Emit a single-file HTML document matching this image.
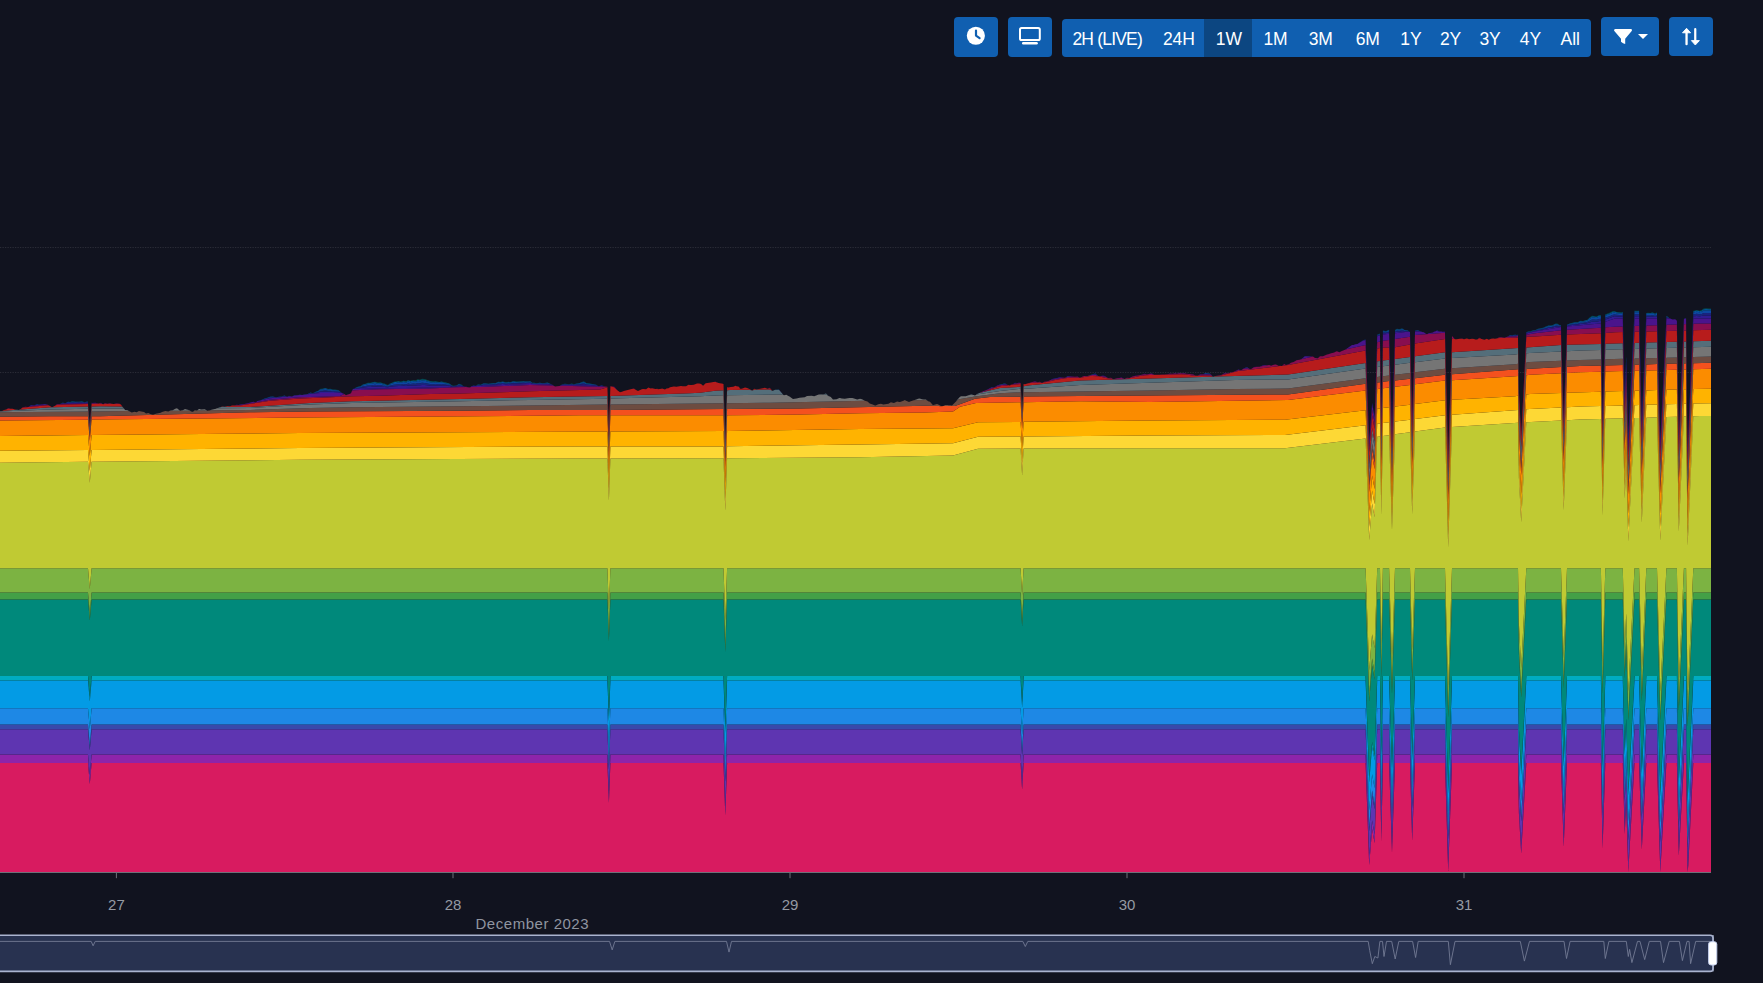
<!DOCTYPE html>
<html><head><meta charset="utf-8">
<style>
html,body{margin:0;padding:0;background:#11131f;width:1763px;height:983px;overflow:hidden;}
body{position:relative;font-family:"Liberation Sans",sans-serif;}
svg{position:absolute;left:0;top:0;}
.btn{position:absolute;background:#105fb0;border-radius:4px;}
.grp{position:absolute;left:1062px;top:19px;width:529px;height:38px;background:#105fb0;border-radius:4px;overflow:hidden;}
.grp span{position:absolute;top:10px;line-height:normal;color:#fff;font-size:17.5px;white-space:nowrap;}
.grp .act{position:absolute;top:0;left:142px;width:48px;height:38px;background:#0c4681;}
</style></head>
<body>
<svg width="1763" height="983" viewBox="0 0 1763 983">
<g stroke="rgba(255,255,255,0.11)" stroke-width="1" stroke-dasharray="1.25 1.25">
<line x1="0" y1="247.5" x2="1711" y2="247.5"/>
<line x1="0" y1="372.5" x2="1711" y2="372.5"/>
</g>
<g>
<path fill="#D81B60" d="M0,762.9 88,762.9 89.8,783.9 91.6,762.9 607.4,762.9 608.9,802.8 610.4,762.9 723.5,762.9 725.3,815.4 727.1,762.9 1020.6,762.9 1022.1,789.4 1023.6,762.9 1365.6,762.9 1369.2,864.9 1372.1,828.9 1374.6,842.9 1377.2,762.9 1380,762.9 1381.3,841.4 1382.9,762.9 1389.1,762.9 1392,852.2 1395,762.9 1410,762.9 1412.2,840.8 1415,762.9 1445,762.9 1448.2,870.9 1452,762.9 1518,762.9 1518.9,812.95 1521.2,853.54 1526.3,762.9 1561,762.9 1563.7,846.68 1567,762.9 1600.9,762.9 1602.6,848.34 1605.3,762.9 1622.8,762.9 1624.7,833.7 1626.2,802.73 1628.3,871.75 1634.5,762.9 1639.1,762.9 1641.8,849.3 1646.3,762.9 1657,762.9 1660.3,872.1 1666.4,762.9 1676.9,762.9 1678.8,855.7 1683.9,762.9 1686.1,762.9 1687.6,872.1 1688.3,864.98 1693.3,762.9 1711,762.9 1711,872.4 0,872.4Z"/>
<path fill="#8E24AA" d="M0,754.5 88,754.5 89.8,775.5 91.6,754.5 607.4,754.5 608.9,794.49 610.4,754.5 723.5,754.5 725.3,807 727.1,754.5 1020.6,754.5 1022.1,781 1023.6,754.5 1365.6,754.5 1369.2,856.5 1372.1,820.5 1374.6,834.5 1377.2,754.5 1380,754.5 1381.3,833 1382.9,754.5 1389.1,754.5 1392,844.05 1395,754.5 1410,754.5 1412.2,832.58 1415,754.5 1445,754.5 1448.2,863.02 1452,754.5 1518,754.5 1518.9,804.76 1521.2,845.52 1526.3,754.5 1561,754.5 1563.7,838.53 1567,754.5 1600.9,754.5 1602.6,840.4 1605.3,754.5 1622.8,754.5 1624.7,825.7 1626.2,794.55 1628.3,863.97 1634.5,754.5 1639.1,754.5 1641.8,841.69 1646.3,754.5 1657,754.5 1660.3,865.5 1666.4,754.5 1676.9,754.5 1678.8,848.26 1683.9,754.5 1686.1,754.5 1687.6,871.52 1693.3,754.5 1711,754.5 1711,762.9 1693.3,762.9 1688.3,864.98 1687.6,872.1 1686.1,762.9 1683.9,762.9 1678.8,855.7 1676.9,762.9 1666.4,762.9 1660.3,872.1 1657,762.9 1646.3,762.9 1641.8,849.3 1639.1,762.9 1634.5,762.9 1628.3,871.75 1626.2,802.73 1624.7,833.7 1622.8,762.9 1605.3,762.9 1602.6,848.34 1600.9,762.9 1567,762.9 1563.7,846.68 1561,762.9 1526.3,762.9 1521.2,853.54 1518.9,812.95 1518,762.9 1452,762.9 1448.2,870.9 1445,762.9 1415,762.9 1412.2,840.8 1410,762.9 1395,762.9 1392,852.2 1389.1,762.9 1382.9,762.9 1381.3,841.4 1380,762.9 1377.2,762.9 1374.6,842.9 1372.1,828.9 1369.2,864.9 1365.6,762.9 1023.6,762.9 1022.1,789.4 1020.6,762.9 727.1,762.9 725.3,815.4 723.5,762.9 610.4,762.9 608.9,802.8 607.4,762.9 91.6,762.9 89.8,783.9 88,762.9 0,762.9Z"/>
<path fill="#5E35B1" d="M0,729.3 88,729.3 89.8,750.3 91.6,729.3 607.4,729.3 608.9,769.56 610.4,729.3 723.5,729.3 725.3,781.8 727.1,729.3 1020.6,729.3 1022.1,755.8 1023.6,729.3 1365.6,729.3 1369.2,831.3 1372.1,795.3 1374.6,809.3 1377.2,729.3 1380,729.3 1381.3,807.8 1382.9,729.3 1389.1,729.3 1392,819.58 1395,729.3 1410,729.3 1412.2,807.91 1415,729.3 1445,729.3 1448.2,839.37 1452,729.3 1518,729.3 1518.9,780.2 1521.2,821.48 1526.3,729.3 1561,729.3 1563.7,814.08 1567,729.3 1600.9,729.3 1602.6,816.56 1605.3,729.3 1622.8,729.3 1624.7,801.69 1626.2,770.02 1628.3,840.6 1634.5,729.3 1639.1,729.3 1641.8,818.84 1646.3,729.3 1657,729.3 1660.3,841.98 1666.4,729.3 1676.9,729.3 1678.8,825.94 1683.9,729.3 1686.1,729.3 1687.6,847.99 1693.3,729.3 1711,729.3 1711,754.5 1693.3,754.5 1687.6,871.52 1686.1,754.5 1683.9,754.5 1678.8,848.26 1676.9,754.5 1666.4,754.5 1660.3,865.5 1657,754.5 1646.3,754.5 1641.8,841.69 1639.1,754.5 1634.5,754.5 1628.3,863.97 1626.2,794.55 1624.7,825.7 1622.8,754.5 1605.3,754.5 1602.6,840.4 1600.9,754.5 1567,754.5 1563.7,838.53 1561,754.5 1526.3,754.5 1521.2,845.52 1518.9,804.76 1518,754.5 1452,754.5 1448.2,863.02 1445,754.5 1415,754.5 1412.2,832.58 1410,754.5 1395,754.5 1392,844.05 1389.1,754.5 1382.9,754.5 1381.3,833 1380,754.5 1377.2,754.5 1374.6,834.5 1372.1,820.5 1369.2,856.5 1365.6,754.5 1023.6,754.5 1022.1,781 1020.6,754.5 727.1,754.5 725.3,807 723.5,754.5 610.4,754.5 608.9,794.49 607.4,754.5 91.6,754.5 89.8,775.5 88,754.5 0,754.5Z"/>
<path fill="#3949AB" d="M0,724.5 88,724.5 89.8,745.5 91.6,724.5 607.4,724.5 608.9,764.81 610.4,724.5 723.5,724.5 725.3,777 727.1,724.5 1020.6,724.5 1022.1,751 1023.6,724.5 1365.6,724.5 1369.2,826.5 1372.1,790.5 1374.6,804.5 1377.2,724.5 1380,724.5 1381.3,803 1382.9,724.5 1389.1,724.5 1392,814.92 1395,724.5 1410,724.5 1412.2,803.21 1415,724.5 1445,724.5 1448.2,834.87 1452,724.5 1518,724.5 1518.9,775.53 1521.2,816.9 1526.3,724.5 1561,724.5 1563.7,809.43 1567,724.5 1600.9,724.5 1602.6,812.02 1605.3,724.5 1622.8,724.5 1624.7,797.12 1626.2,765.35 1628.3,836.15 1634.5,724.5 1639.1,724.5 1641.8,814.49 1646.3,724.5 1657,724.5 1660.3,837.5 1666.4,724.5 1676.9,724.5 1678.8,821.68 1683.9,724.5 1686.1,724.5 1687.6,843.51 1693.3,724.5 1711,724.5 1711,729.3 1693.3,729.3 1687.6,847.99 1686.1,729.3 1683.9,729.3 1678.8,825.94 1676.9,729.3 1666.4,729.3 1660.3,841.98 1657,729.3 1646.3,729.3 1641.8,818.84 1639.1,729.3 1634.5,729.3 1628.3,840.6 1626.2,770.02 1624.7,801.69 1622.8,729.3 1605.3,729.3 1602.6,816.56 1600.9,729.3 1567,729.3 1563.7,814.08 1561,729.3 1526.3,729.3 1521.2,821.48 1518.9,780.2 1518,729.3 1452,729.3 1448.2,839.37 1445,729.3 1415,729.3 1412.2,807.91 1410,729.3 1395,729.3 1392,819.58 1389.1,729.3 1382.9,729.3 1381.3,807.8 1380,729.3 1377.2,729.3 1374.6,809.3 1372.1,795.3 1369.2,831.3 1365.6,729.3 1023.6,729.3 1022.1,755.8 1020.6,729.3 727.1,729.3 725.3,781.8 723.5,729.3 610.4,729.3 608.9,769.56 607.4,729.3 91.6,729.3 89.8,750.3 88,729.3 0,729.3Z"/>
<path fill="#1E88E5" d="M0,708.3 88,708.3 89.8,729.3 91.6,708.3 607.4,708.3 608.9,748.79 610.4,708.3 723.5,708.3 725.3,760.8 727.1,708.3 1020.6,708.3 1022.1,734.8 1023.6,708.3 1365.6,708.3 1369.2,810.3 1372.1,774.3 1374.6,788.3 1377.2,708.3 1380,708.3 1381.3,786.8 1382.9,708.3 1389.1,708.3 1392,799.2 1395,708.3 1410,708.3 1412.2,787.35 1415,708.3 1445,708.3 1448.2,819.67 1452,708.3 1518,708.3 1518.9,759.74 1521.2,801.45 1526.3,708.3 1561,708.3 1563.7,793.71 1567,708.3 1600.9,708.3 1602.6,796.7 1605.3,708.3 1622.8,708.3 1624.7,781.68 1626.2,749.58 1628.3,821.12 1634.5,708.3 1639.1,708.3 1641.8,799.81 1646.3,708.3 1657,708.3 1660.3,822.38 1666.4,708.3 1676.9,708.3 1678.8,807.33 1683.9,708.3 1686.1,708.3 1687.6,828.39 1693.3,708.3 1711,708.3 1711,724.5 1693.3,724.5 1687.6,843.51 1686.1,724.5 1683.9,724.5 1678.8,821.68 1676.9,724.5 1666.4,724.5 1660.3,837.5 1657,724.5 1646.3,724.5 1641.8,814.49 1639.1,724.5 1634.5,724.5 1628.3,836.15 1626.2,765.35 1624.7,797.12 1622.8,724.5 1605.3,724.5 1602.6,812.02 1600.9,724.5 1567,724.5 1563.7,809.43 1561,724.5 1526.3,724.5 1521.2,816.9 1518.9,775.53 1518,724.5 1452,724.5 1448.2,834.87 1445,724.5 1415,724.5 1412.2,803.21 1410,724.5 1395,724.5 1392,814.92 1389.1,724.5 1382.9,724.5 1381.3,803 1380,724.5 1377.2,724.5 1374.6,804.5 1372.1,790.5 1369.2,826.5 1365.6,724.5 1023.6,724.5 1022.1,751 1020.6,724.5 727.1,724.5 725.3,777 723.5,724.5 610.4,724.5 608.9,764.81 607.4,724.5 91.6,724.5 89.8,745.5 88,724.5 0,724.5Z"/>
<path fill="#039BE5" d="M0,680.4 88,680.4 89.8,701.4 91.6,680.4 607.4,680.4 608.9,721.19 610.4,680.4 723.5,680.4 725.3,732.9 727.1,680.4 1020.6,680.4 1022.1,706.9 1023.6,680.4 1365.6,680.4 1369.2,782.4 1372.1,746.4 1374.6,760.4 1377.2,680.4 1380,680.4 1381.3,758.9 1382.9,680.4 1389.1,680.4 1392,772.12 1395,680.4 1410,680.4 1412.2,760.04 1415,680.4 1445,680.4 1448.2,793.49 1452,680.4 1518,680.4 1518.9,732.55 1521.2,774.84 1526.3,680.4 1561,680.4 1563.7,766.65 1567,680.4 1600.9,680.4 1602.6,770.32 1605.3,680.4 1622.8,680.4 1624.7,755.1 1626.2,722.42 1628.3,795.25 1634.5,680.4 1639.1,680.4 1641.8,774.52 1646.3,680.4 1657,680.4 1660.3,796.34 1666.4,680.4 1676.9,680.4 1678.8,782.61 1683.9,680.4 1686.1,680.4 1687.6,802.35 1693.3,680.4 1711,680.4 1711,708.3 1693.3,708.3 1687.6,828.39 1686.1,708.3 1683.9,708.3 1678.8,807.33 1676.9,708.3 1666.4,708.3 1660.3,822.38 1657,708.3 1646.3,708.3 1641.8,799.81 1639.1,708.3 1634.5,708.3 1628.3,821.12 1626.2,749.58 1624.7,781.68 1622.8,708.3 1605.3,708.3 1602.6,796.7 1600.9,708.3 1567,708.3 1563.7,793.71 1561,708.3 1526.3,708.3 1521.2,801.45 1518.9,759.74 1518,708.3 1452,708.3 1448.2,819.67 1445,708.3 1415,708.3 1412.2,787.35 1410,708.3 1395,708.3 1392,799.2 1389.1,708.3 1382.9,708.3 1381.3,786.8 1380,708.3 1377.2,708.3 1374.6,788.3 1372.1,774.3 1369.2,810.3 1365.6,708.3 1023.6,708.3 1022.1,734.8 1020.6,708.3 727.1,708.3 725.3,760.8 723.5,708.3 610.4,708.3 608.9,748.79 607.4,708.3 91.6,708.3 89.8,729.3 88,708.3 0,708.3Z"/>
<path fill="#00ACC1" d="M0,676 88,676 89.8,697 91.6,676 607.4,676 608.9,716.84 610.4,676 723.5,676 725.3,728.5 727.1,676 1020.6,676 1022.1,702.5 1023.6,676 1365.6,676 1369.2,778 1372.1,742 1374.6,756 1377.2,676 1380,676 1381.3,754.5 1382.9,676 1389.1,676 1392,767.85 1395,676 1410,676 1412.2,755.73 1415,676 1445,676 1448.2,789.36 1452,676 1518,676 1518.9,728.26 1521.2,770.64 1526.3,676 1561,676 1563.7,762.38 1567,676 1600.9,676 1602.6,766.16 1605.3,676 1622.8,676 1624.7,750.91 1626.2,718.14 1628.3,791.17 1634.5,676 1639.1,676 1641.8,770.53 1646.3,676 1657,676 1660.3,792.23 1666.4,676 1676.9,676 1678.8,778.72 1683.9,676 1686.1,676 1687.6,798.24 1693.3,676 1711,676 1711,680.4 1693.3,680.4 1687.6,802.35 1686.1,680.4 1683.9,680.4 1678.8,782.61 1676.9,680.4 1666.4,680.4 1660.3,796.34 1657,680.4 1646.3,680.4 1641.8,774.52 1639.1,680.4 1634.5,680.4 1628.3,795.25 1626.2,722.42 1624.7,755.1 1622.8,680.4 1605.3,680.4 1602.6,770.32 1600.9,680.4 1567,680.4 1563.7,766.65 1561,680.4 1526.3,680.4 1521.2,774.84 1518.9,732.55 1518,680.4 1452,680.4 1448.2,793.49 1445,680.4 1415,680.4 1412.2,760.04 1410,680.4 1395,680.4 1392,772.12 1389.1,680.4 1382.9,680.4 1381.3,758.9 1380,680.4 1377.2,680.4 1374.6,760.4 1372.1,746.4 1369.2,782.4 1365.6,680.4 1023.6,680.4 1022.1,706.9 1020.6,680.4 727.1,680.4 725.3,732.9 723.5,680.4 610.4,680.4 608.9,721.19 607.4,680.4 91.6,680.4 89.8,701.4 88,680.4 0,680.4Z"/>
<path fill="#00897B" d="M0,599.4 88,599.4 89.8,620.4 91.6,599.4 607.4,599.4 608.9,641.06 610.4,599.4 723.5,599.4 725.3,651.9 727.1,599.4 1020.6,599.4 1022.1,625.9 1023.6,599.4 1365.6,599.4 1369.2,701.4 1372.1,665.4 1374.6,679.4 1377.2,599.4 1380,599.4 1381.3,677.9 1382.9,599.4 1389.1,599.4 1392,693.49 1395,599.4 1410,599.4 1412.2,680.74 1415,599.4 1445,599.4 1448.2,717.48 1452,599.4 1518,599.4 1518.9,653.61 1521.2,697.57 1526.3,599.4 1561,599.4 1563.7,688.07 1567,599.4 1600.9,599.4 1602.6,693.71 1605.3,599.4 1622.8,599.4 1624.7,677.93 1626.2,643.57 1628.3,720.14 1634.5,599.4 1639.1,599.4 1641.8,701.09 1646.3,599.4 1657,599.4 1660.3,720.73 1666.4,599.4 1676.9,599.4 1678.8,710.85 1683.9,599.4 1686.1,599.4 1687.6,726.73 1693.3,599.4 1711,599.4 1711,676 1693.3,676 1687.6,798.24 1686.1,676 1683.9,676 1678.8,778.72 1676.9,676 1666.4,676 1660.3,792.23 1657,676 1646.3,676 1641.8,770.53 1639.1,676 1634.5,676 1628.3,791.17 1626.2,718.14 1624.7,750.91 1622.8,676 1605.3,676 1602.6,766.16 1600.9,676 1567,676 1563.7,762.38 1561,676 1526.3,676 1521.2,770.64 1518.9,728.26 1518,676 1452,676 1448.2,789.36 1445,676 1415,676 1412.2,755.73 1410,676 1395,676 1392,767.85 1389.1,676 1382.9,676 1381.3,754.5 1380,676 1377.2,676 1374.6,756 1372.1,742 1369.2,778 1365.6,676 1023.6,676 1022.1,702.5 1020.6,676 727.1,676 725.3,728.5 723.5,676 610.4,676 608.9,716.84 607.4,676 91.6,676 89.8,697 88,676 0,676Z"/>
<path fill="#43A047" d="M0,592.5 88,592.5 89.8,613.5 91.6,592.5 607.4,592.5 608.9,634.24 610.4,592.5 723.5,592.5 725.3,645 727.1,592.5 1020.6,592.5 1022.1,619 1023.6,592.5 1365.6,592.5 1369.2,694.5 1372.1,658.5 1374.6,672.5 1377.2,592.5 1380,592.5 1381.3,671 1382.9,592.5 1389.1,592.5 1392,686.79 1395,592.5 1410,592.5 1412.2,673.99 1415,592.5 1445,592.5 1448.2,711.01 1452,592.5 1518,592.5 1518.9,646.88 1521.2,690.99 1526.3,592.5 1561,592.5 1563.7,681.38 1567,592.5 1600.9,592.5 1602.6,687.19 1605.3,592.5 1622.8,592.5 1624.7,671.36 1626.2,636.86 1628.3,713.74 1634.5,592.5 1639.1,592.5 1641.8,694.84 1646.3,592.5 1657,592.5 1660.3,714.29 1666.4,592.5 1676.9,592.5 1678.8,704.74 1683.9,592.5 1686.1,592.5 1687.6,720.29 1693.3,592.5 1711,592.5 1711,599.4 1693.3,599.4 1687.6,726.73 1686.1,599.4 1683.9,599.4 1678.8,710.85 1676.9,599.4 1666.4,599.4 1660.3,720.73 1657,599.4 1646.3,599.4 1641.8,701.09 1639.1,599.4 1634.5,599.4 1628.3,720.14 1626.2,643.57 1624.7,677.93 1622.8,599.4 1605.3,599.4 1602.6,693.71 1600.9,599.4 1567,599.4 1563.7,688.07 1561,599.4 1526.3,599.4 1521.2,697.57 1518.9,653.61 1518,599.4 1452,599.4 1448.2,717.48 1445,599.4 1415,599.4 1412.2,680.74 1410,599.4 1395,599.4 1392,693.49 1389.1,599.4 1382.9,599.4 1381.3,677.9 1380,599.4 1377.2,599.4 1374.6,679.4 1372.1,665.4 1369.2,701.4 1365.6,599.4 1023.6,599.4 1022.1,625.9 1020.6,599.4 727.1,599.4 725.3,651.9 723.5,599.4 610.4,599.4 608.9,641.06 607.4,599.4 91.6,599.4 89.8,620.4 88,599.4 0,599.4Z"/>
<path fill="#7CB342" d="M0,568.3 88,568.3 89.8,589.3 91.6,568.3 607.4,568.3 608.9,610.3 610.4,568.3 723.5,568.3 725.3,620.8 727.1,568.3 1020.6,568.3 1022.1,594.8 1023.6,568.3 1365.6,568.3 1369.2,670.3 1372.1,634.3 1374.6,648.3 1377.2,568.3 1380,568.3 1381.3,646.8 1382.9,568.3 1389.1,568.3 1392,663.3 1395,568.3 1410,568.3 1412.2,650.3 1415,568.3 1445,568.3 1448.2,688.3 1452,568.3 1518,568.3 1518.9,623.3 1521.2,667.9 1526.3,568.3 1561,568.3 1563.7,657.9 1567,568.3 1600.9,568.3 1602.6,664.3 1605.3,568.3 1622.8,568.3 1624.7,648.3 1626.2,613.3 1628.3,691.3 1634.5,568.3 1639.1,568.3 1641.8,672.9 1646.3,568.3 1657,568.3 1660.3,691.7 1666.4,568.3 1676.9,568.3 1678.8,683.3 1683.9,568.3 1686.1,568.3 1687.6,697.7 1693.3,568.3 1711,568.3 1711,592.5 1693.3,592.5 1687.6,720.29 1686.1,592.5 1683.9,592.5 1678.8,704.74 1676.9,592.5 1666.4,592.5 1660.3,714.29 1657,592.5 1646.3,592.5 1641.8,694.84 1639.1,592.5 1634.5,592.5 1628.3,713.74 1626.2,636.86 1624.7,671.36 1622.8,592.5 1605.3,592.5 1602.6,687.19 1600.9,592.5 1567,592.5 1563.7,681.38 1561,592.5 1526.3,592.5 1521.2,690.99 1518.9,646.88 1518,592.5 1452,592.5 1448.2,711.01 1445,592.5 1415,592.5 1412.2,673.99 1410,592.5 1395,592.5 1392,686.79 1389.1,592.5 1382.9,592.5 1381.3,671 1380,592.5 1377.2,592.5 1374.6,672.5 1372.1,658.5 1369.2,694.5 1365.6,592.5 1023.6,592.5 1022.1,619 1020.6,592.5 727.1,592.5 725.3,645 723.5,592.5 610.4,592.5 608.9,634.24 607.4,592.5 91.6,592.5 89.8,613.5 88,592.5 0,592.5Z"/>
<path fill="#C0CA33" d="M0,462.7 88,461.85 89.8,482.83 91.6,461.81 300,459.8 580,458.4 607.4,458.38 608.9,500.38 610.4,458.38 723.5,458.3 725.3,510.8 727.1,458.28 860,457.2 953,455.5 978,448.7 1020.6,448.58 1022.1,475.07 1023.6,448.57 1150,448.2 1285,448.2 1365.6,438.42 1369.2,539.92 1372.1,503.51 1374.6,517.17 1377.2,436.81 1380,436.42 1381.3,514.74 1382.9,436.02 1389.1,435.16 1392,529.75 1395,434.34 1410,432.26 1412.2,513.95 1415,431.56 1445,427.4 1448.2,547.2 1452,426.96 1518,422.8 1518.9,477.74 1521.2,522.19 1526.3,422.25 1561,420.51 1563.7,509.98 1567,420.22 1580,419.6 1600.9,418.99 1602.6,514.94 1605.3,418.86 1622.8,418.35 1624.7,498.3 1626.2,463.25 1628.3,541.19 1634.5,418.01 1639.1,417.88 1641.8,522.4 1646.3,417.67 1657,417.35 1660.3,540.66 1666.4,417.08 1676.9,416.77 1678.8,531.72 1683.9,416.57 1686.1,416.51 1687.6,545.86 1693.3,416.3 1700,416.1 1711,416 1711,568.3 1693.3,568.3 1687.6,697.7 1686.1,568.3 1683.9,568.3 1678.8,683.3 1676.9,568.3 1666.4,568.3 1660.3,691.7 1657,568.3 1646.3,568.3 1641.8,672.9 1639.1,568.3 1634.5,568.3 1628.3,691.3 1626.2,613.3 1624.7,648.3 1622.8,568.3 1605.3,568.3 1602.6,664.3 1600.9,568.3 1567,568.3 1563.7,657.9 1561,568.3 1526.3,568.3 1521.2,667.9 1518.9,623.3 1518,568.3 1452,568.3 1448.2,688.3 1445,568.3 1415,568.3 1412.2,650.3 1410,568.3 1395,568.3 1392,663.3 1389.1,568.3 1382.9,568.3 1381.3,646.8 1380,568.3 1377.2,568.3 1374.6,648.3 1372.1,634.3 1369.2,670.3 1365.6,568.3 1023.6,568.3 1022.1,594.8 1020.6,568.3 727.1,568.3 725.3,620.8 723.5,568.3 610.4,568.3 608.9,610.3 607.4,568.3 91.6,568.3 89.8,589.3 88,568.3 0,568.3Z"/>
<path fill="#FDD835" d="M0,450.8 88,449.98 89.8,470.96 91.6,449.95 300,448 580,446.4 607.4,446.4 608.9,488.4 610.4,446.4 723.5,446.4 725.3,498.9 727.1,446.37 860,444.4 953,443.2 978,436.8 1020.6,436.5 1022.1,462.99 1023.6,436.48 1150,435.6 1285,435 1365.6,425.32 1369.2,526.86 1372.1,490.49 1374.6,504.18 1377.2,423.84 1380,423.49 1381.3,501.82 1382.9,423.12 1389.1,422.33 1392,516.96 1395,421.57 1410,419.66 1412.2,501.38 1415,419.02 1445,415.2 1448.2,534.97 1452,414.7 1518,409.96 1518.9,464.89 1521.2,509.3 1526.3,409.3 1530,409 1561,407.51 1563.7,496.98 1567,407.22 1580,406.6 1600.9,406.04 1602.6,502 1605.3,405.93 1622.8,405.46 1624.7,485.41 1626.2,450.37 1628.3,528.31 1634.5,405.15 1639.1,405.02 1641.8,509.55 1646.3,404.83 1657,404.55 1660.3,527.86 1666.4,404.3 1676.9,404.02 1678.8,518.97 1683.9,403.83 1686.1,403.77 1687.6,533.13 1693.3,403.58 1711,403.2 1711,416 1700,416.1 1693.3,416.3 1687.6,545.86 1686.1,416.51 1683.9,416.57 1678.8,531.72 1676.9,416.77 1666.4,417.08 1660.3,540.66 1657,417.35 1646.3,417.67 1641.8,522.4 1639.1,417.88 1634.5,418.01 1628.3,541.19 1626.2,463.25 1624.7,498.3 1622.8,418.35 1605.3,418.86 1602.6,514.94 1600.9,418.99 1580,419.6 1567,420.22 1563.7,509.98 1561,420.51 1526.3,422.25 1521.2,522.19 1518.9,477.74 1518,422.8 1452,426.96 1448.2,547.2 1445,427.4 1415,431.56 1412.2,513.95 1410,432.26 1395,434.34 1392,529.75 1389.1,435.16 1382.9,436.02 1381.3,514.74 1380,436.42 1377.2,436.81 1374.6,517.17 1372.1,503.51 1369.2,539.92 1365.6,438.42 1285,448.2 1150,448.2 1023.6,448.57 1022.1,475.07 1020.6,448.58 978,448.7 953,455.5 860,457.2 727.1,458.28 725.3,510.8 723.5,458.3 610.4,458.38 608.9,500.38 607.4,458.38 580,458.4 300,459.8 91.6,461.81 89.8,482.83 88,461.85 0,462.7Z"/>
<path fill="#FFB300" d="M0,436 88,435.12 89.8,456.1 91.6,435.08 300,433 607.4,431.42 608.9,473.42 610.4,431.42 723.5,431.1 725.3,483.6 727.1,431.07 860,429 953,428.3 978,422.3 1020.6,421.88 1022.1,448.36 1023.6,421.85 1150,420.6 1285,419.7 1365.6,410.32 1369.2,511.86 1372.1,475.49 1374.6,489.18 1377.2,408.84 1380,408.49 1381.3,486.82 1382.9,408.12 1389.1,407.33 1392,501.96 1395,406.57 1410,404.66 1412.2,486.38 1415,404.02 1445,400.2 1448.2,520.02 1452,399.8 1515,396.2 1518,395.76 1518.9,450.63 1521.2,494.89 1526.3,394.54 1530,394 1561,392.88 1563.7,482.39 1567,392.67 1600.9,391.63 1602.6,487.58 1605.3,391.5 1622.8,391.02 1624.7,470.97 1626.2,435.93 1628.3,513.87 1634.5,390.7 1639.1,390.57 1641.8,495.1 1646.3,390.38 1657,390.08 1660.3,513.39 1666.4,389.82 1676.9,389.54 1678.8,504.48 1683.9,389.34 1686.1,389.28 1687.6,518.64 1693.3,389.08 1711,388.8 1711,403.2 1693.3,403.58 1687.6,533.13 1686.1,403.77 1683.9,403.83 1678.8,518.97 1676.9,404.02 1666.4,404.3 1660.3,527.86 1657,404.55 1646.3,404.83 1641.8,509.55 1639.1,405.02 1634.5,405.15 1628.3,528.31 1626.2,450.37 1624.7,485.41 1622.8,405.46 1605.3,405.93 1602.6,502 1600.9,406.04 1580,406.6 1567,407.22 1563.7,496.98 1561,407.51 1530,409 1526.3,409.3 1521.2,509.3 1518.9,464.89 1518,409.96 1452,414.7 1448.2,534.97 1445,415.2 1415,419.02 1412.2,501.38 1410,419.66 1395,421.57 1392,516.96 1389.1,422.33 1382.9,423.12 1381.3,501.82 1380,423.49 1377.2,423.84 1374.6,504.18 1372.1,490.49 1369.2,526.86 1365.6,425.32 1285,435 1150,435.6 1023.6,436.48 1022.1,462.99 1020.6,436.5 978,436.8 953,443.2 860,444.4 727.1,446.37 725.3,498.9 723.5,446.4 610.4,446.4 608.9,488.4 607.4,446.4 580,446.4 300,448 91.6,449.95 89.8,470.96 88,449.98 0,450.8Z"/>
<path fill="#FB8C00" d="M0,420.6 88,419.66 89.8,440.64 91.6,419.62 300,417.6 580,415.3 607.4,415.3 608.9,457.3 610.4,415.3 723.5,415.3 725.3,467.8 727.1,415.28 800,414.5 860,413.3 925,412.4 953,411.5 960,406.7 976,402.9 1020.6,402.21 1022.1,428.69 1023.6,402.17 1080,401.3 1150,401.9 1288,400 1365.6,390.43 1369.2,491.98 1372.1,455.62 1374.6,469.31 1377.2,388.99 1380,388.64 1381.3,466.98 1382.9,388.28 1389.1,387.52 1392,482.16 1395,386.79 1410,384.93 1412.2,466.66 1415,384.31 1445,380.6 1448.2,500.4 1452,380.17 1515,376.3 1518,376 1518.9,430.91 1521.2,475.28 1526.3,375.17 1530,374.8 1561,373.25 1563.7,462.72 1567,372.95 1580,372.3 1600.9,371.73 1602.6,467.68 1605.3,371.6 1622.8,371.12 1624.7,451.07 1626.2,416.03 1628.3,493.97 1634.5,370.8 1639.1,370.67 1641.8,475.2 1646.3,370.48 1657,370.18 1660.3,493.49 1666.4,369.92 1676.9,369.64 1678.8,484.58 1683.9,369.44 1686.1,369.38 1687.6,498.74 1693.3,369.18 1711,368.8 1711,388.8 1693.3,389.08 1687.6,518.64 1686.1,389.28 1683.9,389.34 1678.8,504.48 1676.9,389.54 1666.4,389.82 1660.3,513.39 1657,390.08 1646.3,390.38 1641.8,495.1 1639.1,390.57 1634.5,390.7 1628.3,513.87 1626.2,435.93 1624.7,470.97 1622.8,391.02 1605.3,391.5 1602.6,487.58 1600.9,391.63 1567,392.67 1563.7,482.39 1561,392.88 1530,394 1526.3,394.54 1521.2,494.89 1518.9,450.63 1518,395.76 1515,396.2 1452,399.8 1448.2,520.02 1445,400.2 1415,404.02 1412.2,486.38 1410,404.66 1395,406.57 1392,501.96 1389.1,407.33 1382.9,408.12 1381.3,486.82 1380,408.49 1377.2,408.84 1374.6,489.18 1372.1,475.49 1369.2,511.86 1365.6,410.32 1285,419.7 1150,420.6 1023.6,421.85 1022.1,448.36 1020.6,421.88 978,422.3 953,428.3 860,429 727.1,431.07 725.3,483.6 723.5,431.1 610.4,431.42 608.9,473.42 607.4,431.42 300,433 91.6,435.08 89.8,456.1 88,435.12 0,436Z"/>
<path fill="#F4511E" d="M0,416.8 50,416.3 88,416.3 89.8,437.3 91.6,416.3 100,416.3 250,412.2 310,411.5 460,410.8 530,409.9 607.4,409.9 608.9,451.9 610.4,409.9 723.5,409.01 725.3,461.5 727.1,408.99 800,408.6 925,405.8 938.26,405.89 942,406.32 943.28,405.96 955,406 975,398.8 990,397 1020.6,396.63 1022.1,423.11 1023.6,396.59 1080,395.9 1150,395.6 1288,394.4 1365.6,383.82 1369.2,485.4 1372.1,449.07 1374.6,462.78 1377.2,382.48 1380,382.16 1381.3,460.51 1382.9,381.83 1389.1,381.12 1392,475.79 1395,380.44 1410,378.72 1412.2,460.47 1415,378.14 1445,374.7 1448.2,494.46 1452,374.18 1518,369.34 1518.9,424.29 1521.2,468.77 1526.3,368.9 1561,367.09 1563.7,456.55 1567,366.78 1580,366.1 1600.9,365.56 1602.6,461.52 1605.3,365.45 1622.8,364.99 1624.7,444.95 1626.2,409.91 1628.3,487.85 1634.5,364.69 1639.1,364.57 1641.8,469.1 1646.3,364.39 1657,364.11 1660.3,487.43 1666.4,363.87 1676.9,363.6 1678.8,478.55 1683.9,363.42 1686.1,363.36 1687.6,492.72 1693.3,363.17 1711,362.8 1711,368.8 1693.3,369.18 1687.6,498.74 1686.1,369.38 1683.9,369.44 1678.8,484.58 1676.9,369.64 1666.4,369.92 1660.3,493.49 1657,370.18 1646.3,370.48 1641.8,475.2 1639.1,370.67 1634.5,370.8 1628.3,493.97 1626.2,416.03 1624.7,451.07 1622.8,371.12 1605.3,371.6 1602.6,467.68 1600.9,371.73 1580,372.3 1567,372.95 1563.7,462.72 1561,373.25 1530,374.8 1526.3,375.17 1521.2,475.28 1518.9,430.91 1518,376 1515,376.3 1452,380.17 1448.2,500.4 1445,380.6 1415,384.31 1412.2,466.66 1410,384.93 1395,386.79 1392,482.16 1389.1,387.52 1382.9,388.28 1381.3,466.98 1380,388.64 1377.2,388.99 1374.6,469.31 1372.1,455.62 1369.2,491.98 1365.6,390.43 1288,400 1150,401.9 1080,401.3 1023.6,402.17 1022.1,428.69 1020.6,402.21 976,402.9 960,406.7 953,411.5 925,412.4 860,413.3 800,414.5 727.1,415.28 725.3,467.8 723.5,415.3 610.4,415.3 608.9,457.3 607.4,415.3 580,415.3 300,417.6 91.6,419.62 89.8,440.64 88,419.66 0,420.6Z"/>
<path fill="#6D4C41" d="M0,412.2 88,411.42 89.8,432.4 91.6,411.38 127.47,411.06 129.73,411.46 131.78,412.41 132,412.41 134.31,411.68 136.69,412.19 138.94,411.12 140,411.13 144.06,412.02 146.05,413.44 148.31,412.97 150.86,414.15 153,414.91 153.6,414.79 155.76,413.68 160.68,412.73 162,412.12 165.36,410.91 168.21,411.39 170.57,410.69 188.78,410.53 191.84,411.65 193,411.66 194.83,410.48 197.05,410.56 198.91,410.44 204.77,410.39 207.28,410.75 211.42,410.33 250,410 310,407.9 352,407.2 460,406.3 607.4,404.53 608.9,446.51 610.4,404.5 723.5,403.3 725.3,455.77 727.1,403.25 770,402.7 864.91,400.83 867.49,401.49 869.74,403.43 872,404.33 872.67,404.44 875,405.45 875.63,405.42 878.21,404.37 880.98,403.78 883.37,404.49 888.46,403.64 890.91,402.16 893.97,402.88 897.13,401.52 899.25,402.05 900,401.94 904.86,400.28 909,402.03 910.78,401.14 913.87,400.16 925.96,400 928.12,401.31 930,401.63 933,405.2 933.41,404.93 937,404.05 938.26,404.54 941.35,406.2 942,406.32 943.28,405.96 945.2,404.9 948,404.97 948.4,405.16 950.35,405.13 952,405.61 955.74,401.65 958.84,399.31 975,396.4 1000,393.3 1020.6,392.19 1022.1,418.68 1023.6,392.16 1150,390.4 1235,389 1288,388.5 1365.6,378.31 1369.2,479.87 1372.1,443.52 1374.6,457.22 1377.2,376.9 1380,376.56 1381.3,454.91 1382.9,376.21 1389.1,375.46 1392,470.11 1395,374.75 1410,372.93 1412.2,454.67 1415,372.33 1445,368.7 1448.2,488.49 1452,368.25 1515,364.2 1518,363.76 1518.9,418.63 1521.2,462.89 1526.3,362.54 1530,362 1561,360.76 1563.7,450.25 1567,360.52 1580,360 1600.9,359.44 1602.6,455.4 1605.3,359.33 1622.8,358.86 1624.7,438.81 1626.2,403.77 1628.3,481.71 1634.5,358.55 1639.1,358.42 1641.8,462.95 1646.3,358.23 1657,357.95 1660.3,481.26 1666.4,357.7 1676.9,357.42 1678.8,472.37 1683.9,357.23 1686.1,357.17 1687.6,486.53 1693.3,356.98 1711,356.6 1711,362.8 1693.3,363.17 1687.6,492.72 1686.1,363.36 1683.9,363.42 1678.8,478.55 1676.9,363.6 1666.4,363.87 1660.3,487.43 1657,364.11 1646.3,364.39 1641.8,469.1 1639.1,364.57 1634.5,364.69 1628.3,487.85 1626.2,409.91 1624.7,444.95 1622.8,364.99 1605.3,365.45 1602.6,461.52 1600.9,365.56 1580,366.1 1567,366.78 1563.7,456.55 1561,367.09 1526.3,368.9 1521.2,468.77 1518.9,424.29 1518,369.34 1452,374.18 1448.2,494.46 1445,374.7 1415,378.14 1412.2,460.47 1410,378.72 1395,380.44 1392,475.79 1389.1,381.12 1382.9,381.83 1381.3,460.51 1380,382.16 1377.2,382.48 1374.6,462.78 1372.1,449.07 1369.2,485.4 1365.6,383.82 1288,394.4 1150,395.6 1080,395.9 1023.6,396.59 1022.1,423.11 1020.6,396.63 990,397 975,398.8 955,406 943.28,405.96 942,406.32 938.26,405.89 925,405.8 800,408.6 727.1,408.99 725.3,461.5 723.5,409.01 610.4,409.9 608.9,451.9 607.4,409.9 530,409.9 460,410.8 310,411.5 250,412.2 100,416.3 91.6,416.3 89.8,437.3 88,416.3 50,416.3 0,416.8Z"/>
<path fill="#757575" d="M0,411.5 50,409.5 88,408.82 89.8,429.78 91.6,408.75 100,408.6 122.06,408.53 124.44,409.12 125,409.96 127.47,410.33 131.78,412.41 134.31,411.68 136.69,412.19 138.94,411.12 140,411.13 144.06,412.02 146.05,413.44 148.31,412.97 150.86,414.15 153,414.91 153.6,414.79 155.76,413.68 160.68,412.73 162,412.12 165.36,410.91 168.21,411.39 170.57,410.54 172.74,410.29 175.21,408.81 177,408.36 180,410.64 182.82,410.26 185,409.1 186.73,409.43 188.78,410.05 191.84,411.65 193,411.66 194.83,410.36 197.05,410.56 198.91,408.96 200,409.07 200.82,409.62 204.77,409.28 207.28,410.75 210,410.45 211.42,409.75 216.03,408.69 217,408.35 219.19,408.2 250,408.1 310,404.5 352,403.1 460,401.3 530,399.9 607.4,398.64 608.9,440.62 610.4,398.59 700,396.3 715,395.5 723.5,395.37 725.3,447.84 727.1,395.31 780.32,394.39 783.24,394.81 784,395.3 786.28,394.75 788.4,396.08 790,396.73 790.52,397.23 793,399 796.47,398.47 799.62,397.7 804.74,397.21 806.99,396.12 811.77,395.72 814.18,396.26 818.74,394.56 820,394.4 826,394.52 828.84,396.36 830,396.52 831.02,397.15 833,399.43 836.51,399.19 839.36,397.88 840,397.96 841.84,398.57 844.88,398.65 847.8,398.34 849.64,398 852.43,397.99 857.19,399.42 860.01,398.79 862,399.26 864.91,400.7 867.49,401.49 869.74,403.43 872,404.33 872.67,404.44 875,405.45 875.63,405.42 878.21,404.37 880.98,403.78 883.37,404.49 888.46,403.64 890.91,402.16 893.97,402.88 897.13,401.52 899.25,402.05 900,401.94 905,400.22 907.69,401.52 909,402.03 910.78,401.14 913.87,400.16 917.01,399.37 918,398.77 919.71,398.48 921.98,399.17 923.8,399.47 925,399.45 925.96,399.58 928.12,401.31 930,401.63 933,405.2 933.41,404.93 937,404.05 938.26,404.54 941.35,406.2 942,406.32 943.28,405.96 945.2,404.9 948,404.97 948.4,405.16 950.35,405.13 952,405.61 956,401.43 959,397.7 960.87,396.13 962.95,396.36 965.72,396.23 968.55,395.14 970,394.88 971.19,394.86 973.55,395.1 975,395.39 976.52,394.56 1000,390.9 1020.6,388.78 1022.1,415.24 1023.6,388.69 1030,388.5 1080,385 1235,380 1288,379.4 1365.6,368.4 1369.2,469.95 1372.1,433.59 1374.6,447.28 1377.2,366.95 1380,366.6 1381.3,444.94 1382.9,366.24 1389.1,365.47 1392,460.11 1395,364.73 1410,362.86 1412.2,444.59 1415,362.24 1445,358.5 1448.2,478.31 1452,358.09 1515,354.4 1518,354.12 1518.9,409.04 1521.2,453.42 1526.3,353.35 1530,353 1561,351.45 1563.7,440.91 1567,351.15 1580,350.5 1600.9,349.89 1602.6,445.84 1605.3,349.76 1622.8,349.25 1624.7,429.2 1626.2,394.15 1628.3,472.09 1634.5,348.91 1639.1,348.78 1641.8,453.3 1646.3,348.57 1657,348.25 1660.3,471.56 1666.4,347.98 1676.9,347.67 1678.8,462.62 1683.9,347.47 1686.1,347.41 1687.6,476.76 1693.3,347.2 1711,346.8 1711,356.6 1693.3,356.98 1687.6,486.53 1686.1,357.17 1683.9,357.23 1678.8,472.37 1676.9,357.42 1666.4,357.7 1660.3,481.26 1657,357.95 1646.3,358.23 1641.8,462.95 1639.1,358.42 1634.5,358.55 1628.3,481.71 1626.2,403.77 1624.7,438.81 1622.8,358.86 1605.3,359.33 1602.6,455.4 1600.9,359.44 1580,360 1567,360.52 1563.7,450.25 1561,360.76 1530,362 1526.3,362.54 1521.2,462.89 1518.9,418.63 1518,363.76 1515,364.2 1452,368.25 1448.2,488.49 1445,368.7 1415,372.33 1412.2,454.67 1410,372.93 1395,374.75 1392,470.11 1389.1,375.46 1382.9,376.21 1381.3,454.91 1380,376.56 1377.2,376.9 1374.6,457.22 1372.1,443.52 1369.2,479.87 1365.6,378.31 1288,388.5 1235,389 1150,390.4 1023.6,392.16 1022.1,418.68 1020.6,392.19 1000,393.3 975,396.4 958.84,399.31 955.74,401.65 952,405.61 950.35,405.13 948.4,405.16 948,404.97 945.2,404.9 943.28,405.96 942,406.32 941.35,406.2 938.26,404.54 937,404.05 933.41,404.93 933,405.2 930,401.63 928.12,401.31 925.96,400 913.87,400.16 910.78,401.14 909,402.03 904.86,400.28 900,401.94 899.25,402.05 897.13,401.52 893.97,402.88 890.91,402.16 888.46,403.64 883.37,404.49 880.98,403.78 878.21,404.37 875.63,405.42 875,405.45 872.67,404.44 872,404.33 869.74,403.43 867.49,401.49 864.91,400.83 770,402.7 727.1,403.25 725.3,455.77 723.5,403.3 610.4,404.5 608.9,446.51 607.4,404.53 460,406.3 352,407.2 310,407.9 250,410 211.42,410.33 207.28,410.75 204.77,410.39 198.91,410.44 197.05,410.56 194.83,410.48 193,411.66 191.84,411.65 188.78,410.53 170.57,410.69 168.21,411.39 165.36,410.91 162,412.12 160.68,412.73 155.76,413.68 153.6,414.79 153,414.91 150.86,414.15 148.31,412.97 146.05,413.44 144.06,412.02 140,411.13 138.94,411.12 136.69,412.19 134.31,411.68 132,412.41 131.78,412.41 129.73,411.46 127.47,411.06 91.6,411.38 89.8,432.4 88,411.42 0,412.2Z"/>
<path fill="#546E7A" d="M0,411.17 1.81,411.24 4.03,410.69 17,409.71 19,410.06 19.18,409.87 21.19,409.39 50,407.2 52,407.34 52.5,407.15 88,406.52 89.8,427.48 91.6,406.45 100,406.3 122.06,406.4 124.44,409.12 125,409.96 127.47,410.33 131.78,412.41 134.31,411.68 136.69,412.19 138.94,411.12 140,411.13 144.06,412.02 146.05,413.44 148.31,412.97 150.86,414.15 153,414.91 153.6,414.79 155.76,413.68 160.68,412.73 162,412.12 165.36,410.91 168.21,411.39 170.57,410.54 172.74,410.29 175.21,408.81 177,408.36 180,410.64 182.82,410.26 185,409.1 186.73,409.43 188.78,410.05 191.84,411.65 193,411.66 194.83,410.36 197.05,410.56 198.91,408.96 200,409.07 200.82,409.62 204.77,409.28 207.28,410.75 210,410.45 211.42,409.75 216.03,408.69 219.19,407.62 222.19,406.87 250,407 310,403.1 352,401.3 460,399 530,397.2 607.4,395.94 608.9,437.92 610.4,395.89 690,393.2 700,392.7 715,390.7 723.5,390.3 725.3,442.72 727.1,390.14 730,390 749.4,389.76 752.35,390.61 754.29,389.7 770,389.5 772.32,390.73 773,390.84 775.03,389.65 779,389.75 783.24,394.81 784,395.3 786.28,394.75 788.4,396.08 790,396.73 790.52,397.23 793,399 796.47,398.47 799.62,397.7 804.74,397.21 806.99,396.12 811.77,395.72 814.18,396.26 818.74,394.56 821.13,394.32 823.1,394.45 825.67,393.44 826,393.55 828.84,396.36 830,396.52 831.02,397.15 833,399.43 836.51,399.19 839.36,397.88 840,397.96 841.84,398.57 844.88,398.65 847.8,398.34 849.64,398 852.43,397.99 857.19,399.42 860.01,398.79 862,399.26 864.91,400.7 867.49,401.49 869.74,403.43 872,404.33 872.67,404.44 875,405.45 875.63,405.42 878.21,404.37 880.98,403.78 883.37,404.49 888.46,403.64 890.91,402.16 893.97,402.88 897.13,401.52 899.25,402.05 900,401.94 905,400.22 907.69,401.52 909,402.03 910.78,401.14 913.87,400.16 917.01,399.37 918,398.77 919.71,398.48 921.98,399.17 923.8,399.47 925,399.45 925.96,399.58 928.12,401.31 930,401.63 933,405.2 933.41,404.93 937,404.05 938.26,404.54 941.35,406.2 942,406.32 943.28,405.96 945.2,404.9 948,404.97 948.4,405.16 950.35,405.13 952,405.61 956,401.43 959,397.7 960.87,396.13 962.95,396.36 965.72,396.23 968.55,395.14 970,394.73 973.55,395.1 975,395.39 977,394.09 979.33,393.08 981.23,392.53 1000,388.1 1020.6,386.71 1022.1,412.99 1023.6,386.26 1030,385.3 1080,380.4 1150,378.6 1210.79,376.67 1213.18,376.77 1215.27,376.53 1235,375.9 1288,374.5 1365.6,362.88 1369.2,464.4 1372.1,428.01 1374.6,441.67 1377.2,361.32 1380,360.95 1381.3,439.27 1382.9,360.56 1389.1,359.72 1392,454.33 1395,358.93 1410,356.91 1412.2,438.61 1415,356.24 1445,352.2 1448.2,472.2 1452,352.2 1518,347.92 1518.9,402.87 1521.2,447.33 1526.3,347.42 1561,344.98 1563.7,434.51 1567,344.82 1600.9,343.97 1602.6,439.92 1605.3,343.84 1622.8,343.32 1624.7,423.26 1626.2,388.21 1628.3,466.15 1634.5,342.96 1639.1,342.83 1641.8,447.35 1646.3,342.61 1657,342.29 1660.3,465.59 1666.4,342.01 1676.9,341.69 1678.8,456.64 1683.9,341.48 1686.1,341.42 1687.6,470.77 1693.3,341.2 1711,340.8 1711,346.8 1693.3,347.2 1687.6,476.76 1686.1,347.41 1683.9,347.47 1678.8,462.62 1676.9,347.67 1666.4,347.98 1660.3,471.56 1657,348.25 1646.3,348.57 1641.8,453.3 1639.1,348.78 1634.5,348.91 1628.3,472.09 1626.2,394.15 1624.7,429.2 1622.8,349.25 1605.3,349.76 1602.6,445.84 1600.9,349.89 1580,350.5 1567,351.15 1563.7,440.91 1561,351.45 1530,353 1526.3,353.35 1521.2,453.42 1518.9,409.04 1518,354.12 1515,354.4 1452,358.09 1448.2,478.31 1445,358.5 1415,362.24 1412.2,444.59 1410,362.86 1395,364.73 1392,460.11 1389.1,365.47 1382.9,366.24 1381.3,444.94 1380,366.6 1377.2,366.95 1374.6,447.28 1372.1,433.59 1369.2,469.95 1365.6,368.4 1288,379.4 1235,380 1080,385 1030,388.5 1023.6,388.69 1022.1,415.24 1020.6,388.78 1000,390.9 976.52,394.56 975,395.39 973.55,395.1 971.19,394.86 970,394.88 968.55,395.14 965.72,396.23 962.95,396.36 960.87,396.13 959,397.7 956,401.43 952,405.61 950.35,405.13 948.4,405.16 948,404.97 945.2,404.9 943.28,405.96 942,406.32 941.35,406.2 938.26,404.54 937,404.05 933.41,404.93 933,405.2 930,401.63 928.12,401.31 925.96,399.58 925,399.45 923.8,399.47 921.98,399.17 919.71,398.48 918,398.77 917.01,399.37 913.87,400.16 910.78,401.14 909,402.03 907.69,401.52 905,400.22 900,401.94 899.25,402.05 897.13,401.52 893.97,402.88 890.91,402.16 888.46,403.64 883.37,404.49 880.98,403.78 878.21,404.37 875.63,405.42 875,405.45 872.67,404.44 872,404.33 869.74,403.43 867.49,401.49 864.91,400.7 862,399.26 860.01,398.79 857.19,399.42 852.43,397.99 849.64,398 847.8,398.34 844.88,398.65 841.84,398.57 840,397.96 839.36,397.88 836.51,399.19 833,399.43 831.02,397.15 830,396.52 828.84,396.36 826,394.52 820,394.4 818.74,394.56 814.18,396.26 811.77,395.72 806.99,396.12 804.74,397.21 799.62,397.7 796.47,398.47 793,399 790.52,397.23 790,396.73 788.4,396.08 786.28,394.75 784,395.3 783.24,394.81 780.32,394.39 727.1,395.31 725.3,447.84 723.5,395.37 715,395.5 700,396.3 610.4,398.59 608.9,440.62 607.4,398.64 530,399.9 460,401.3 352,403.1 310,404.5 250,408.1 219.19,408.2 217,408.35 216.03,408.69 211.42,409.75 210,410.45 207.28,410.75 204.77,409.28 200.82,409.62 200,409.07 198.91,408.96 197.05,410.56 194.83,410.36 193,411.66 191.84,411.65 188.78,410.05 186.73,409.43 185,409.1 182.82,410.26 180,410.64 177,408.36 175.21,408.81 172.74,410.29 170.57,410.54 168.21,411.39 165.36,410.91 162,412.12 160.68,412.73 155.76,413.68 153.6,414.79 153,414.91 150.86,414.15 148.31,412.97 146.05,413.44 144.06,412.02 140,411.13 138.94,411.12 136.69,412.19 134.31,411.68 131.78,412.41 127.47,410.33 125,409.96 124.44,409.12 122.06,408.53 100,408.6 91.6,408.75 89.8,429.78 88,408.82 50,409.5 0,411.5Z"/>
<path fill="#b71c1c" d="M0,411.17 1.81,411.24 4.03,409.89 6.1,409.57 8.13,408.77 9,408.69 12.58,408.86 14.88,409.58 17,409.66 19,410.06 21.19,408.65 22,407.81 23.26,407.41 48,405.18 50,406.09 52,407.34 57,404.8 88,403.94 89.8,424.89 91.6,403.84 100.98,403.61 103.01,404.22 105,403.67 111.67,403.76 113.73,403.96 116.64,403.83 119.15,403.86 121,404.38 122.06,406.37 124.44,409.12 125,409.96 127.47,410.33 131.78,412.41 134.31,411.68 136.69,412.19 138.94,411.12 140,411.13 144.06,412.02 146.05,413.44 148.31,412.97 150.86,414.15 153,414.91 153.6,414.79 155.76,413.68 160.68,412.73 162,412.12 165.36,410.91 168.21,411.39 170.57,410.54 172.74,410.29 175.21,408.81 177,408.36 180,410.64 182.82,410.26 185,409.1 186.73,409.43 188.78,410.05 191.84,411.65 193,411.66 194.83,410.36 197.05,410.56 198.91,408.96 200,409.07 200.82,409.62 204.77,409.28 207.28,410.75 210,410.45 211.42,409.75 216.03,408.69 219.19,407.62 222.19,406.43 223,406.41 224.73,406.63 227.45,406.03 229.99,406.22 232,405.59 234.62,405.62 236.65,405.45 240,405.5 270,400.8 300,398.6 320,397.8 352,396.3 380,395.8 430,394.1 460,393.6 530,391.3 600,389.5 607.4,387.13 608.9,428.65 610.4,386.29 613,386.86 614.48,387.38 617.61,390.54 620,392.3 621.99,391.8 623.81,390.98 627.76,390.07 629.7,389.38 631.6,388.91 634,388.76 636.07,390.03 638,390.99 641.76,389.34 643,389.12 646.06,389.21 648.4,387.58 650.68,388.58 652,388.28 655.47,388.9 657.38,388.87 658,389.15 661.57,388.78 662,388.61 665,389.5 666.46,388.62 668.43,388.25 670,387.37 673.86,386.43 676.48,386.67 680.93,386.08 682.99,386.35 686.09,386.36 688.41,384.81 690,385.04 691.28,385.01 693.85,384.64 697,383.57 699.19,383.56 701.05,384.04 703.07,385.64 705.66,383.28 710.87,382.6 713.44,382.05 715,381.91 715.69,381.96 718.59,382.9 721.41,383.59 722,383.57 723.34,383.97 723.5,384.11 725.3,438.19 727.1,386.93 728,387.48 730.78,386.89 733.33,386.71 735,386.04 735.6,386.09 739,386.79 740,388.72 741.75,388.63 745,387.53 747.11,388.01 749.4,388.88 752,390.56 752.35,390.61 754.29,388.85 756.58,389.4 758.99,389.06 764.88,387.74 767.5,388.64 769.57,388.15 770,388.2 772.32,390.73 773,390.84 775.03,389.65 779,389.75 783.24,394.81 784,395.3 786.28,394.75 788.4,396.08 790,396.73 790.52,397.23 793,399 796.47,398.47 799.62,397.7 804.74,397.21 806.99,396.12 811.77,395.72 814.18,396.26 818.74,394.56 821.13,394.32 823.1,394.45 825.67,393.44 826,393.55 828.84,396.36 830,396.52 831.02,397.15 833,399.43 836.51,399.19 839.36,397.88 840,397.96 841.84,398.57 844.88,398.65 847.8,398.34 849.64,398 852.43,397.99 857.19,399.42 860.01,398.79 862,399.26 864.91,400.7 867.49,401.49 869.74,403.43 872,404.33 872.67,404.44 875,405.45 875.63,405.42 878.21,404.37 880.98,403.78 883.37,404.49 888.46,403.64 890.91,402.16 893.97,402.88 897.13,401.52 899.25,402.05 900,401.94 905,400.22 907.69,401.52 909,402.03 910.78,401.14 913.87,400.16 917.01,399.37 918,398.77 919.71,398.48 921.98,399.17 923.8,399.47 925,399.45 925.96,399.58 928.12,401.31 930,401.63 933,405.2 933.41,404.93 937,404.05 938.26,404.54 941.35,406.2 942,406.32 943.28,405.96 945.2,404.9 948,404.97 948.4,405.16 950.35,405.13 952,405.61 956,401.43 959,397.7 960.87,396.13 962.95,396.36 965.72,396.23 968.55,395.14 970,394.73 973.55,395.1 975,395.39 977,394.09 979.33,393.08 985,391.58 994.21,388.12 999.03,386.53 1001.62,386.1 1005,385.8 1008.33,385.28 1010,385.46 1010.61,384.97 1015,384.61 1020.6,383.93 1022.1,410.34 1023.6,383.97 1025,384.2 1028.13,383.37 1033.2,382.86 1039.69,382.61 1042,382.96 1044.22,382.32 1046.72,381.95 1053.83,380.28 1064.99,378.2 1070,377.71 1072.61,377.63 1079.7,377.72 1084.33,377.1 1090,376.11 1092.58,375.99 1098.72,376.26 1100.87,376.65 1105.99,377.93 1111.06,378.76 1113.22,379.26 1114,379.27 1115.05,379.16 1120,379.22 1124.59,378.91 1129.52,378.16 1139.74,375.95 1145,375.25 1150,374.94 1164.14,374.78 1181.38,374.29 1186.35,374.53 1192.15,375.39 1195,375.66 1200.39,375.7 1205,375.41 1210.79,375.79 1213.18,376.77 1215.27,376.01 1217.44,376 1220,375.71 1240,370.43 1241.13,370.8 1279.53,365.97 1282.03,365.89 1284,365.4 1288,364.9 1365.6,350.62 1369.2,452 1372.1,415.49 1374.6,429.06 1377.2,348.61 1380,348.12 1381.3,426.4 1382.9,347.62 1389.1,347.4 1392,442.3 1395,347.2 1410,344.5 1412.2,426.1 1415,343.6 1445,339 1448.2,458.94 1452,338.87 1454.69,339.08 1455,339.28 1456.58,339.21 1459.75,338.73 1462.05,338.68 1464.15,339.2 1466.57,338.6 1468,338.87 1468.88,339.32 1472.08,338.85 1474.25,339.06 1475,339.4 1477.15,339.51 1479.22,338.36 1480,338.35 1481.49,338.89 1484.47,339.67 1486.86,338.79 1488.72,339.85 1491.05,338.75 1493.24,338.51 1495,338.68 1496.33,338.55 1498.83,338 1515,337.7 1518,337.45 1518.9,392.38 1521.2,436.79 1526.3,336.79 1535,336.4 1561,334.76 1563.7,424.26 1567,334.54 1600.9,333.24 1602.6,429.13 1605.3,332.95 1615,332.3 1622.8,332.09 1624.7,412.04 1626.2,377 1628.3,454.94 1634.5,331.77 1639.1,331.65 1641.8,436.17 1646.3,331.45 1657,331.16 1660.3,454.47 1666.4,330.91 1676.9,330.63 1678.8,445.57 1683.9,330.44 1686.1,330.38 1687.6,459.74 1693.3,330.18 1711,329.7 1711,340.8 1693.3,341.2 1687.6,470.77 1686.1,341.42 1683.9,341.48 1678.8,456.64 1676.9,341.69 1666.4,342.01 1660.3,465.59 1657,342.29 1646.3,342.61 1641.8,447.35 1639.1,342.83 1634.5,342.96 1628.3,466.15 1626.2,388.21 1624.7,423.26 1622.8,343.32 1605.3,343.84 1602.6,439.92 1600.9,343.97 1567,344.82 1563.7,434.51 1561,344.98 1526.3,347.42 1521.2,447.33 1518.9,402.87 1518,347.92 1452,352.2 1448.2,472.2 1445,352.2 1415,356.24 1412.2,438.61 1410,356.91 1395,358.93 1392,454.33 1389.1,359.72 1382.9,360.56 1381.3,439.27 1380,360.95 1377.2,361.32 1374.6,441.67 1372.1,428.01 1369.2,464.4 1365.6,362.88 1288,374.5 1235,375.9 1215.27,376.53 1213.18,376.77 1210.79,376.67 1150,378.6 1080,380.4 1030,385.3 1023.6,386.26 1022.1,412.99 1020.6,386.71 1000,388.1 981.23,392.53 979.33,393.08 977,394.09 975,395.39 973.55,395.1 970,394.73 968.55,395.14 965.72,396.23 962.95,396.36 960.87,396.13 959,397.7 956,401.43 952,405.61 950.35,405.13 948.4,405.16 948,404.97 945.2,404.9 943.28,405.96 942,406.32 941.35,406.2 938.26,404.54 937,404.05 933.41,404.93 933,405.2 930,401.63 928.12,401.31 925.96,399.58 925,399.45 923.8,399.47 921.98,399.17 919.71,398.48 918,398.77 917.01,399.37 913.87,400.16 910.78,401.14 909,402.03 907.69,401.52 905,400.22 900,401.94 899.25,402.05 897.13,401.52 893.97,402.88 890.91,402.16 888.46,403.64 883.37,404.49 880.98,403.78 878.21,404.37 875.63,405.42 875,405.45 872.67,404.44 872,404.33 869.74,403.43 867.49,401.49 864.91,400.7 862,399.26 860.01,398.79 857.19,399.42 852.43,397.99 849.64,398 847.8,398.34 844.88,398.65 841.84,398.57 840,397.96 839.36,397.88 836.51,399.19 833,399.43 831.02,397.15 830,396.52 828.84,396.36 826,393.55 825.67,393.44 823.1,394.45 821.13,394.32 818.74,394.56 814.18,396.26 811.77,395.72 806.99,396.12 804.74,397.21 799.62,397.7 796.47,398.47 793,399 790.52,397.23 790,396.73 788.4,396.08 786.28,394.75 784,395.3 783.24,394.81 779,389.75 775.03,389.65 773,390.84 772.32,390.73 770,389.5 754.29,389.7 752.35,390.61 749.4,389.76 730,390 727.1,390.14 725.3,442.72 723.5,390.3 715,390.7 700,392.7 690,393.2 610.4,395.89 608.9,437.92 607.4,395.94 530,397.2 460,399 352,401.3 310,403.1 250,407 222.19,406.87 219.19,407.62 216.03,408.69 211.42,409.75 210,410.45 207.28,410.75 204.77,409.28 200.82,409.62 200,409.07 198.91,408.96 197.05,410.56 194.83,410.36 193,411.66 191.84,411.65 188.78,410.05 186.73,409.43 185,409.1 182.82,410.26 180,410.64 177,408.36 175.21,408.81 172.74,410.29 170.57,410.54 168.21,411.39 165.36,410.91 162,412.12 160.68,412.73 155.76,413.68 153.6,414.79 153,414.91 150.86,414.15 148.31,412.97 146.05,413.44 144.06,412.02 140,411.13 138.94,411.12 136.69,412.19 134.31,411.68 131.78,412.41 127.47,410.33 125,409.96 124.44,409.12 122.06,406.4 100,406.3 91.6,406.45 89.8,427.48 88,406.52 52.5,407.15 52,407.34 50,407.2 21.19,409.39 19.18,409.87 19,410.06 17,409.71 4.03,410.69 1.81,411.24 0,411.17Z"/>
<path fill="#880E4F" d="M0,411.17 1.81,411.24 4.03,409.89 6.1,409.57 8.13,408.3 9,408.27 10.54,408.77 12.58,408.86 14.88,409.58 17,409.66 19,410.06 21.19,408.65 22,407.81 23.26,407.18 25.09,406.75 28.24,406.99 31.08,406.2 44.89,404.96 48,404.84 52,407.34 54.61,406.05 57,404.32 88,403.51 89.8,424.47 91.6,403.42 95.52,403.32 98.4,403.64 100,403.2 100.98,403.21 103.01,404.22 105,403.26 107.33,403.71 109.86,403.33 111.67,403.75 113.73,403.96 116.64,403.41 118,403.55 121,404.38 122.06,406.37 124.44,409.12 125,409.96 127.47,410.33 131.78,412.41 134.31,411.68 136.69,412.19 138.94,411.12 140,411.13 144.06,412.02 146.05,413.44 148.31,412.97 150.86,414.15 153,414.91 153.6,414.79 155.76,413.68 160.68,412.73 162,412.12 165.36,410.91 168.21,411.39 170.57,410.54 172.74,410.29 175.21,408.81 177,408.36 180,410.64 182.82,410.26 185,409.1 186.73,409.43 188.78,410.05 191.84,411.65 193,411.66 194.83,410.36 197.05,410.56 198.91,408.96 200,409.07 200.82,409.62 204.77,409.28 207.28,410.75 210,410.45 211.42,409.75 216.03,408.69 219.19,407.62 222.19,406.43 223,406.41 224.73,406.63 227.45,406.03 229.99,406.22 232,405.59 234.62,405.62 236.65,404.96 240,405 253.64,402.64 255.6,402.55 257.53,401.96 270,399.8 300,397.2 320,396.7 340,396 344.32,394.08 346,395.29 347,394.73 349.36,393.93 351,393.21 352,390.75 353,390.36 380,389.3 430,388.4 455,387.2 466.24,387.11 469.37,387.49 470,387.23 471.61,387.07 480,387 530,385 552.2,385.57 554.26,385.97 555,386.6 559.25,386 562.06,385.82 600,386.8 604.81,386.56 607.4,386.76 608.9,428.36 610.4,386.29 612.54,386.79 613,386.61 614.48,387.13 617.61,390.54 620,392.3 621.99,391.8 623.81,390.98 627.76,390.07 629.7,389.38 633.62,388.53 634,388.51 636.07,390.03 638,390.99 641.76,389.34 643,389.12 646.06,389.21 648.4,387.49 650.68,388.58 652,388.28 655.47,388.9 657.38,388.87 658,389.15 661.57,388.78 662,388.61 665,389.5 666.46,388.62 668.43,388.25 670,387.37 673.86,386.43 676.48,386.67 680.93,386.08 682.99,386.35 686.09,386.36 688.41,384.81 690,385.04 691.28,385.01 693.85,384.64 697,383.57 699.19,383.56 701.05,384.04 703.07,385.64 705.66,383.28 710.87,382.6 715,381.66 715.69,381.71 718.59,382.9 721.41,383.59 722,383.57 723.34,383.97 723.5,384.11 725.3,438.19 727.1,386.93 728,387.48 730.78,386.89 733.33,386.71 735,385.94 735.6,385.84 739,386.79 740,388.72 741.75,388.63 745,387.53 747.11,388.01 749.4,388.88 752,390.56 752.35,390.61 754.29,388.85 756.58,389.4 758.99,389.06 764.88,387.74 767.5,388.64 769.57,387.9 770,388.11 772.32,390.73 773,390.84 775.03,389.65 779,389.75 783.24,394.81 784,395.3 786.28,394.75 788.4,396.08 790,396.73 790.52,397.23 793,399 796.47,398.47 799.62,397.7 804.74,397.21 806.99,396.12 811.77,395.72 814.18,396.26 818.74,394.56 821.13,394.32 823.1,394.45 825.67,393.44 826,393.55 828.84,396.36 830,396.52 831.02,397.15 833,399.43 836.51,399.19 839.36,397.88 840,397.96 841.84,398.57 844.88,398.65 847.8,398.34 849.64,398 852.43,397.99 857.19,399.42 860.01,398.79 862,399.26 864.91,400.7 867.49,401.49 869.74,403.43 872,404.33 872.67,404.44 875,405.45 875.63,405.42 878.21,404.37 880.98,403.78 883.37,404.49 888.46,403.64 890.91,402.16 893.97,402.88 897.13,401.52 899.25,402.05 900,401.94 905,400.22 907.69,401.52 909,402.03 910.78,401.14 913.87,400.16 917.01,399.37 918,398.77 919.71,398.48 921.98,399.17 923.8,399.47 925,399.45 925.96,399.58 928.12,401.31 930,401.63 933,405.2 933.41,404.93 937,404.05 938.26,404.54 941.35,406.2 942,406.32 943.28,405.96 945.2,404.9 948,404.97 948.4,405.16 950.35,405.13 952,405.61 956,401.43 959,397.7 960.87,396.13 962.95,396.36 965.72,396.23 968.55,395.14 970,394.73 973.55,395.1 975,395.39 977,394.09 979.33,393.08 981.23,391.92 985,390.68 992,387.92 994.21,387.4 997.07,386.13 999.03,385.53 1001.62,385.1 1005.92,384.67 1008.33,385.25 1010,385.46 1010.61,384.86 1012.87,384.35 1014.68,383.64 1020.6,382.93 1022.1,409.95 1023.6,383.97 1025,384.2 1028.13,383.21 1030,382.81 1033.2,381.86 1035.85,381.76 1037.77,382.16 1039.69,381.71 1042,382.96 1044.22,381.78 1046.72,381.49 1049.7,380.62 1050,380.35 1051.89,379.72 1062.29,377.66 1064.99,377.64 1067.71,376.88 1069.54,376.74 1077.72,376.64 1079.7,377.72 1081,377.44 1082.09,376.85 1084.33,376.1 1087.33,376.11 1090,375.26 1092.58,374.99 1095.75,375.06 1098.72,376.24 1100,376.32 1100.87,375.9 1103.06,376.22 1105.99,376.93 1108,377.94 1108.89,378.11 1111.06,377.76 1113.22,379.26 1114,379.27 1115.05,378.82 1117.3,378.23 1121.6,378.1 1124.59,378.91 1125,378.85 1126.9,377.71 1129.52,378.03 1132.42,376.56 1137.9,375.38 1139.74,375.26 1142.76,374.5 1145,374.25 1146.85,374.51 1150,373.94 1151.91,373.9 1154.32,374.71 1159.09,374.64 1162.16,374.41 1164.14,374.44 1167.31,374.17 1169.83,373.63 1172.86,373.8 1175.12,373.45 1176.94,373.81 1179.15,373.3 1184.37,373.39 1185,373.42 1186.35,373.83 1189.09,373.95 1193,374.49 1194.49,374.88 1195,375.39 1197.27,375.65 1200.39,374.7 1202.77,374.5 1205,374.41 1210.79,374.79 1213,376.75 1213.18,376.77 1215.27,375.9 1220.01,375.25 1221.94,374.64 1224.67,373.54 1227.82,373.28 1230.73,372.39 1233.23,371.9 1238.42,369.9 1241.13,370.18 1243.13,368.96 1248.28,368.16 1250,369.13 1251.19,368.98 1253.9,367.29 1258,366.67 1259.44,366.66 1262.61,365.94 1269.26,364.98 1271.13,365.63 1272.96,364.96 1275,364.56 1276,364.55 1279,365.99 1279.53,365.82 1282.03,365.89 1284.12,363.99 1285.98,364.88 1288,364.53 1288.88,364.17 1290.89,362.83 1293.63,361.94 1296.45,360.37 1299.52,359.82 1302.17,358.9 1313,356.54 1315,358.09 1315.14,357.99 1317.87,358.15 1319.96,356.27 1322,356.33 1322.98,356.23 1327,354.55 1328.24,354.34 1331.17,353.24 1334.28,352.61 1335,352.06 1336.88,351.32 1339.5,352.15 1340,352.12 1341.33,351.21 1345,349.73 1347.38,349.03 1365.6,345.01 1369.2,446.14 1372.1,409.44 1374.6,422.83 1377.2,342.2 1380,341.53 1381.3,419.71 1382.9,340.82 1389.1,339.88 1392,434.45 1395,339 1410,336.8 1412.2,418.01 1415,335 1445,332.7 1448.2,454.28 1452,336.03 1454.69,339.08 1455,339.28 1456.58,339.21 1459.75,338.67 1462.05,338.44 1464.15,339.2 1466.57,338.39 1468,338.87 1468.88,339.32 1472.08,338.85 1474.25,339.06 1475,339.4 1477.15,339.51 1479.22,337.73 1480,337.88 1481.49,338.89 1484.47,339.67 1486.86,338.79 1488.72,339.85 1491.05,338.75 1493.24,338.51 1495,338.68 1496.33,338.55 1498.83,337.55 1500,337.29 1501.36,337.16 1504.48,337.67 1507.29,336.79 1510.11,336.46 1515,336.5 1518,336.02 1518.9,390.88 1521.2,435.11 1526.3,334.69 1535,333.3 1561,330.14 1563.7,419.57 1567,329.76 1600.9,327.64 1602.6,423.53 1605.3,327.35 1615,326.7 1622.8,326.42 1624.7,406.35 1626.2,371.29 1628.3,449.21 1634.5,325.99 1639.1,325.82 1641.8,430.32 1646.3,325.56 1657,325.17 1660.3,448.45 1666.4,324.83 1676.9,324.44 1678.8,439.37 1683.9,324.19 1686.1,324.11 1687.6,453.45 1693.3,323.84 1700,323.6 1711,323.6 1711,329.7 1693.3,330.18 1687.6,459.74 1686.1,330.38 1683.9,330.44 1678.8,445.57 1676.9,330.63 1666.4,330.91 1660.3,454.47 1657,331.16 1646.3,331.45 1641.8,436.17 1639.1,331.65 1634.5,331.77 1628.3,454.94 1626.2,377 1624.7,412.04 1622.8,332.09 1615,332.3 1605.3,332.95 1602.6,429.13 1600.9,333.24 1567,334.54 1563.7,424.26 1561,334.76 1535,336.4 1526.3,336.79 1521.2,436.79 1518.9,392.38 1518,337.45 1515,337.7 1498.83,338 1496.33,338.55 1495,338.68 1493.24,338.51 1491.05,338.75 1488.72,339.85 1486.86,338.79 1484.47,339.67 1481.49,338.89 1480,338.35 1479.22,338.36 1477.15,339.51 1475,339.4 1474.25,339.06 1472.08,338.85 1468.88,339.32 1468,338.87 1466.57,338.6 1464.15,339.2 1462.05,338.68 1459.75,338.73 1456.58,339.21 1455,339.28 1454.69,339.08 1452,338.87 1448.2,458.94 1445,339 1415,343.6 1412.2,426.1 1410,344.5 1395,347.2 1392,442.3 1389.1,347.4 1382.9,347.62 1381.3,426.4 1380,348.12 1377.2,348.61 1374.6,429.06 1372.1,415.49 1369.2,452 1365.6,350.62 1288,364.9 1284,365.4 1282.03,365.89 1279.53,365.97 1241.13,370.8 1240,370.43 1220,375.71 1217.44,376 1215.27,376.01 1213.18,376.77 1210.79,375.79 1205,375.41 1200.39,375.7 1195,375.66 1192.15,375.39 1186.35,374.53 1181.38,374.29 1164.14,374.78 1150,374.94 1145,375.25 1139.74,375.95 1129.52,378.16 1124.59,378.91 1120,379.22 1115.05,379.16 1114,379.27 1113.22,379.26 1111.06,378.76 1105.99,377.93 1100.87,376.65 1098.72,376.26 1092.58,375.99 1090,376.11 1084.33,377.1 1079.7,377.72 1072.61,377.63 1070,377.71 1064.99,378.2 1053.83,380.28 1046.72,381.95 1044.22,382.32 1042,382.96 1039.69,382.61 1033.2,382.86 1028.13,383.37 1025,384.2 1023.6,383.97 1022.1,410.34 1020.6,383.93 1015,384.61 1010.61,384.97 1010,385.46 1008.33,385.28 1005,385.8 1001.62,386.1 999.03,386.53 994.21,388.12 985,391.58 979.33,393.08 977,394.09 975,395.39 973.55,395.1 970,394.73 968.55,395.14 965.72,396.23 962.95,396.36 960.87,396.13 959,397.7 956,401.43 952,405.61 950.35,405.13 948.4,405.16 948,404.97 945.2,404.9 943.28,405.96 942,406.32 941.35,406.2 938.26,404.54 937,404.05 933.41,404.93 933,405.2 930,401.63 928.12,401.31 925.96,399.58 925,399.45 923.8,399.47 921.98,399.17 919.71,398.48 918,398.77 917.01,399.37 913.87,400.16 910.78,401.14 909,402.03 907.69,401.52 905,400.22 900,401.94 899.25,402.05 897.13,401.52 893.97,402.88 890.91,402.16 888.46,403.64 883.37,404.49 880.98,403.78 878.21,404.37 875.63,405.42 875,405.45 872.67,404.44 872,404.33 869.74,403.43 867.49,401.49 864.91,400.7 862,399.26 860.01,398.79 857.19,399.42 852.43,397.99 849.64,398 847.8,398.34 844.88,398.65 841.84,398.57 840,397.96 839.36,397.88 836.51,399.19 833,399.43 831.02,397.15 830,396.52 828.84,396.36 826,393.55 825.67,393.44 823.1,394.45 821.13,394.32 818.74,394.56 814.18,396.26 811.77,395.72 806.99,396.12 804.74,397.21 799.62,397.7 796.47,398.47 793,399 790.52,397.23 790,396.73 788.4,396.08 786.28,394.75 784,395.3 783.24,394.81 779,389.75 775.03,389.65 773,390.84 772.32,390.73 770,388.2 769.57,388.15 767.5,388.64 764.88,387.74 758.99,389.06 756.58,389.4 754.29,388.85 752.35,390.61 752,390.56 749.4,388.88 747.11,388.01 745,387.53 741.75,388.63 740,388.72 739,386.79 735.6,386.09 735,386.04 733.33,386.71 730.78,386.89 728,387.48 727.1,386.93 725.3,438.19 723.5,384.11 723.34,383.97 722,383.57 721.41,383.59 718.59,382.9 715.69,381.96 715,381.91 713.44,382.05 710.87,382.6 705.66,383.28 703.07,385.64 701.05,384.04 699.19,383.56 697,383.57 693.85,384.64 691.28,385.01 690,385.04 688.41,384.81 686.09,386.36 682.99,386.35 680.93,386.08 676.48,386.67 673.86,386.43 670,387.37 668.43,388.25 666.46,388.62 665,389.5 662,388.61 661.57,388.78 658,389.15 657.38,388.87 655.47,388.9 652,388.28 650.68,388.58 648.4,387.58 646.06,389.21 643,389.12 641.76,389.34 638,390.99 636.07,390.03 634,388.76 631.6,388.91 629.7,389.38 627.76,390.07 623.81,390.98 621.99,391.8 620,392.3 617.61,390.54 614.48,387.38 613,386.86 610.4,386.29 608.9,428.65 607.4,387.13 600,389.5 530,391.3 460,393.6 430,394.1 380,395.8 352,396.3 320,397.8 300,398.6 270,400.8 240,405.5 236.65,405.45 234.62,405.62 232,405.59 229.99,406.22 227.45,406.03 224.73,406.63 223,406.41 222.19,406.43 219.19,407.62 216.03,408.69 211.42,409.75 210,410.45 207.28,410.75 204.77,409.28 200.82,409.62 200,409.07 198.91,408.96 197.05,410.56 194.83,410.36 193,411.66 191.84,411.65 188.78,410.05 186.73,409.43 185,409.1 182.82,410.26 180,410.64 177,408.36 175.21,408.81 172.74,410.29 170.57,410.54 168.21,411.39 165.36,410.91 162,412.12 160.68,412.73 155.76,413.68 153.6,414.79 153,414.91 150.86,414.15 148.31,412.97 146.05,413.44 144.06,412.02 140,411.13 138.94,411.12 136.69,412.19 134.31,411.68 131.78,412.41 127.47,410.33 125,409.96 124.44,409.12 122.06,406.37 121,404.38 119.15,403.86 116.64,403.83 113.73,403.96 111.67,403.76 105,403.67 103.01,404.22 100.98,403.61 91.6,403.84 89.8,424.89 88,403.94 57,404.8 52,407.34 50,406.09 48,405.18 23.26,407.41 22,407.81 21.19,408.65 19,410.06 17,409.66 14.88,409.58 12.58,408.86 9,408.69 8.13,408.77 6.1,409.57 4.03,409.89 1.81,411.24 0,411.17Z"/>
<path fill="#4A148C" d="M0,411.17 1.81,411.24 4.03,409.89 6.1,409.57 8.13,408.3 9,408.27 10.54,408.77 12.58,408.86 14.88,409.58 17,409.66 19,410.06 21.19,408.65 22,407.81 23.26,407.18 25.09,406.75 28.24,406.99 31.08,405.58 34.2,405.47 36,405.12 44.89,404.28 48,404.84 52,407.34 54.61,406.05 57.18,403.99 59.81,403.94 62.95,403.54 88,403.04 89.8,424 91.6,402.97 95.52,402.89 98.4,403.64 100.98,402.82 103.01,404.22 105.13,403.1 107.33,403.71 109.86,402.97 111.67,403.75 113.73,403.96 116.64,403.26 119.15,403.8 121,404.38 122.06,406.37 124.44,409.12 125,409.96 127.47,410.33 131.78,412.41 134.31,411.68 136.69,412.19 138.94,411.12 140,411.13 144.06,412.02 146.05,413.44 148.31,412.97 150.86,414.15 153,414.91 153.6,414.79 155.76,413.68 160.68,412.73 162,412.12 165.36,410.91 168.21,411.39 170.57,410.54 172.74,410.29 175.21,408.81 177,408.36 180,410.64 182.82,410.26 185,409.1 186.73,409.43 188.78,410.05 191.84,411.65 193,411.66 194.83,410.36 197.05,410.56 198.91,408.96 200,409.07 200.82,409.62 204.77,409.28 207.28,410.75 210,410.45 211.42,409.75 216.03,408.69 219.19,407.62 222.19,406.43 223,406.41 224.73,406.63 227.45,406.03 229.99,406.22 232,405.59 234.62,405.62 236.65,404.81 238.48,404.94 241.5,404.19 244.44,404.12 253.64,401.68 255.6,402.55 257.53,400.95 260,400.57 262.75,399.8 270,398.3 284.38,396.72 287.21,396.68 289.03,396.21 290,396.13 291.92,396.49 294.51,395.6 300,395 302.17,394.96 304.9,394.51 320,393 340,393 341,392.67 344.32,394.08 346,395.29 347,394.73 349.36,393.93 351,393.21 351.94,390.87 353,388.98 430,387.5 463.53,386.49 465,386.75 466.24,386.82 469.37,387.49 470,387.23 471.61,386.25 530,384 552.2,384.63 554.26,385.97 555,386.6 559.25,386 562.06,384.92 598,385.94 598.61,386.21 600,386 601.69,386 604.81,386.52 607.4,386.76 608.9,428.2 610.4,385.99 612.54,386.79 613,386.5 614.48,386.88 617.61,390.54 620,392.3 621.99,391.8 623.81,390.98 627.76,390.07 629.7,389.38 633.62,388.42 634,388.42 636.07,390.03 638,390.99 641.76,389.34 643,389.12 646.06,389.21 648.4,387.49 650.68,388.58 652,388.28 655.47,388.9 657.38,388.87 658,389.15 661.57,388.78 662,388.61 665,389.5 666.46,388.62 668.43,388.25 670,387.37 673.86,386.43 676.48,386.67 680.93,386.08 682.99,386.35 686.09,386.36 688.41,384.81 690,385.04 691.28,385.01 693.85,384.64 697,383.57 699.19,383.56 701.05,384.04 703.07,385.64 705.66,383.28 710.87,382.6 715,381.65 715.69,381.71 718.59,382.9 721.41,383.59 722,383.57 723.34,383.97 723.5,384.11 725.3,438.19 727.1,386.93 728,387.48 730.78,386.89 733.33,386.71 735,385.94 735.6,385.78 739,386.79 740,388.72 741.75,388.63 745,387.53 747.11,388.01 749.4,388.88 752,390.56 752.35,390.61 754.29,388.85 756.58,389.4 758.99,389.06 764.88,387.74 767.5,388.64 769.57,387.86 770,388.11 772.32,390.73 773,390.84 775.03,389.65 779,389.75 783.24,394.81 784,395.3 786.28,394.75 788.4,396.08 790,396.73 790.52,397.23 793,399 796.47,398.47 799.62,397.7 804.74,397.21 806.99,396.12 811.77,395.72 814.18,396.26 818.74,394.56 821.13,394.32 823.1,394.45 825.67,393.44 826,393.55 828.84,396.36 830,396.52 831.02,397.15 833,399.43 836.51,399.19 839.36,397.88 840,397.96 841.84,398.57 844.88,398.65 847.8,398.34 849.64,398 852.43,397.99 857.19,399.42 860.01,398.79 862,399.26 864.91,400.7 867.49,401.49 869.74,403.43 872,404.33 872.67,404.44 875,405.45 875.63,405.42 878.21,404.37 880.98,403.78 883.37,404.49 888.46,403.64 890.91,402.16 893.97,402.88 897.13,401.52 899.25,402.05 900,401.94 905,400.22 907.69,401.52 909,402.03 910.78,401.14 913.87,400.16 917.01,399.37 918,398.77 919.71,398.48 921.98,399.17 923.8,399.47 925,399.45 925.96,399.58 928.12,401.31 930,401.63 933,405.2 933.41,404.93 937,404.05 938.26,404.54 941.35,406.2 942,406.32 943.28,405.96 945.2,404.9 948,404.97 948.4,405.16 950.35,405.13 952,405.61 956,401.43 959,397.7 960.87,396.13 962.95,396.36 965.72,396.23 968.55,395.14 970,394.73 973.55,395.1 975,395.39 977,394.09 979.33,393.08 981.23,391.92 985.74,390.37 990,388.16 992,387.42 994.21,387.4 997.07,385.63 999.03,385.04 1001.62,384.6 1005.92,384.17 1008.33,385.25 1010,385.46 1010.61,384.86 1012.87,384.35 1014.68,383.14 1016.5,383.25 1018.58,382.75 1020,382.77 1020.6,382.9 1022.1,409.95 1023.6,383.97 1025,384.2 1028.13,383.21 1030,382.81 1033.2,381.71 1035,381.28 1037.77,382.16 1039.69,381.71 1042,382.96 1044.22,381.78 1046.72,381.49 1049.7,380.62 1051.89,379.22 1060,377.58 1062.29,377.39 1064.99,377.64 1067.71,376.38 1070,376.21 1074.78,376.65 1077.72,376.49 1079.7,377.72 1081,377.44 1082.09,376.85 1084.33,376 1087.33,376.11 1092.58,374.49 1095.75,374.56 1098.72,376.24 1100,376.32 1100.87,375.9 1103.06,375.72 1105,376.21 1108,377.94 1108.89,378.11 1111.06,377.74 1113.22,379.26 1114,379.27 1117.3,377.97 1119.57,377.93 1120,377.72 1121.6,377.6 1124.59,378.91 1125,378.85 1126.9,377.71 1129.52,378.03 1132.42,376.51 1135.11,375.67 1139.74,375.26 1144.78,373.78 1146.85,374.51 1149.68,373.7 1151.91,373.44 1154.32,374.71 1159.09,374.64 1162.16,374.41 1164.14,374.44 1167.31,374.17 1169.83,373.5 1172.86,373.8 1175.12,372.97 1176.94,373.81 1179.15,372.84 1181.38,373.22 1184.37,373.09 1185,373.23 1186.35,373.83 1189.09,373.89 1192.15,374.21 1193,374.17 1194.49,374.88 1195,375.39 1197.27,375.65 1200.39,374.2 1202.77,374.33 1205,373.91 1210.79,374.32 1213,376.75 1213.18,376.77 1215.27,375.9 1220,375.25 1221.94,374.64 1224.67,373.04 1227.82,373.28 1230.73,372.39 1233.23,371.9 1235.25,371.12 1238.42,369.53 1240,370.04 1241.13,370.18 1243.13,368.78 1246.18,367.71 1247,367.57 1248.28,368.12 1250,369.13 1251.19,368.98 1253.9,367 1256.85,366.65 1259.44,366.66 1262.61,365.59 1265,364.97 1267.19,365.28 1269.26,364.98 1271.13,365.63 1272.96,364.96 1275,364.56 1276,364.55 1279,365.99 1279.53,365.82 1282.03,365.89 1284.12,363.99 1285.98,364.88 1288,364.53 1288.88,364.17 1290.89,362.83 1293.63,361.94 1296.45,360.37 1299.52,359.82 1300,359.64 1302.17,358.47 1304.59,356.52 1306,356.14 1310.6,356.58 1313,356.53 1315,358.09 1315.14,357.99 1317.87,358.15 1319.96,356.27 1322,356.33 1322.98,356.23 1327,354.55 1328.24,354.34 1331.17,353.24 1334.28,352.61 1335,352.06 1336.88,351.28 1339.5,352.15 1340,352.12 1341.33,351.21 1345,349.73 1347.38,348.19 1349.44,346.65 1352,345.1 1353.51,344.93 1355.38,344.26 1357.32,344 1360.27,342.13 1362.86,340.81 1365.6,339.99 1369.2,440.86 1372.1,403.94 1374.6,417.15 1377.2,336.33 1380,335.45 1381.3,413.54 1382.9,334.53 1389.1,333.82 1392,428.5 1395,333.17 1407.36,331.79 1410,331.91 1412.2,413.7 1415,331.43 1418.58,331.38 1421.71,331.71 1422,331.88 1423.81,332.25 1426.56,334.17 1427,334.14 1428.7,333.27 1433,332.53 1433.83,331.84 1436.45,331.12 1437,331.11 1439.32,331.45 1441.71,331.52 1442,331.69 1445,331.79 1448.2,454.28 1452,336.03 1454.69,339.08 1455,339.28 1456.58,339.21 1459.75,338.67 1462.05,338.44 1464.15,339.2 1466.57,338.39 1468,338.87 1468.88,339.32 1472.08,338.85 1474.25,339.06 1475,339.4 1477.15,339.51 1479.22,337.73 1480,337.88 1481.49,338.89 1484.47,339.67 1486.86,338.79 1488.72,339.85 1491.05,338.75 1493.24,338.51 1495,338.68 1496.33,338.55 1498.83,337.55 1500,337.29 1501.36,337.16 1504.48,337.67 1510.11,336 1515,336 1518,335.32 1518.9,390.13 1521.2,434.23 1526.3,333.46 1535,331.5 1561,327.11 1563.7,416.46 1567,326.55 1600,323.5 1600.9,323.2 1602.6,418.63 1605.3,321.73 1615,318.5 1622.8,318.5 1624.7,398.5 1626.2,363.5 1628.3,441.5 1634.5,318.5 1639.1,318.5 1641.8,423.1 1646.3,318.5 1657,318.5 1660.3,441.9 1666.4,318.5 1669.95,318.62 1672.79,319.4 1675.19,319.17 1676.9,320.77 1678.8,435.43 1683.9,318.69 1686.1,318.5 1687.6,447.9 1693.3,318.5 1711,318.5 1711,323.6 1700,323.6 1693.3,323.84 1687.6,453.45 1686.1,324.11 1683.9,324.19 1678.8,439.37 1676.9,324.44 1666.4,324.83 1660.3,448.45 1657,325.17 1646.3,325.56 1641.8,430.32 1639.1,325.82 1634.5,325.99 1628.3,449.21 1626.2,371.29 1624.7,406.35 1622.8,326.42 1615,326.7 1605.3,327.35 1602.6,423.53 1600.9,327.64 1567,329.76 1563.7,419.57 1561,330.14 1535,333.3 1526.3,334.69 1521.2,435.11 1518.9,390.88 1518,336.02 1515,336.5 1510.11,336.46 1507.29,336.79 1504.48,337.67 1501.36,337.16 1500,337.29 1498.83,337.55 1496.33,338.55 1495,338.68 1493.24,338.51 1491.05,338.75 1488.72,339.85 1486.86,338.79 1484.47,339.67 1481.49,338.89 1480,337.88 1479.22,337.73 1477.15,339.51 1475,339.4 1474.25,339.06 1472.08,338.85 1468.88,339.32 1468,338.87 1466.57,338.39 1464.15,339.2 1462.05,338.44 1459.75,338.67 1456.58,339.21 1455,339.28 1454.69,339.08 1452,336.03 1448.2,454.28 1445,332.7 1415,335 1412.2,418.01 1410,336.8 1395,339 1392,434.45 1389.1,339.88 1382.9,340.82 1381.3,419.71 1380,341.53 1377.2,342.2 1374.6,422.83 1372.1,409.44 1369.2,446.14 1365.6,345.01 1347.38,349.03 1345,349.73 1341.33,351.21 1340,352.12 1339.5,352.15 1336.88,351.32 1335,352.06 1334.28,352.61 1331.17,353.24 1328.24,354.34 1327,354.55 1322.98,356.23 1322,356.33 1319.96,356.27 1317.87,358.15 1315.14,357.99 1315,358.09 1313,356.54 1302.17,358.9 1299.52,359.82 1296.45,360.37 1293.63,361.94 1290.89,362.83 1288.88,364.17 1288,364.53 1285.98,364.88 1284.12,363.99 1282.03,365.89 1279.53,365.82 1279,365.99 1276,364.55 1275,364.56 1272.96,364.96 1271.13,365.63 1269.26,364.98 1262.61,365.94 1259.44,366.66 1258,366.67 1253.9,367.29 1251.19,368.98 1250,369.13 1248.28,368.16 1243.13,368.96 1241.13,370.18 1238.42,369.9 1233.23,371.9 1230.73,372.39 1227.82,373.28 1224.67,373.54 1221.94,374.64 1220.01,375.25 1215.27,375.9 1213.18,376.77 1213,376.75 1210.79,374.79 1205,374.41 1202.77,374.5 1200.39,374.7 1197.27,375.65 1195,375.39 1194.49,374.88 1193,374.49 1189.09,373.95 1186.35,373.83 1185,373.42 1184.37,373.39 1179.15,373.3 1176.94,373.81 1175.12,373.45 1172.86,373.8 1169.83,373.63 1167.31,374.17 1164.14,374.44 1162.16,374.41 1159.09,374.64 1154.32,374.71 1151.91,373.9 1150,373.94 1146.85,374.51 1145,374.25 1142.76,374.5 1139.74,375.26 1137.9,375.38 1132.42,376.56 1129.52,378.03 1126.9,377.71 1125,378.85 1124.59,378.91 1121.6,378.1 1117.3,378.23 1115.05,378.82 1114,379.27 1113.22,379.26 1111.06,377.76 1108.89,378.11 1108,377.94 1105.99,376.93 1103.06,376.22 1100.87,375.9 1100,376.32 1098.72,376.24 1095.75,375.06 1092.58,374.99 1090,375.26 1087.33,376.11 1084.33,376.1 1082.09,376.85 1081,377.44 1079.7,377.72 1077.72,376.64 1069.54,376.74 1067.71,376.88 1064.99,377.64 1062.29,377.66 1051.89,379.72 1050,380.35 1049.7,380.62 1046.72,381.49 1044.22,381.78 1042,382.96 1039.69,381.71 1037.77,382.16 1035.85,381.76 1033.2,381.86 1030,382.81 1028.13,383.21 1025,384.2 1023.6,383.97 1022.1,409.95 1020.6,382.93 1014.68,383.64 1012.87,384.35 1010.61,384.86 1010,385.46 1008.33,385.25 1005.92,384.67 1001.62,385.1 999.03,385.53 997.07,386.13 994.21,387.4 992,387.92 985,390.68 981.23,391.92 979.33,393.08 977,394.09 975,395.39 973.55,395.1 970,394.73 968.55,395.14 965.72,396.23 962.95,396.36 960.87,396.13 959,397.7 956,401.43 952,405.61 950.35,405.13 948.4,405.16 948,404.97 945.2,404.9 943.28,405.96 942,406.32 941.35,406.2 938.26,404.54 937,404.05 933.41,404.93 933,405.2 930,401.63 928.12,401.31 925.96,399.58 925,399.45 923.8,399.47 921.98,399.17 919.71,398.48 918,398.77 917.01,399.37 913.87,400.16 910.78,401.14 909,402.03 907.69,401.52 905,400.22 900,401.94 899.25,402.05 897.13,401.52 893.97,402.88 890.91,402.16 888.46,403.64 883.37,404.49 880.98,403.78 878.21,404.37 875.63,405.42 875,405.45 872.67,404.44 872,404.33 869.74,403.43 867.49,401.49 864.91,400.7 862,399.26 860.01,398.79 857.19,399.42 852.43,397.99 849.64,398 847.8,398.34 844.88,398.65 841.84,398.57 840,397.96 839.36,397.88 836.51,399.19 833,399.43 831.02,397.15 830,396.52 828.84,396.36 826,393.55 825.67,393.44 823.1,394.45 821.13,394.32 818.74,394.56 814.18,396.26 811.77,395.72 806.99,396.12 804.74,397.21 799.62,397.7 796.47,398.47 793,399 790.52,397.23 790,396.73 788.4,396.08 786.28,394.75 784,395.3 783.24,394.81 779,389.75 775.03,389.65 773,390.84 772.32,390.73 770,388.11 769.57,387.9 767.5,388.64 764.88,387.74 758.99,389.06 756.58,389.4 754.29,388.85 752.35,390.61 752,390.56 749.4,388.88 747.11,388.01 745,387.53 741.75,388.63 740,388.72 739,386.79 735.6,385.84 735,385.94 733.33,386.71 730.78,386.89 728,387.48 727.1,386.93 725.3,438.19 723.5,384.11 723.34,383.97 722,383.57 721.41,383.59 718.59,382.9 715.69,381.71 715,381.66 710.87,382.6 705.66,383.28 703.07,385.64 701.05,384.04 699.19,383.56 697,383.57 693.85,384.64 691.28,385.01 690,385.04 688.41,384.81 686.09,386.36 682.99,386.35 680.93,386.08 676.48,386.67 673.86,386.43 670,387.37 668.43,388.25 666.46,388.62 665,389.5 662,388.61 661.57,388.78 658,389.15 657.38,388.87 655.47,388.9 652,388.28 650.68,388.58 648.4,387.49 646.06,389.21 643,389.12 641.76,389.34 638,390.99 636.07,390.03 634,388.51 633.62,388.53 629.7,389.38 627.76,390.07 623.81,390.98 621.99,391.8 620,392.3 617.61,390.54 614.48,387.13 613,386.61 612.54,386.79 610.4,386.29 608.9,428.36 607.4,386.76 604.81,386.56 600,386.8 562.06,385.82 559.25,386 555,386.6 554.26,385.97 552.2,385.57 530,385 480,387 471.61,387.07 470,387.23 469.37,387.49 466.24,387.11 455,387.2 430,388.4 380,389.3 353,390.36 352,390.75 351,393.21 349.36,393.93 347,394.73 346,395.29 344.32,394.08 340,396 320,396.7 300,397.2 270,399.8 257.53,401.96 255.6,402.55 253.64,402.64 240,405 236.65,404.96 234.62,405.62 232,405.59 229.99,406.22 227.45,406.03 224.73,406.63 223,406.41 222.19,406.43 219.19,407.62 216.03,408.69 211.42,409.75 210,410.45 207.28,410.75 204.77,409.28 200.82,409.62 200,409.07 198.91,408.96 197.05,410.56 194.83,410.36 193,411.66 191.84,411.65 188.78,410.05 186.73,409.43 185,409.1 182.82,410.26 180,410.64 177,408.36 175.21,408.81 172.74,410.29 170.57,410.54 168.21,411.39 165.36,410.91 162,412.12 160.68,412.73 155.76,413.68 153.6,414.79 153,414.91 150.86,414.15 148.31,412.97 146.05,413.44 144.06,412.02 140,411.13 138.94,411.12 136.69,412.19 134.31,411.68 131.78,412.41 127.47,410.33 125,409.96 124.44,409.12 122.06,406.37 121,404.38 118,403.55 116.64,403.41 113.73,403.96 111.67,403.75 109.86,403.33 107.33,403.71 105,403.26 103.01,404.22 100.98,403.21 100,403.2 98.4,403.64 95.52,403.32 91.6,403.42 89.8,424.47 88,403.51 57,404.32 54.61,406.05 52,407.34 48,404.84 44.89,404.96 31.08,406.2 28.24,406.99 25.09,406.75 23.26,407.18 22,407.81 21.19,408.65 19,410.06 17,409.66 14.88,409.58 12.58,408.86 10.54,408.77 9,408.27 8.13,408.3 6.1,409.57 4.03,409.89 1.81,411.24 0,411.17Z"/>
<path fill="#311B92" d="M0,411.17 1.81,411.24 4.03,409.89 6.1,409.57 8.13,408.3 9,408.27 10.54,408.77 12.58,408.86 14.88,409.58 17,409.66 19,410.06 21.19,408.65 22,407.81 23.26,407.18 25.09,406.75 28.24,406.99 31.08,405.37 34.2,405.47 36,404.9 37.08,404.72 42.06,404.62 44.89,404.23 47.42,404.81 48,404.84 52,407.34 54.61,406.05 57.18,403.99 59.81,403.94 62.95,403.25 64.98,403.56 67.94,402.91 70.07,402.96 72.09,402.73 75.86,402.8 81.83,402.61 84.58,402.84 87.06,402.57 88,402.63 89.8,423.81 91.6,402.93 95.52,402.86 98.4,403.64 100.98,402.82 103.01,404.22 105.13,403.1 107.33,403.71 109.86,402.97 111.67,403.75 113.73,403.96 116.64,403.26 119.15,403.8 121,404.38 122.06,406.37 124.44,409.12 125,409.96 127.47,410.33 131.78,412.41 134.31,411.68 136.69,412.19 138.94,411.12 140,411.13 144.06,412.02 146.05,413.44 148.31,412.97 150.86,414.15 153,414.91 153.6,414.79 155.76,413.68 160.68,412.73 162,412.12 165.36,410.91 168.21,411.39 170.57,410.54 172.74,410.29 175.21,408.81 177,408.36 180,410.64 182.82,410.26 185,409.1 186.73,409.43 188.78,410.05 191.84,411.65 193,411.66 194.83,410.36 197.05,410.56 198.91,408.96 200,409.07 200.82,409.62 204.77,409.28 207.28,410.75 210,410.45 211.42,409.75 216.03,408.69 219.19,407.62 222.19,406.43 223,406.41 224.73,406.63 227.45,406.03 229.99,406.22 232,405.59 234.62,405.62 236.65,404.81 238.48,404.94 241.5,404.15 244.44,404.12 253.64,401.67 255.6,402.55 257.53,400.95 260,400.57 262.75,399.64 270,397.82 272.82,397.54 276.02,397.53 281.68,396.88 284.38,396.36 287.21,396.68 289.03,396.08 290,396.13 291.92,396.49 294.51,395.49 299.85,394.95 302.17,394.96 304.9,394.39 307.61,394.19 310.69,393.47 312.53,393.6 317.97,392.51 320.36,391.75 325.1,391.5 327.92,391.79 330.26,391.73 332.95,391.98 338.44,392.13 340,392.51 341,392.52 344.32,394.08 346,395.29 347,394.73 349.36,393.93 351,393.21 351.94,390.87 353,388.89 353.87,388.89 356.02,388.51 360.75,388.01 363.01,387.45 367.86,386.92 370.21,386.91 375,386.53 377.99,386.75 380.5,386.65 388,387.31 390,386.8 393.77,386.29 398.36,385.96 400.71,386.11 403.54,385.81 406.21,385.94 408.23,385.54 410.25,385.77 413.33,385.53 415.57,385.56 417.81,385.22 419.95,385.29 422,385.01 424.74,385.06 430,385.54 433.44,385.62 435.43,385.45 439.37,385.65 441.48,385.44 446,385.62 448.85,385.8 452,386.47 453.7,386.5 456.56,386.32 459,385.79 461.26,385.96 465,386.75 466.24,386.82 469.37,387.49 470,387.23 471.61,386.22 473.44,385.97 475.85,385.99 477.98,385.55 480.74,385.57 483.24,385.12 485.32,385.01 488.31,385.06 493.25,384.72 495.38,384.71 498.31,384.21 500.16,384.24 502.77,383.98 505.91,384.14 508.43,383.96 510.38,384 513.22,383.59 516.15,383.66 523.62,383.26 525.64,383.34 530.2,383.11 532.21,383.67 536.77,383.9 539.89,383.82 542.67,383.99 547.07,383.89 548,383.98 552.2,384.63 554.26,385.97 555,386.6 559.25,386 562.06,384.82 564.03,384.64 568.94,384.84 571.64,384.72 575,384.89 579.15,384.74 581.77,384.4 584,384.33 586.3,384.84 596.1,385.54 598,385.93 598.61,386.21 601.69,385.74 604.81,386.52 607.4,386.76 608.9,428.2 610.4,385.98 612.54,386.79 613,386.5 614.48,386.83 617.61,390.54 620,392.3 621.99,391.8 623.81,390.98 627.76,390.07 629.7,389.38 633.62,388.42 634,388.42 636.07,390.03 638,390.99 641.76,389.34 643,389.12 646.06,389.21 648.4,387.49 650.68,388.58 652,388.28 655.47,388.9 657.38,388.87 658,389.15 661.57,388.78 662,388.61 665,389.5 666.46,388.62 668.43,388.25 670,387.37 673.86,386.43 676.48,386.67 680.93,386.08 682.99,386.35 686.09,386.36 688.41,384.81 690,385.04 691.28,385.01 693.85,384.64 697,383.57 699.19,383.56 701.05,384.04 703.07,385.64 705.66,383.28 710.87,382.6 715,381.65 715.69,381.71 718.59,382.9 721.41,383.59 722,383.57 723.34,383.97 723.5,384.11 725.3,438.19 727.1,386.93 728,387.48 730.78,386.89 733.33,386.71 735,385.94 735.6,385.78 739,386.79 740,388.72 741.75,388.63 745,387.53 747.11,388.01 749.4,388.88 752,390.56 752.35,390.61 754.29,388.85 756.58,389.4 758.99,389.06 764.88,387.74 767.5,388.64 769.57,387.86 770,388.11 772.32,390.73 773,390.84 775.03,389.65 779,389.69 780.32,391.43 783.24,394.81 784,395.3 786.28,394.75 788.4,396.08 790,396.73 790.52,397.23 793,399 796.47,398.47 799.62,397.7 804.74,397.21 806.99,396.12 811.77,395.72 814.18,396.26 818.74,394.56 821.13,394.32 823.1,394.45 825.67,393.44 826,393.55 828.84,396.36 830,396.52 831.02,397.15 833,399.43 836.51,399.19 839.36,397.88 840,397.96 841.84,398.57 844.88,398.65 847.8,398.34 849.64,398 852.43,397.99 857.19,399.42 860.01,398.79 862,399.26 864.91,400.7 867.49,401.49 869.74,403.43 872,404.33 872.67,404.44 875,405.45 875.63,405.42 878.21,404.37 880.98,403.78 883.37,404.49 888.46,403.64 890.91,402.16 893.97,402.88 897.13,401.52 899.25,402.05 900,401.94 905,400.22 907.69,401.52 909,402.03 910.78,401.14 913.87,400.16 917.01,399.37 918,398.77 919.71,398.48 921.98,399.17 923.8,399.47 925,399.45 925.96,399.58 928.12,401.31 930,401.63 933,405.2 933.41,404.93 937,404.05 938.26,404.54 941.35,406.2 942,406.32 943.28,405.96 945.2,404.9 948,404.97 948.4,405.16 950.35,405.13 952,405.61 956,401.43 959,397.7 960.87,396.13 962.95,396.36 965.72,396.23 968.55,395.14 970,394.73 973.55,395.1 975,395.39 977,394.09 979.33,393.08 981.23,391.92 985.74,390.37 990,388.14 991.82,387.35 994.21,387.4 997.07,385.59 1000,384.81 1005,384.01 1005.92,384.07 1008.33,385.25 1010,385.46 1010.61,384.86 1012.87,384.35 1014.68,383.08 1015,383.02 1016.5,383.25 1018.58,382.75 1020,382.77 1020.6,382.9 1022.1,409.95 1023.6,383.97 1025,384.2 1028.13,383.21 1030,382.81 1033.2,381.71 1035,381.27 1037.77,382.16 1039.69,381.71 1042,382.96 1044.22,381.78 1046.72,381.49 1049.7,380.62 1051.89,379.15 1059.53,377.63 1062.29,377.39 1064.99,377.64 1067.71,376.3 1070,376.19 1074.78,376.65 1077.72,376.49 1079.7,377.72 1081,377.44 1082.09,376.85 1084.33,376 1087.33,376.11 1092.58,374.45 1095,374.22 1095.75,374.31 1098.72,376.24 1100,376.32 1100.87,375.9 1103.06,375.66 1105,376.12 1108,377.94 1108.89,378.11 1111.06,377.74 1113.22,379.26 1114,379.27 1117.3,377.97 1119.57,377.93 1120,377.72 1121.6,377.56 1124.59,378.91 1125,378.85 1126.9,377.71 1129.52,378.03 1132.42,376.51 1135.11,375.67 1139.74,375.26 1144.78,373.77 1146.85,374.51 1149.68,373.7 1151.91,373.44 1154.32,374.71 1159.09,374.64 1162.16,374.41 1164.14,374.44 1167.31,374.17 1169.83,373.5 1172.86,373.8 1175.12,372.97 1176.94,373.81 1179.15,372.84 1181.38,373.22 1184.37,373.09 1185,373.23 1186.35,373.83 1189.09,373.89 1192.15,374.21 1193,374.17 1194.49,374.88 1195,375.39 1197.27,375.65 1200.39,374.18 1202.77,374.33 1205,373.74 1208.09,373.87 1210,374.04 1210.79,374.32 1213,376.75 1213.18,376.77 1215.27,375.9 1220,375.25 1221.94,374.64 1224.67,373.03 1227.82,373.28 1230.73,372.39 1233.23,371.9 1235.25,371.12 1238.42,369.53 1240,370.04 1241.13,370.18 1243.13,368.78 1246.18,367.54 1247,367.44 1250,369.13 1251.19,368.98 1253.9,367 1256.85,366.65 1259.44,366.66 1262.61,365.59 1265,364.97 1267.19,365.28 1269.26,364.98 1271.13,365.63 1272.96,364.96 1275,364.56 1276,364.55 1279,365.99 1279.53,365.82 1282.03,365.89 1284.12,363.99 1285.98,364.88 1288,364.53 1288.88,364.17 1290.89,362.83 1293.63,361.94 1296.45,360.37 1299.52,359.82 1300,359.64 1302.17,358.47 1304.59,356.46 1306,356.12 1306.62,356.27 1310.6,356.58 1313,356.53 1315,358.09 1315.14,357.99 1317.87,358.15 1319.96,356.27 1322,356.33 1322.98,356.23 1327,354.55 1328.24,354.34 1331.17,353.24 1334.28,352.61 1335,352.06 1336.88,351.28 1339.5,352.15 1340,352.12 1341.33,351.21 1345,349.73 1347.38,348.19 1349.44,346.65 1352,345.1 1353.51,344.93 1355.38,344.26 1357.32,344 1360.27,342.13 1362.86,340.72 1365.6,339.86 1369.2,440.66 1372.1,403.59 1374.6,416.83 1377.2,335.84 1380,334.9 1381.3,412.69 1382.9,333.38 1383.72,333.26 1385.73,333.28 1389.1,332.57 1392,427.42 1395,332.23 1396.93,331.68 1399.33,331.65 1401.71,331.22 1403,331.19 1404.65,331.43 1407.36,331.27 1410,331.91 1412.2,413.7 1415,331.26 1418,330.96 1421.71,331.71 1422,331.88 1423.81,332.25 1426.56,334.17 1427,334.14 1428.7,333.27 1433,332.53 1433.83,331.84 1437,330.84 1439.32,331.45 1441.71,331.52 1442,331.69 1445,331.79 1448.2,454.28 1452,336.03 1454.69,339.08 1455,339.28 1456.58,339.21 1459.75,338.67 1462.05,338.44 1464.15,339.2 1466.57,338.39 1468,338.87 1468.88,339.32 1472.08,338.85 1474.25,339.06 1475,339.4 1477.15,339.51 1479.22,337.73 1480,337.88 1481.49,338.89 1484.47,339.67 1486.86,338.79 1488.72,339.85 1491.05,338.75 1493.24,338.51 1495,338.68 1496.33,338.55 1498.83,337.55 1500,337.29 1501.36,337.16 1504.48,337.67 1507,336.94 1510.11,335.7 1512.41,335.79 1513,335.67 1515,335.63 1518,335.16 1518.9,390.13 1521.2,434.23 1526.3,333.06 1538.03,330.33 1543.07,329.41 1548.31,328.1 1552.86,327.41 1555.14,326.76 1557,326.48 1559.51,326.6 1561,326.51 1563.7,415.94 1567,325.99 1570.23,325.34 1575,324.7 1577.87,324.51 1580.25,323.97 1583.13,323.83 1587,323.29 1589.55,322.38 1592,321.72 1596.17,321.65 1600.9,320.77 1602.6,416.32 1605.3,319.49 1608.99,318.29 1613,316.75 1614.44,316.37 1621.68,316.65 1622.8,316.5 1624.7,396.2 1626.2,361.14 1628.3,439.07 1634.5,316.15 1639,316.16 1639.1,316.17 1641.8,420.94 1646.3,316.83 1650.44,316.83 1652.29,316.66 1655.17,316.98 1657,316.69 1660.3,440.79 1666.4,317.74 1667.18,317.83 1672.79,319.4 1675.19,319.17 1676.9,320.77 1678.8,435.43 1683.9,318.69 1686.1,318.44 1687.6,447.34 1693.3,316.2 1696.68,315.92 1699.42,316.19 1701.64,315.99 1703.65,315.52 1711,315.54 1711,318.5 1693.3,318.5 1687.6,447.9 1686.1,318.5 1683.9,318.69 1678.8,435.43 1676.9,320.77 1675.19,319.17 1672.79,319.4 1669.95,318.62 1666.4,318.5 1660.3,441.9 1657,318.5 1646.3,318.5 1641.8,423.1 1639.1,318.5 1634.5,318.5 1628.3,441.5 1626.2,363.5 1624.7,398.5 1622.8,318.5 1615,318.5 1605.3,321.73 1602.6,418.63 1600.9,323.2 1600,323.5 1567,326.55 1563.7,416.46 1561,327.11 1535,331.5 1526.3,333.46 1521.2,434.23 1518.9,390.13 1518,335.32 1515,336 1510.11,336 1504.48,337.67 1501.36,337.16 1500,337.29 1498.83,337.55 1496.33,338.55 1495,338.68 1493.24,338.51 1491.05,338.75 1488.72,339.85 1486.86,338.79 1484.47,339.67 1481.49,338.89 1480,337.88 1479.22,337.73 1477.15,339.51 1475,339.4 1474.25,339.06 1472.08,338.85 1468.88,339.32 1468,338.87 1466.57,338.39 1464.15,339.2 1462.05,338.44 1459.75,338.67 1456.58,339.21 1455,339.28 1454.69,339.08 1452,336.03 1448.2,454.28 1445,331.79 1442,331.69 1441.71,331.52 1439.32,331.45 1437,331.11 1436.45,331.12 1433.83,331.84 1433,332.53 1428.7,333.27 1427,334.14 1426.56,334.17 1423.81,332.25 1422,331.88 1421.71,331.71 1418.58,331.38 1415,331.43 1412.2,413.7 1410,331.91 1407.36,331.79 1395,333.17 1392,428.5 1389.1,333.82 1382.9,334.53 1381.3,413.54 1380,335.45 1377.2,336.33 1374.6,417.15 1372.1,403.94 1369.2,440.86 1365.6,339.99 1362.86,340.81 1360.27,342.13 1357.32,344 1355.38,344.26 1353.51,344.93 1352,345.1 1349.44,346.65 1347.38,348.19 1345,349.73 1341.33,351.21 1340,352.12 1339.5,352.15 1336.88,351.28 1335,352.06 1334.28,352.61 1331.17,353.24 1328.24,354.34 1327,354.55 1322.98,356.23 1322,356.33 1319.96,356.27 1317.87,358.15 1315.14,357.99 1315,358.09 1313,356.53 1310.6,356.58 1306,356.14 1304.59,356.52 1302.17,358.47 1300,359.64 1299.52,359.82 1296.45,360.37 1293.63,361.94 1290.89,362.83 1288.88,364.17 1288,364.53 1285.98,364.88 1284.12,363.99 1282.03,365.89 1279.53,365.82 1279,365.99 1276,364.55 1275,364.56 1272.96,364.96 1271.13,365.63 1269.26,364.98 1267.19,365.28 1265,364.97 1262.61,365.59 1259.44,366.66 1256.85,366.65 1253.9,367 1251.19,368.98 1250,369.13 1248.28,368.12 1247,367.57 1246.18,367.71 1243.13,368.78 1241.13,370.18 1240,370.04 1238.42,369.53 1235.25,371.12 1233.23,371.9 1230.73,372.39 1227.82,373.28 1224.67,373.04 1221.94,374.64 1220,375.25 1215.27,375.9 1213.18,376.77 1213,376.75 1210.79,374.32 1205,373.91 1202.77,374.33 1200.39,374.2 1197.27,375.65 1195,375.39 1194.49,374.88 1193,374.17 1192.15,374.21 1189.09,373.89 1186.35,373.83 1185,373.23 1184.37,373.09 1181.38,373.22 1179.15,372.84 1176.94,373.81 1175.12,372.97 1172.86,373.8 1169.83,373.5 1167.31,374.17 1164.14,374.44 1162.16,374.41 1159.09,374.64 1154.32,374.71 1151.91,373.44 1149.68,373.7 1146.85,374.51 1144.78,373.78 1139.74,375.26 1135.11,375.67 1132.42,376.51 1129.52,378.03 1126.9,377.71 1125,378.85 1124.59,378.91 1121.6,377.6 1120,377.72 1119.57,377.93 1117.3,377.97 1114,379.27 1113.22,379.26 1111.06,377.74 1108.89,378.11 1108,377.94 1105,376.21 1103.06,375.72 1100.87,375.9 1100,376.32 1098.72,376.24 1095.75,374.56 1092.58,374.49 1087.33,376.11 1084.33,376 1082.09,376.85 1081,377.44 1079.7,377.72 1077.72,376.49 1074.78,376.65 1070,376.21 1067.71,376.38 1064.99,377.64 1062.29,377.39 1060,377.58 1051.89,379.22 1049.7,380.62 1046.72,381.49 1044.22,381.78 1042,382.96 1039.69,381.71 1037.77,382.16 1035,381.28 1033.2,381.71 1030,382.81 1028.13,383.21 1025,384.2 1023.6,383.97 1022.1,409.95 1020.6,382.9 1020,382.77 1018.58,382.75 1016.5,383.25 1014.68,383.14 1012.87,384.35 1010.61,384.86 1010,385.46 1008.33,385.25 1005.92,384.17 1001.62,384.6 999.03,385.04 997.07,385.63 994.21,387.4 992,387.42 990,388.16 985.74,390.37 981.23,391.92 979.33,393.08 977,394.09 975,395.39 973.55,395.1 970,394.73 968.55,395.14 965.72,396.23 962.95,396.36 960.87,396.13 959,397.7 956,401.43 952,405.61 950.35,405.13 948.4,405.16 948,404.97 945.2,404.9 943.28,405.96 942,406.32 941.35,406.2 938.26,404.54 937,404.05 933.41,404.93 933,405.2 930,401.63 928.12,401.31 925.96,399.58 925,399.45 923.8,399.47 921.98,399.17 919.71,398.48 918,398.77 917.01,399.37 913.87,400.16 910.78,401.14 909,402.03 907.69,401.52 905,400.22 900,401.94 899.25,402.05 897.13,401.52 893.97,402.88 890.91,402.16 888.46,403.64 883.37,404.49 880.98,403.78 878.21,404.37 875.63,405.42 875,405.45 872.67,404.44 872,404.33 869.74,403.43 867.49,401.49 864.91,400.7 862,399.26 860.01,398.79 857.19,399.42 852.43,397.99 849.64,398 847.8,398.34 844.88,398.65 841.84,398.57 840,397.96 839.36,397.88 836.51,399.19 833,399.43 831.02,397.15 830,396.52 828.84,396.36 826,393.55 825.67,393.44 823.1,394.45 821.13,394.32 818.74,394.56 814.18,396.26 811.77,395.72 806.99,396.12 804.74,397.21 799.62,397.7 796.47,398.47 793,399 790.52,397.23 790,396.73 788.4,396.08 786.28,394.75 784,395.3 783.24,394.81 779,389.75 775.03,389.65 773,390.84 772.32,390.73 770,388.11 769.57,387.86 767.5,388.64 764.88,387.74 758.99,389.06 756.58,389.4 754.29,388.85 752.35,390.61 752,390.56 749.4,388.88 747.11,388.01 745,387.53 741.75,388.63 740,388.72 739,386.79 735.6,385.78 735,385.94 733.33,386.71 730.78,386.89 728,387.48 727.1,386.93 725.3,438.19 723.5,384.11 723.34,383.97 722,383.57 721.41,383.59 718.59,382.9 715.69,381.71 715,381.65 710.87,382.6 705.66,383.28 703.07,385.64 701.05,384.04 699.19,383.56 697,383.57 693.85,384.64 691.28,385.01 690,385.04 688.41,384.81 686.09,386.36 682.99,386.35 680.93,386.08 676.48,386.67 673.86,386.43 670,387.37 668.43,388.25 666.46,388.62 665,389.5 662,388.61 661.57,388.78 658,389.15 657.38,388.87 655.47,388.9 652,388.28 650.68,388.58 648.4,387.49 646.06,389.21 643,389.12 641.76,389.34 638,390.99 636.07,390.03 634,388.42 633.62,388.42 629.7,389.38 627.76,390.07 623.81,390.98 621.99,391.8 620,392.3 617.61,390.54 614.48,386.88 613,386.5 612.54,386.79 610.4,385.99 608.9,428.2 607.4,386.76 604.81,386.52 601.69,386 600,386 598.61,386.21 598,385.94 562.06,384.92 559.25,386 555,386.6 554.26,385.97 552.2,384.63 530,384 471.61,386.25 470,387.23 469.37,387.49 466.24,386.82 465,386.75 463.53,386.49 430,387.5 353,388.98 351.94,390.87 351,393.21 349.36,393.93 347,394.73 346,395.29 344.32,394.08 341,392.67 340,393 320,393 304.9,394.51 302.17,394.96 300,395 294.51,395.6 291.92,396.49 290,396.13 289.03,396.21 287.21,396.68 284.38,396.72 270,398.3 262.75,399.8 260,400.57 257.53,400.95 255.6,402.55 253.64,401.68 244.44,404.12 241.5,404.19 238.48,404.94 236.65,404.81 234.62,405.62 232,405.59 229.99,406.22 227.45,406.03 224.73,406.63 223,406.41 222.19,406.43 219.19,407.62 216.03,408.69 211.42,409.75 210,410.45 207.28,410.75 204.77,409.28 200.82,409.62 200,409.07 198.91,408.96 197.05,410.56 194.83,410.36 193,411.66 191.84,411.65 188.78,410.05 186.73,409.43 185,409.1 182.82,410.26 180,410.64 177,408.36 175.21,408.81 172.74,410.29 170.57,410.54 168.21,411.39 165.36,410.91 162,412.12 160.68,412.73 155.76,413.68 153.6,414.79 153,414.91 150.86,414.15 148.31,412.97 146.05,413.44 144.06,412.02 140,411.13 138.94,411.12 136.69,412.19 134.31,411.68 131.78,412.41 127.47,410.33 125,409.96 124.44,409.12 122.06,406.37 121,404.38 119.15,403.8 116.64,403.26 113.73,403.96 111.67,403.75 109.86,402.97 107.33,403.71 105.13,403.1 103.01,404.22 100.98,402.82 98.4,403.64 95.52,402.89 91.6,402.97 89.8,424 88,403.04 62.95,403.54 59.81,403.94 57.18,403.99 54.61,406.05 52,407.34 48,404.84 44.89,404.28 36,405.12 34.2,405.47 31.08,405.58 28.24,406.99 25.09,406.75 23.26,407.18 22,407.81 21.19,408.65 19,410.06 17,409.66 14.88,409.58 12.58,408.86 10.54,408.77 9,408.27 8.13,408.3 6.1,409.57 4.03,409.89 1.81,411.24 0,411.17Z"/>
<path fill="#1A237E" d="M0,411.17 1.81,411.24 4.03,409.89 6.1,409.57 8.13,408.3 9,408.27 10.54,408.77 12.58,408.86 14.88,409.58 17,409.66 19,410.06 21.19,408.65 22,407.81 23.26,407.18 25.09,406.75 28.24,406.99 31.08,405.19 34.2,405.47 36,404.73 37.08,404.47 42.06,404.62 44.89,404.18 47.42,404.81 48,404.84 52,407.34 54.61,406.05 57.18,403.99 59.81,403.94 62.95,403.01 64.98,403.56 67.94,402.48 70.07,402.59 72.09,402.21 75.86,402.39 78.95,402.36 81.83,402.16 84.58,402.62 87.06,402.17 88,402.29 89.8,423.64 91.6,402.9 92.39,403 95.52,402.83 98.4,403.64 100.98,402.82 103.01,404.22 105.13,403.1 107.33,403.71 109.86,402.97 111.67,403.75 113.73,403.96 116.64,403.26 119.15,403.8 121,404.38 122.06,406.37 124.44,409.12 125,409.96 127.47,410.33 131.78,412.41 134.31,411.68 136.69,412.19 138.94,411.12 140,411.13 144.06,412.02 146.05,413.44 148.31,412.97 150.86,414.15 153,414.91 153.6,414.79 155.76,413.68 160.68,412.73 162,412.12 165.36,410.91 168.21,411.39 170.57,410.54 172.74,410.29 175.21,408.81 177,408.36 180,410.64 182.82,410.26 185,409.1 186.73,409.43 188.78,410.05 191.84,411.65 193,411.66 194.83,410.36 197.05,410.56 198.91,408.96 200,409.07 200.82,409.62 204.77,409.28 207.28,410.75 210,410.45 211.42,409.75 216.03,408.69 219.19,407.62 222.19,406.43 223,406.41 224.73,406.63 227.45,406.03 229.99,406.22 232,405.59 234.62,405.62 236.65,404.81 238.48,404.94 241.5,404.12 244.44,404.12 253.64,401.65 255.6,402.55 257.53,400.95 260,400.57 262.75,399.51 270,397.42 272.82,397.17 276.02,397.44 281.68,396.78 284.38,396.05 287.21,396.68 289.03,395.98 291.92,396.49 294.51,395.4 299.85,394.9 302.17,394.96 304.9,394.29 307.61,394.15 310.69,393.08 312.53,393.48 315,392.76 315.61,392.47 317.97,391.92 320.36,390.71 322.5,390.64 325.1,390.24 327,390.48 327.92,390.78 330.26,390.68 332.95,391.12 335,391.14 338.44,391.41 340,392.1 341,392.39 341.55,392.85 344.32,394.08 346,395.29 347,394.73 349.36,393.93 351,393.21 351.94,390.87 353,388.81 353.87,388.82 356.02,388.16 360.75,387.32 363.01,386.32 365.66,385.94 367.86,385.41 370.21,385.45 375,384.82 377.99,385.26 380.5,385.11 383.22,385.71 385,385.85 386,386.17 388,386.44 390,385.56 390.81,385.51 393.77,384.67 396.01,384.55 398.36,384.15 400.71,384.46 403.54,383.96 406.21,384.25 408.23,383.54 410.25,384 413.33,383.61 415.57,383.7 417.81,383.11 419.95,383.28 422,382.8 424.74,382.93 430,383.9 433.44,384.14 435.43,383.88 439.37,384.34 441.48,384.01 443.97,384.35 446,384.45 446.61,384.68 448.85,384.85 450.91,385.55 452,386.15 453.7,386.27 456.56,385.99 458.54,385.16 459,385.09 461.26,385.45 463.53,386.34 465,386.75 466.24,386.82 469.37,387.49 470,387.23 471.61,386.2 473.44,385.78 475.85,385.87 477.98,385.13 480.74,385.23 483.24,384.5 485.32,384.36 488.31,384.55 493.25,384.1 495.38,384.15 498.31,383.33 500.16,383.44 502.77,383.05 505.91,383.46 508.43,383.21 510.38,383.35 513.22,382.7 516.15,382.92 519.25,382.85 523.62,382.43 525.64,382.65 528.22,382.62 530.2,382.37 532.21,383.34 536.77,383.65 539.89,383.43 542.67,383.68 544.99,383.62 547.07,383.4 552,384.52 554.26,385.97 555,386.6 559.25,386 562.06,384.74 564.03,384.36 568.94,384.61 571.64,384.33 573.83,384.62 575,384.56 576.57,384.34 579.15,384.2 581.77,383.51 584,383.33 586.3,384.19 596.1,385.25 598.61,386.21 601.69,385.52 604.81,386.52 607.4,386.76 608.9,428.2 610.4,385.98 612.54,386.79 613,386.5 614.48,386.8 617.61,390.54 620,392.3 621.99,391.8 623.81,390.98 627.76,390.07 629.7,389.38 633.62,388.42 634,388.42 636.07,390.03 638,390.99 641.76,389.34 643,389.12 646.06,389.21 648.4,387.49 650.68,388.58 652,388.28 655.47,388.9 657.38,388.87 658,389.15 661.57,388.78 662,388.61 665,389.5 666.46,388.62 668.43,388.25 670,387.37 673.86,386.43 676.48,386.67 680.93,386.08 682.99,386.35 686.09,386.36 688.41,384.81 690,385.04 691.28,385.01 693.85,384.64 697,383.57 699.19,383.56 701.05,384.04 703.07,385.64 705.66,383.28 710.87,382.6 715,381.65 715.69,381.71 718.59,382.9 721.41,383.59 722,383.57 723.34,383.97 723.5,384.11 725.3,438.19 727.1,386.93 728,387.48 730.78,386.89 733.33,386.71 735,385.94 735.6,385.78 739,386.79 740,388.72 741.75,388.63 745,387.53 747.11,388.01 749.4,388.88 752,390.56 752.35,390.61 754.29,388.85 756.58,389.4 758.99,389.06 764.88,387.74 767.5,388.64 769.57,387.86 770,388.11 772.32,390.73 773,390.84 775.03,389.65 778.05,389.53 779,389.63 780.32,391.43 783.24,394.81 784,395.3 786.28,394.75 788.4,396.08 790,396.73 790.52,397.23 793,399 796.47,398.47 799.62,397.7 804.74,397.21 806.99,396.12 811.77,395.72 814.18,396.26 818.74,394.56 821.13,394.32 823.1,394.45 825.67,393.44 826,393.55 828.84,396.36 830,396.52 831.02,397.15 833,399.43 836.51,399.19 839.36,397.88 840,397.96 841.84,398.57 844.88,398.65 847.8,398.34 849.64,398 852.43,397.99 857.19,399.42 860.01,398.79 862,399.26 864.91,400.7 867.49,401.49 869.74,403.43 872,404.33 872.67,404.44 875,405.45 875.63,405.42 878.21,404.37 880.98,403.78 883.37,404.49 888.46,403.64 890.91,402.16 893.97,402.88 897.13,401.52 899.25,402.05 900,401.94 905,400.22 907.69,401.52 909,402.03 910.78,401.14 913.87,400.16 917.01,399.37 918,398.77 919.71,398.48 921.98,399.17 923.8,399.47 925,399.45 925.96,399.58 928.12,401.31 930,401.63 933,405.2 933.41,404.93 937,404.05 938.26,404.54 941.35,406.2 942,406.32 943.28,405.96 945.2,404.9 948,404.97 948.4,405.16 950.35,405.13 952,405.61 956,401.43 959,397.7 960.87,396.13 962.95,396.36 965.72,396.23 968.55,395.14 970,394.73 973.55,395.1 975,395.39 977,394.09 979.33,393.08 981.23,391.92 985.74,390.37 991.82,387.24 994.21,387.4 997.07,385.56 1001.62,384.38 1005,383.77 1005.92,383.99 1008.33,385.25 1010,385.46 1010.61,384.86 1012.87,384.35 1014.68,383.03 1015,382.95 1016.5,383.25 1018.58,382.75 1020,382.77 1020.6,382.9 1022.1,409.95 1023.6,383.97 1025,384.2 1035,381.26 1037.77,382.16 1039.69,381.71 1042,382.96 1044.22,381.78 1046.72,381.49 1049.7,380.62 1051.89,379.09 1059.53,377.6 1062.29,377.39 1064.99,377.64 1067.71,376.22 1070,376.17 1074.78,376.65 1077.72,376.49 1079.7,377.72 1081,377.44 1082.09,376.85 1084.33,376 1087.33,376.11 1092.58,374.42 1095,373.97 1095.75,374.1 1098.72,376.24 1100,376.32 1100.87,375.9 1103.06,375.6 1105,376.04 1105.99,376.79 1108,377.94 1108.89,378.11 1111.06,377.74 1113.22,379.26 1114,379.27 1117.3,377.97 1119.57,377.93 1120,377.71 1121.6,377.53 1124.59,378.91 1125,378.85 1126.9,377.71 1129.52,378.03 1132.42,376.51 1135.11,375.67 1139.74,375.26 1144.78,373.76 1146.85,374.51 1149.68,373.7 1151.91,373.44 1154.32,374.71 1159.09,374.64 1162.16,374.41 1164.14,374.44 1167.31,374.17 1169.83,373.5 1172.86,373.8 1175.12,372.97 1176.94,373.81 1179.15,372.84 1181.38,373.22 1184.37,373.09 1185,373.23 1186.35,373.83 1189.09,373.89 1192.15,374.21 1193,374.17 1194.49,374.88 1195,375.39 1197.27,375.65 1200.39,374.16 1202.77,374.33 1205,373.6 1208.09,373.67 1210,373.89 1210.79,374.32 1213,376.75 1213.18,376.77 1215.27,375.9 1220,375.25 1221.94,374.64 1224.67,373.02 1227.82,373.28 1230.73,372.39 1233.23,371.9 1235.25,371.12 1238.42,369.53 1240,370.04 1241.13,370.18 1243.13,368.78 1246.18,367.41 1247,367.32 1250,369.13 1251.19,368.98 1253.9,367 1256.85,366.65 1259.44,366.66 1262.61,365.59 1265,364.97 1267.19,365.28 1269.26,364.98 1271.13,365.63 1272.96,364.96 1275,364.56 1276,364.55 1279,365.99 1279.53,365.82 1282.03,365.89 1284.12,363.99 1285.98,364.88 1288,364.53 1288.88,364.17 1290.89,362.83 1293.63,361.94 1296.45,360.37 1299.52,359.82 1300,359.64 1302.17,358.47 1304.59,356.41 1306,356.1 1306.62,356.27 1310.6,356.58 1313,356.53 1315,358.09 1315.14,357.99 1317.87,358.15 1319.96,356.27 1322,356.33 1322.98,356.23 1327,354.55 1328.24,354.34 1331.17,353.24 1334.28,352.61 1335,352.06 1336.88,351.28 1339.5,352.15 1340,352.12 1341.33,351.21 1345,349.73 1347.38,348.19 1349.44,346.65 1352,345.1 1353.51,344.93 1355.38,344.26 1357.32,344 1362.86,340.64 1364,340.18 1365.6,339.75 1369.2,440.49 1372.1,403.29 1374.6,416.56 1377.2,335.44 1380,334.44 1381.3,411.98 1382.9,332.43 1383.72,332.29 1385.73,332.51 1389.1,331.53 1392,426.52 1395,331.44 1396.93,330.61 1399.33,330.78 1401.71,330.21 1403,330.28 1404.65,330.88 1407.36,330.83 1410,331.91 1412.2,413.7 1415,331.11 1415.61,330.88 1418,330.61 1418.58,330.91 1421.71,331.71 1422,331.88 1423.81,332.25 1426.56,334.17 1427,334.14 1428.7,333.27 1433,332.53 1433.83,331.84 1437,330.62 1439.32,331.45 1441.71,331.52 1442,331.69 1445,331.79 1448.2,454.28 1452,336.03 1454.69,339.08 1455,339.28 1456.58,339.21 1459.75,338.67 1462.05,338.44 1464.15,339.2 1466.57,338.39 1468,338.87 1468.88,339.32 1472.08,338.85 1474.25,339.06 1475,339.4 1477.15,339.51 1479.22,337.73 1480,337.88 1481.49,338.89 1484.47,339.67 1486.86,338.79 1488.72,339.85 1491.05,338.75 1493.24,338.51 1495,338.68 1496.33,338.55 1498.83,337.55 1500,337.29 1501.36,337.16 1504.48,337.67 1507,336.94 1510.11,335.44 1512.41,335.61 1513,335.4 1517,335.21 1517.66,334.99 1518,335.03 1518.9,390.13 1521.2,434.23 1526.3,332.73 1528.33,332.18 1530.13,331.91 1533.11,331.04 1535.51,330.57 1538.03,329.79 1543.07,328.83 1548.31,327.17 1550.97,326.93 1552.86,326.55 1555.14,325.7 1557,325.45 1559.51,326.03 1561,326.02 1563.7,415.51 1567,325.52 1570.23,324.57 1575,323.77 1577.87,323.64 1580.25,322.84 1583.13,322.8 1585.31,322.29 1587,322.12 1589.55,320.65 1592,319.61 1593.94,319.57 1596.17,319.82 1599.04,318.95 1600.9,318.74 1602.6,414.4 1605.3,317.62 1608.99,316.44 1613,314.73 1614.44,314.44 1616.59,314.87 1619.21,315.03 1621.68,315.11 1622.8,314.83 1624.7,394.29 1626.2,359.18 1628.3,437.05 1634.5,314.19 1639,314.21 1639.1,314.23 1641.8,419.15 1646.3,315.44 1650.44,315.43 1652.29,315.13 1655.17,315.72 1657,315.18 1660.3,439.87 1666.4,317.11 1667.18,317.27 1669.95,318.62 1672.79,319.4 1675.19,319.17 1676.9,320.77 1678.8,435.43 1683.9,318.69 1686.1,318.38 1687.6,446.86 1693.3,314.29 1694.11,314.27 1696.68,313.77 1699.42,314.27 1701.64,313.91 1703.65,313.03 1706,312.95 1711,313.08 1711,315.54 1703.65,315.52 1701.64,315.99 1699.42,316.19 1696.68,315.92 1693.3,316.2 1687.6,447.34 1686.1,318.44 1683.9,318.69 1678.8,435.43 1676.9,320.77 1675.19,319.17 1672.79,319.4 1667.18,317.83 1666.4,317.74 1660.3,440.79 1657,316.69 1655.17,316.98 1652.29,316.66 1650.44,316.83 1646.3,316.83 1641.8,420.94 1639.1,316.17 1639,316.16 1634.5,316.15 1628.3,439.07 1626.2,361.14 1624.7,396.2 1622.8,316.5 1621.68,316.65 1614.44,316.37 1613,316.75 1608.99,318.29 1605.3,319.49 1602.6,416.32 1600.9,320.77 1596.17,321.65 1592,321.72 1589.55,322.38 1587,323.29 1583.13,323.83 1580.25,323.97 1577.87,324.51 1575,324.7 1570.23,325.34 1567,325.99 1563.7,415.94 1561,326.51 1559.51,326.6 1557,326.48 1555.14,326.76 1552.86,327.41 1548.31,328.1 1543.07,329.41 1538.03,330.33 1526.3,333.06 1521.2,434.23 1518.9,390.13 1518,335.16 1515,335.63 1513,335.67 1512.41,335.79 1510.11,335.7 1507,336.94 1504.48,337.67 1501.36,337.16 1500,337.29 1498.83,337.55 1496.33,338.55 1495,338.68 1493.24,338.51 1491.05,338.75 1488.72,339.85 1486.86,338.79 1484.47,339.67 1481.49,338.89 1480,337.88 1479.22,337.73 1477.15,339.51 1475,339.4 1474.25,339.06 1472.08,338.85 1468.88,339.32 1468,338.87 1466.57,338.39 1464.15,339.2 1462.05,338.44 1459.75,338.67 1456.58,339.21 1455,339.28 1454.69,339.08 1452,336.03 1448.2,454.28 1445,331.79 1442,331.69 1441.71,331.52 1439.32,331.45 1437,330.84 1433.83,331.84 1433,332.53 1428.7,333.27 1427,334.14 1426.56,334.17 1423.81,332.25 1422,331.88 1421.71,331.71 1418,330.96 1415,331.26 1412.2,413.7 1410,331.91 1407.36,331.27 1404.65,331.43 1403,331.19 1401.71,331.22 1399.33,331.65 1396.93,331.68 1395,332.23 1392,427.42 1389.1,332.57 1385.73,333.28 1383.72,333.26 1382.9,333.38 1381.3,412.69 1380,334.9 1377.2,335.84 1374.6,416.83 1372.1,403.59 1369.2,440.66 1365.6,339.86 1362.86,340.72 1360.27,342.13 1357.32,344 1355.38,344.26 1353.51,344.93 1352,345.1 1349.44,346.65 1347.38,348.19 1345,349.73 1341.33,351.21 1340,352.12 1339.5,352.15 1336.88,351.28 1335,352.06 1334.28,352.61 1331.17,353.24 1328.24,354.34 1327,354.55 1322.98,356.23 1322,356.33 1319.96,356.27 1317.87,358.15 1315.14,357.99 1315,358.09 1313,356.53 1310.6,356.58 1306.62,356.27 1306,356.12 1304.59,356.46 1302.17,358.47 1300,359.64 1299.52,359.82 1296.45,360.37 1293.63,361.94 1290.89,362.83 1288.88,364.17 1288,364.53 1285.98,364.88 1284.12,363.99 1282.03,365.89 1279.53,365.82 1279,365.99 1276,364.55 1275,364.56 1272.96,364.96 1271.13,365.63 1269.26,364.98 1267.19,365.28 1265,364.97 1262.61,365.59 1259.44,366.66 1256.85,366.65 1253.9,367 1251.19,368.98 1250,369.13 1247,367.44 1246.18,367.54 1243.13,368.78 1241.13,370.18 1240,370.04 1238.42,369.53 1235.25,371.12 1233.23,371.9 1230.73,372.39 1227.82,373.28 1224.67,373.03 1221.94,374.64 1220,375.25 1215.27,375.9 1213.18,376.77 1213,376.75 1210.79,374.32 1210,374.04 1208.09,373.87 1205,373.74 1202.77,374.33 1200.39,374.18 1197.27,375.65 1195,375.39 1194.49,374.88 1193,374.17 1192.15,374.21 1189.09,373.89 1186.35,373.83 1185,373.23 1184.37,373.09 1181.38,373.22 1179.15,372.84 1176.94,373.81 1175.12,372.97 1172.86,373.8 1169.83,373.5 1167.31,374.17 1164.14,374.44 1162.16,374.41 1159.09,374.64 1154.32,374.71 1151.91,373.44 1149.68,373.7 1146.85,374.51 1144.78,373.77 1139.74,375.26 1135.11,375.67 1132.42,376.51 1129.52,378.03 1126.9,377.71 1125,378.85 1124.59,378.91 1121.6,377.56 1120,377.72 1119.57,377.93 1117.3,377.97 1114,379.27 1113.22,379.26 1111.06,377.74 1108.89,378.11 1108,377.94 1105,376.12 1103.06,375.66 1100.87,375.9 1100,376.32 1098.72,376.24 1095.75,374.31 1095,374.22 1092.58,374.45 1087.33,376.11 1084.33,376 1082.09,376.85 1081,377.44 1079.7,377.72 1077.72,376.49 1074.78,376.65 1070,376.19 1067.71,376.3 1064.99,377.64 1062.29,377.39 1059.53,377.63 1051.89,379.15 1049.7,380.62 1046.72,381.49 1044.22,381.78 1042,382.96 1039.69,381.71 1037.77,382.16 1035,381.27 1033.2,381.71 1030,382.81 1028.13,383.21 1025,384.2 1023.6,383.97 1022.1,409.95 1020.6,382.9 1020,382.77 1018.58,382.75 1016.5,383.25 1015,383.02 1014.68,383.08 1012.87,384.35 1010.61,384.86 1010,385.46 1008.33,385.25 1005.92,384.07 1005,384.01 1000,384.81 997.07,385.59 994.21,387.4 991.82,387.35 990,388.14 985.74,390.37 981.23,391.92 979.33,393.08 977,394.09 975,395.39 973.55,395.1 970,394.73 968.55,395.14 965.72,396.23 962.95,396.36 960.87,396.13 959,397.7 956,401.43 952,405.61 950.35,405.13 948.4,405.16 948,404.97 945.2,404.9 943.28,405.96 942,406.32 941.35,406.2 938.26,404.54 937,404.05 933.41,404.93 933,405.2 930,401.63 928.12,401.31 925.96,399.58 925,399.45 923.8,399.47 921.98,399.17 919.71,398.48 918,398.77 917.01,399.37 913.87,400.16 910.78,401.14 909,402.03 907.69,401.52 905,400.22 900,401.94 899.25,402.05 897.13,401.52 893.97,402.88 890.91,402.16 888.46,403.64 883.37,404.49 880.98,403.78 878.21,404.37 875.63,405.42 875,405.45 872.67,404.44 872,404.33 869.74,403.43 867.49,401.49 864.91,400.7 862,399.26 860.01,398.79 857.19,399.42 852.43,397.99 849.64,398 847.8,398.34 844.88,398.65 841.84,398.57 840,397.96 839.36,397.88 836.51,399.19 833,399.43 831.02,397.15 830,396.52 828.84,396.36 826,393.55 825.67,393.44 823.1,394.45 821.13,394.32 818.74,394.56 814.18,396.26 811.77,395.72 806.99,396.12 804.74,397.21 799.62,397.7 796.47,398.47 793,399 790.52,397.23 790,396.73 788.4,396.08 786.28,394.75 784,395.3 783.24,394.81 780.32,391.43 779,389.69 775.03,389.65 773,390.84 772.32,390.73 770,388.11 769.57,387.86 767.5,388.64 764.88,387.74 758.99,389.06 756.58,389.4 754.29,388.85 752.35,390.61 752,390.56 749.4,388.88 747.11,388.01 745,387.53 741.75,388.63 740,388.72 739,386.79 735.6,385.78 735,385.94 733.33,386.71 730.78,386.89 728,387.48 727.1,386.93 725.3,438.19 723.5,384.11 723.34,383.97 722,383.57 721.41,383.59 718.59,382.9 715.69,381.71 715,381.65 710.87,382.6 705.66,383.28 703.07,385.64 701.05,384.04 699.19,383.56 697,383.57 693.85,384.64 691.28,385.01 690,385.04 688.41,384.81 686.09,386.36 682.99,386.35 680.93,386.08 676.48,386.67 673.86,386.43 670,387.37 668.43,388.25 666.46,388.62 665,389.5 662,388.61 661.57,388.78 658,389.15 657.38,388.87 655.47,388.9 652,388.28 650.68,388.58 648.4,387.49 646.06,389.21 643,389.12 641.76,389.34 638,390.99 636.07,390.03 634,388.42 633.62,388.42 629.7,389.38 627.76,390.07 623.81,390.98 621.99,391.8 620,392.3 617.61,390.54 614.48,386.83 613,386.5 612.54,386.79 610.4,385.98 608.9,428.2 607.4,386.76 604.81,386.52 601.69,385.74 598.61,386.21 598,385.93 596.1,385.54 586.3,384.84 584,384.33 581.77,384.4 579.15,384.74 575,384.89 571.64,384.72 568.94,384.84 564.03,384.64 562.06,384.82 559.25,386 555,386.6 554.26,385.97 552.2,384.63 548,383.98 547.07,383.89 542.67,383.99 539.89,383.82 536.77,383.9 532.21,383.67 530.2,383.11 525.64,383.34 523.62,383.26 516.15,383.66 513.22,383.59 510.38,384 508.43,383.96 505.91,384.14 502.77,383.98 500.16,384.24 498.31,384.21 495.38,384.71 493.25,384.72 488.31,385.06 485.32,385.01 483.24,385.12 480.74,385.57 477.98,385.55 475.85,385.99 473.44,385.97 471.61,386.22 470,387.23 469.37,387.49 466.24,386.82 465,386.75 461.26,385.96 459,385.79 456.56,386.32 453.7,386.5 452,386.47 448.85,385.8 446,385.62 441.48,385.44 439.37,385.65 435.43,385.45 433.44,385.62 430,385.54 424.74,385.06 422,385.01 419.95,385.29 417.81,385.22 415.57,385.56 413.33,385.53 410.25,385.77 408.23,385.54 406.21,385.94 403.54,385.81 400.71,386.11 398.36,385.96 393.77,386.29 390,386.8 388,387.31 380.5,386.65 377.99,386.75 375,386.53 370.21,386.91 367.86,386.92 363.01,387.45 360.75,388.01 356.02,388.51 353.87,388.89 353,388.89 351.94,390.87 351,393.21 349.36,393.93 347,394.73 346,395.29 344.32,394.08 341,392.52 340,392.51 338.44,392.13 332.95,391.98 330.26,391.73 327.92,391.79 325.1,391.5 320.36,391.75 317.97,392.51 312.53,393.6 310.69,393.47 307.61,394.19 304.9,394.39 302.17,394.96 299.85,394.95 294.51,395.49 291.92,396.49 290,396.13 289.03,396.08 287.21,396.68 284.38,396.36 281.68,396.88 276.02,397.53 272.82,397.54 270,397.82 262.75,399.64 260,400.57 257.53,400.95 255.6,402.55 253.64,401.67 244.44,404.12 241.5,404.15 238.48,404.94 236.65,404.81 234.62,405.62 232,405.59 229.99,406.22 227.45,406.03 224.73,406.63 223,406.41 222.19,406.43 219.19,407.62 216.03,408.69 211.42,409.75 210,410.45 207.28,410.75 204.77,409.28 200.82,409.62 200,409.07 198.91,408.96 197.05,410.56 194.83,410.36 193,411.66 191.84,411.65 188.78,410.05 186.73,409.43 185,409.1 182.82,410.26 180,410.64 177,408.36 175.21,408.81 172.74,410.29 170.57,410.54 168.21,411.39 165.36,410.91 162,412.12 160.68,412.73 155.76,413.68 153.6,414.79 153,414.91 150.86,414.15 148.31,412.97 146.05,413.44 144.06,412.02 140,411.13 138.94,411.12 136.69,412.19 134.31,411.68 131.78,412.41 127.47,410.33 125,409.96 124.44,409.12 122.06,406.37 121,404.38 119.15,403.8 116.64,403.26 113.73,403.96 111.67,403.75 109.86,402.97 107.33,403.71 105.13,403.1 103.01,404.22 100.98,402.82 98.4,403.64 95.52,402.86 91.6,402.93 89.8,423.81 88,402.63 87.06,402.57 84.58,402.84 81.83,402.61 75.86,402.8 72.09,402.73 70.07,402.96 67.94,402.91 64.98,403.56 62.95,403.25 59.81,403.94 57.18,403.99 54.61,406.05 52,407.34 48,404.84 47.42,404.81 44.89,404.23 42.06,404.62 37.08,404.72 36,404.9 34.2,405.47 31.08,405.37 28.24,406.99 25.09,406.75 23.26,407.18 22,407.81 21.19,408.65 19,410.06 17,409.66 14.88,409.58 12.58,408.86 10.54,408.77 9,408.27 8.13,408.3 6.1,409.57 4.03,409.89 1.81,411.24 0,411.17Z"/>
<path fill="#0D47A1" d="M0,411.17 1.81,411.24 4.03,409.89 6.1,409.57 8.13,408.3 9,408.27 10.54,408.77 12.58,408.86 14.88,409.58 17,409.66 19,410.06 21.19,408.65 22,407.81 23.26,407.18 25.09,406.75 28.24,406.99 31.08,405.02 34.2,405.47 36,404.55 37.08,404.22 39.02,404.46 42.06,404.62 44.89,404.14 47.42,404.81 48,404.84 52,407.34 54.61,406.05 57.18,403.99 59.81,403.94 62.95,402.76 64.98,403.56 67.94,402.04 70.07,402.22 72.09,401.69 75.86,401.99 78.95,401.97 81.83,401.7 84.58,402.4 87.06,401.76 88,401.95 89.8,423.48 91.6,402.87 92.39,403 95.52,402.81 98.4,403.64 100.98,402.82 103.01,404.22 105.13,403.1 107.33,403.71 109.86,402.97 111.67,403.75 113.73,403.96 116.64,403.26 119.15,403.8 121,404.38 122.06,406.37 124.44,409.12 125,409.96 127.47,410.33 131.78,412.41 134.31,411.68 136.69,412.19 138.94,411.12 140,411.13 144.06,412.02 146.05,413.44 148.31,412.97 150.86,414.15 153,414.91 153.6,414.79 155.76,413.68 160.68,412.73 162,412.12 165.36,410.91 168.21,411.39 170.57,410.54 172.74,410.29 175.21,408.81 177,408.36 180,410.64 182.82,410.26 185,409.1 186.73,409.43 188.78,410.05 191.84,411.65 193,411.66 194.83,410.36 197.05,410.56 198.91,408.96 200,409.07 200.82,409.62 204.77,409.28 207.28,410.75 210,410.45 211.42,409.75 216.03,408.69 219.19,407.62 222.19,406.43 223,406.41 224.73,406.63 227.45,406.03 229.99,406.22 232,405.59 234.62,405.62 236.65,404.81 238.48,404.94 241.5,404.09 244.44,404.12 253.64,401.64 255.6,402.55 257.53,400.95 260.65,400.37 262.75,399.38 265.25,398.49 267.36,397.98 270,397.02 272.82,396.8 276.02,397.36 281.68,396.67 284.38,395.75 287.21,396.68 289.03,395.88 291.92,396.49 294.51,395.31 296.68,395.21 299.85,394.85 302.17,394.96 304.9,394.2 307.61,394.11 310.69,392.7 312.53,393.36 315,392.43 315.61,392.03 317.97,391.34 320.36,389.68 322.5,389.56 325.1,388.99 327,389.33 327.92,389.77 330.26,389.62 332.95,390.27 335,390.3 338.44,390.68 341,392.27 341.55,392.85 344.32,394.08 346,395.29 347,394.73 349.36,393.93 351,393.21 351.94,390.87 353,388.73 353.87,388.76 356.02,387.8 357.85,387.24 360.75,386.62 363.01,385.19 365.66,384.65 367.86,383.91 370.21,383.98 372.58,383.44 375,383.1 377.99,383.77 380.5,383.57 383.22,384.48 385,384.68 386,385.16 388,385.58 390,384.31 390.81,384.25 393.77,383.06 396.01,382.9 398.36,382.34 400.71,382.82 403.54,382.11 406.21,382.55 408.23,381.55 410.25,382.22 413.33,381.69 415.57,381.85 417.81,381.01 419.95,381.27 422,380.6 424.74,380.81 430,382.27 433.44,382.67 435.43,382.3 439.37,383.04 441.48,382.58 443.97,383.11 446,383.29 446.61,383.63 448.85,383.9 450.91,384.96 452,385.84 453.7,386.03 456.56,385.67 458.54,384.48 459,384.39 461.26,384.95 463.53,386.27 465,386.75 466.24,386.82 469.37,387.49 470,387.23 471.61,386.17 473.44,385.59 475.85,385.76 477.98,384.7 480.74,384.89 483.24,383.88 485.32,383.71 488.31,384.05 493.25,383.48 495.38,383.58 498.31,382.45 500.16,382.65 502.77,382.12 505.91,382.77 508.43,382.45 510.38,382.69 513.22,381.8 516.15,382.18 519.25,382.14 523.62,381.6 525.64,381.96 528.22,381.96 530.2,381.62 532.21,383 534.2,383.08 536.77,383.4 539.89,383.04 542.67,383.37 544.99,383.25 547.07,382.9 548,383.1 550.16,383.95 552,384.47 554.26,385.97 555,386.6 559.25,386 562.06,384.66 564.03,384.08 568.94,384.39 571.64,383.94 573.83,384.33 575,384.23 576.57,383.89 579.15,383.65 581.77,382.61 584,382.32 586.3,383.55 589.1,383.84 596.1,384.96 598.61,386.21 601.69,385.31 604.81,386.52 607.4,386.76 608.9,428.2 610.4,385.97 612.54,386.79 613,386.5 614.48,386.77 617.61,390.54 620,392.3 621.99,391.8 623.81,390.98 627.76,390.07 629.7,389.38 633.62,388.42 634,388.42 636.07,390.03 638,390.99 641.76,389.34 643,389.12 646.06,389.21 648.4,387.49 650.68,388.58 652,388.28 655.47,388.9 657.38,388.87 658,389.15 661.57,388.78 662,388.61 665,389.5 666.46,388.62 668.43,388.25 670,387.37 673.86,386.43 676.48,386.67 680.93,386.08 682.99,386.35 686.09,386.36 688.41,384.81 690,385.04 691.28,385.01 693.85,384.64 697,383.57 699.19,383.56 701.05,384.04 703.07,385.64 705.66,383.28 710.87,382.6 715,381.65 715.69,381.71 718.59,382.9 721.41,383.59 722,383.57 723.34,383.97 723.5,384.11 725.3,438.19 727.1,386.93 728,387.48 730.78,386.89 733.33,386.71 735,385.94 735.6,385.78 739,386.79 740,388.72 741.75,388.63 745,387.53 747.11,388.01 749.4,388.88 752,390.56 752.35,390.61 754.29,388.85 756.58,389.4 758.99,389.06 764.88,387.74 767.5,388.64 769.57,387.86 770,388.11 772.32,390.73 773,390.84 775.03,389.65 778.05,389.44 779,389.58 780.32,391.43 783.24,394.81 784,395.3 786.28,394.75 788.4,396.08 790,396.73 790.52,397.23 793,399 796.47,398.47 799.62,397.7 804.74,397.21 806.99,396.12 811.77,395.72 814.18,396.26 818.74,394.56 821.13,394.32 823.1,394.45 825.67,393.44 826,393.55 828.84,396.36 830,396.52 831.02,397.15 833,399.43 836.51,399.19 839.36,397.88 840,397.96 841.84,398.57 844.88,398.65 847.8,398.34 849.64,398 852.43,397.99 857.19,399.42 860.01,398.79 862,399.26 864.91,400.7 867.49,401.49 869.74,403.43 872,404.33 872.67,404.44 875,405.45 875.63,405.42 878.21,404.37 880.98,403.78 883.37,404.49 888.46,403.64 890.91,402.16 893.97,402.88 897.13,401.52 899.25,402.05 900,401.94 905,400.22 907.69,401.52 909,402.03 910.78,401.14 913.87,400.16 917.01,399.37 918,398.77 919.71,398.48 921.98,399.17 923.8,399.47 925,399.45 925.96,399.58 928.12,401.31 930,401.63 933,405.2 933.41,404.93 937,404.05 938.26,404.54 941.35,406.2 942,406.32 943.28,405.96 945.2,404.9 948,404.97 948.4,405.16 950.35,405.13 952,405.61 956,401.43 959,397.7 960.87,396.13 962.95,396.36 965.72,396.23 968.55,395.14 970,394.73 973.55,395.1 975,395.39 977,394.09 979.33,393.08 981.23,391.92 985.74,390.37 991.82,387.13 994.21,387.4 997.07,385.53 1001.62,384.29 1005,383.54 1005.92,383.9 1008.33,385.25 1010,385.46 1010.61,384.86 1012.87,384.35 1014.68,382.98 1015,382.88 1016.5,383.25 1018.58,382.75 1020,382.77 1020.6,382.9 1022.1,409.95 1023.6,383.97 1025,384.2 1035,381.25 1037.77,382.16 1039.69,381.71 1042,382.96 1044.22,381.78 1046.72,381.49 1049.7,380.62 1051.89,379.03 1059.53,377.56 1062.29,377.39 1064.99,377.64 1067.71,376.15 1070,376.16 1074.78,376.65 1077.72,376.49 1079.7,377.72 1081,377.44 1082.09,376.85 1084.33,376 1087.33,376.11 1095,373.71 1095.75,373.9 1098.72,376.24 1100,376.32 1100.87,375.9 1103.06,375.55 1105,375.97 1105.99,376.79 1108,377.94 1108.89,378.11 1111.06,377.74 1113.22,379.26 1114,379.27 1117.3,377.97 1119.57,377.93 1120,377.7 1121.6,377.5 1124.59,378.91 1125,378.85 1126.9,377.71 1129.52,378.03 1132.42,376.51 1135.11,375.67 1139.74,375.26 1144.78,373.75 1146.85,374.51 1149.68,373.7 1151.91,373.44 1154.32,374.71 1159.09,374.64 1162.16,374.41 1164.14,374.44 1167.31,374.17 1169.83,373.5 1172.86,373.8 1175.12,372.97 1176.94,373.81 1179.15,372.84 1181.38,373.22 1184.37,373.09 1185,373.23 1186.35,373.83 1189.09,373.89 1192.15,374.21 1193,374.17 1194.49,374.88 1195,375.39 1197.27,375.65 1200.39,374.15 1202.77,374.33 1205.15,373.44 1208.09,373.47 1210,373.73 1210.79,374.32 1213,376.75 1213.18,376.77 1215.27,375.9 1220,375.25 1221.94,374.64 1224.67,373.02 1227.82,373.28 1230.73,372.39 1233.23,371.9 1235.25,371.12 1238.42,369.53 1240,370.04 1241.13,370.18 1243.13,368.78 1246.18,367.27 1247,367.2 1248.28,368.12 1250,369.13 1251.19,368.98 1253.9,367 1256.85,366.65 1259.44,366.66 1262.61,365.59 1265,364.97 1267.19,365.28 1269.26,364.98 1271.13,365.63 1272.96,364.96 1275,364.56 1276,364.55 1279,365.99 1279.53,365.82 1282.03,365.89 1284.12,363.99 1285.98,364.88 1288,364.53 1288.88,364.17 1290.89,362.83 1293.63,361.94 1296.45,360.37 1299.52,359.82 1300,359.64 1302.17,358.47 1304.59,356.36 1306,356.07 1306.62,356.27 1310.6,356.58 1313,356.53 1315,358.09 1315.14,357.99 1317.87,358.15 1319.96,356.27 1322,356.33 1322.98,356.23 1327,354.55 1328.24,354.34 1331.17,353.24 1334.28,352.61 1335,352.06 1336.88,351.28 1339.5,352.15 1340,352.12 1341.33,351.21 1345,349.73 1347.38,348.19 1349.44,346.65 1352,345.1 1353.51,344.93 1355.38,344.26 1357.32,344 1362.86,340.56 1364,340.04 1365.6,339.64 1369.2,440.32 1372.1,402.99 1374.6,416.29 1377.2,335.03 1380,333.97 1381.3,411.27 1382.9,331.47 1383.72,331.33 1385.73,331.74 1389.1,330.48 1392,425.62 1395,330.66 1396.93,329.55 1399.33,329.92 1401.71,329.21 1403,329.37 1404.65,330.32 1407.36,330.39 1410,331.91 1412.2,413.7 1415,330.97 1415.61,330.64 1418,330.26 1418.58,330.7 1422,331.88 1423.81,332.25 1426.56,334.17 1427,334.14 1428.7,333.27 1433,332.53 1433.83,331.84 1436.45,330.75 1437,330.39 1439.32,331.45 1441.71,331.52 1442,331.69 1445,331.79 1448.2,454.28 1452,336.03 1454.69,339.08 1455,339.28 1456.58,339.21 1459.75,338.67 1462.05,338.44 1464.15,339.2 1466.57,338.39 1468,338.87 1468.88,339.32 1472.08,338.85 1474.25,339.06 1475,339.4 1477.15,339.51 1479.22,337.73 1480,337.88 1481.49,338.89 1484.47,339.67 1486.86,338.79 1488.72,339.85 1491.05,338.75 1493.24,338.51 1495,338.68 1496.33,338.55 1498.83,337.55 1500,337.29 1501.36,337.16 1504.48,337.67 1507,336.94 1510.11,335.19 1512.41,335.44 1513,335.12 1515.32,334.98 1517,335.06 1517.66,334.81 1518,334.9 1518.9,390.13 1521.2,434.23 1526.3,332.4 1528.33,331.81 1530.13,331.6 1533.11,330.63 1535.51,330.19 1538.03,329.25 1543.07,328.24 1545.5,327.2 1548.31,326.25 1550.97,326.1 1552.86,325.7 1555.14,324.63 1557,324.41 1557.56,324.56 1559.51,325.46 1561,325.52 1563.7,415.08 1567,325.06 1570.23,323.81 1572.67,323.4 1575,322.84 1577.87,322.77 1580.25,321.71 1583.13,321.77 1585.31,321.13 1587,320.95 1587.46,320.7 1589.55,318.91 1592,317.51 1593.94,317.53 1596.17,317.99 1599.04,316.85 1600.9,316.71 1602.6,412.47 1605.3,315.76 1608.99,314.6 1613,312.71 1614.44,312.52 1616.59,313.23 1621.68,313.57 1622.8,313.16 1624.7,392.37 1626.2,357.21 1628.3,435.02 1634.5,312.23 1637.13,312.36 1639,312.26 1639.1,312.28 1641.8,417.35 1646.3,314.05 1650.44,314.04 1652.29,313.6 1655.17,314.46 1657,313.67 1660.3,438.95 1666.4,316.48 1667.18,316.71 1669.95,318.62 1672.79,319.4 1675.19,319.17 1676.9,320.77 1678.8,435.43 1683.9,318.69 1686.1,318.33 1687.6,446.39 1693.3,312.38 1694.11,312.35 1696.68,311.63 1699.42,312.35 1701.64,311.82 1703.65,310.55 1706,310.43 1711,310.62 1711,313.08 1706,312.95 1703.65,313.03 1701.64,313.91 1699.42,314.27 1696.68,313.77 1694.11,314.27 1693.3,314.29 1687.6,446.86 1686.1,318.38 1683.9,318.69 1678.8,435.43 1676.9,320.77 1675.19,319.17 1672.79,319.4 1669.95,318.62 1667.18,317.27 1666.4,317.11 1660.3,439.87 1657,315.18 1655.17,315.72 1652.29,315.13 1650.44,315.43 1646.3,315.44 1641.8,419.15 1639.1,314.23 1639,314.21 1634.5,314.19 1628.3,437.05 1626.2,359.18 1624.7,394.29 1622.8,314.83 1621.68,315.11 1619.21,315.03 1616.59,314.87 1614.44,314.44 1613,314.73 1608.99,316.44 1605.3,317.62 1602.6,414.4 1600.9,318.74 1599.04,318.95 1596.17,319.82 1593.94,319.57 1592,319.61 1589.55,320.65 1587,322.12 1585.31,322.29 1583.13,322.8 1580.25,322.84 1577.87,323.64 1575,323.77 1570.23,324.57 1567,325.52 1563.7,415.51 1561,326.02 1559.51,326.03 1557,325.45 1555.14,325.7 1552.86,326.55 1550.97,326.93 1548.31,327.17 1543.07,328.83 1538.03,329.79 1535.51,330.57 1533.11,331.04 1530.13,331.91 1528.33,332.18 1526.3,332.73 1521.2,434.23 1518.9,390.13 1518,335.03 1517.66,334.99 1517,335.21 1513,335.4 1512.41,335.61 1510.11,335.44 1507,336.94 1504.48,337.67 1501.36,337.16 1500,337.29 1498.83,337.55 1496.33,338.55 1495,338.68 1493.24,338.51 1491.05,338.75 1488.72,339.85 1486.86,338.79 1484.47,339.67 1481.49,338.89 1480,337.88 1479.22,337.73 1477.15,339.51 1475,339.4 1474.25,339.06 1472.08,338.85 1468.88,339.32 1468,338.87 1466.57,338.39 1464.15,339.2 1462.05,338.44 1459.75,338.67 1456.58,339.21 1455,339.28 1454.69,339.08 1452,336.03 1448.2,454.28 1445,331.79 1442,331.69 1441.71,331.52 1439.32,331.45 1437,330.62 1433.83,331.84 1433,332.53 1428.7,333.27 1427,334.14 1426.56,334.17 1423.81,332.25 1422,331.88 1421.71,331.71 1418.58,330.91 1418,330.61 1415.61,330.88 1415,331.11 1412.2,413.7 1410,331.91 1407.36,330.83 1404.65,330.88 1403,330.28 1401.71,330.21 1399.33,330.78 1396.93,330.61 1395,331.44 1392,426.52 1389.1,331.53 1385.73,332.51 1383.72,332.29 1382.9,332.43 1381.3,411.98 1380,334.44 1377.2,335.44 1374.6,416.56 1372.1,403.29 1369.2,440.49 1365.6,339.75 1364,340.18 1362.86,340.64 1357.32,344 1355.38,344.26 1353.51,344.93 1352,345.1 1349.44,346.65 1347.38,348.19 1345,349.73 1341.33,351.21 1340,352.12 1339.5,352.15 1336.88,351.28 1335,352.06 1334.28,352.61 1331.17,353.24 1328.24,354.34 1327,354.55 1322.98,356.23 1322,356.33 1319.96,356.27 1317.87,358.15 1315.14,357.99 1315,358.09 1313,356.53 1310.6,356.58 1306.62,356.27 1306,356.1 1304.59,356.41 1302.17,358.47 1300,359.64 1299.52,359.82 1296.45,360.37 1293.63,361.94 1290.89,362.83 1288.88,364.17 1288,364.53 1285.98,364.88 1284.12,363.99 1282.03,365.89 1279.53,365.82 1279,365.99 1276,364.55 1275,364.56 1272.96,364.96 1271.13,365.63 1269.26,364.98 1267.19,365.28 1265,364.97 1262.61,365.59 1259.44,366.66 1256.85,366.65 1253.9,367 1251.19,368.98 1250,369.13 1247,367.32 1246.18,367.41 1243.13,368.78 1241.13,370.18 1240,370.04 1238.42,369.53 1235.25,371.12 1233.23,371.9 1230.73,372.39 1227.82,373.28 1224.67,373.02 1221.94,374.64 1220,375.25 1215.27,375.9 1213.18,376.77 1213,376.75 1210.79,374.32 1210,373.89 1208.09,373.67 1205,373.6 1202.77,374.33 1200.39,374.16 1197.27,375.65 1195,375.39 1194.49,374.88 1193,374.17 1192.15,374.21 1189.09,373.89 1186.35,373.83 1185,373.23 1184.37,373.09 1181.38,373.22 1179.15,372.84 1176.94,373.81 1175.12,372.97 1172.86,373.8 1169.83,373.5 1167.31,374.17 1164.14,374.44 1162.16,374.41 1159.09,374.64 1154.32,374.71 1151.91,373.44 1149.68,373.7 1146.85,374.51 1144.78,373.76 1139.74,375.26 1135.11,375.67 1132.42,376.51 1129.52,378.03 1126.9,377.71 1125,378.85 1124.59,378.91 1121.6,377.53 1120,377.71 1119.57,377.93 1117.3,377.97 1114,379.27 1113.22,379.26 1111.06,377.74 1108.89,378.11 1108,377.94 1105.99,376.79 1105,376.04 1103.06,375.6 1100.87,375.9 1100,376.32 1098.72,376.24 1095.75,374.1 1095,373.97 1092.58,374.42 1087.33,376.11 1084.33,376 1082.09,376.85 1081,377.44 1079.7,377.72 1077.72,376.49 1074.78,376.65 1070,376.17 1067.71,376.22 1064.99,377.64 1062.29,377.39 1059.53,377.6 1051.89,379.09 1049.7,380.62 1046.72,381.49 1044.22,381.78 1042,382.96 1039.69,381.71 1037.77,382.16 1035,381.26 1025,384.2 1023.6,383.97 1022.1,409.95 1020.6,382.9 1020,382.77 1018.58,382.75 1016.5,383.25 1015,382.95 1014.68,383.03 1012.87,384.35 1010.61,384.86 1010,385.46 1008.33,385.25 1005.92,383.99 1005,383.77 1001.62,384.38 997.07,385.56 994.21,387.4 991.82,387.24 985.74,390.37 981.23,391.92 979.33,393.08 977,394.09 975,395.39 973.55,395.1 970,394.73 968.55,395.14 965.72,396.23 962.95,396.36 960.87,396.13 959,397.7 956,401.43 952,405.61 950.35,405.13 948.4,405.16 948,404.97 945.2,404.9 943.28,405.96 942,406.32 941.35,406.2 938.26,404.54 937,404.05 933.41,404.93 933,405.2 930,401.63 928.12,401.31 925.96,399.58 925,399.45 923.8,399.47 921.98,399.17 919.71,398.48 918,398.77 917.01,399.37 913.87,400.16 910.78,401.14 909,402.03 907.69,401.52 905,400.22 900,401.94 899.25,402.05 897.13,401.52 893.97,402.88 890.91,402.16 888.46,403.64 883.37,404.49 880.98,403.78 878.21,404.37 875.63,405.42 875,405.45 872.67,404.44 872,404.33 869.74,403.43 867.49,401.49 864.91,400.7 862,399.26 860.01,398.79 857.19,399.42 852.43,397.99 849.64,398 847.8,398.34 844.88,398.65 841.84,398.57 840,397.96 839.36,397.88 836.51,399.19 833,399.43 831.02,397.15 830,396.52 828.84,396.36 826,393.55 825.67,393.44 823.1,394.45 821.13,394.32 818.74,394.56 814.18,396.26 811.77,395.72 806.99,396.12 804.74,397.21 799.62,397.7 796.47,398.47 793,399 790.52,397.23 790,396.73 788.4,396.08 786.28,394.75 784,395.3 783.24,394.81 780.32,391.43 779,389.63 778.05,389.53 775.03,389.65 773,390.84 772.32,390.73 770,388.11 769.57,387.86 767.5,388.64 764.88,387.74 758.99,389.06 756.58,389.4 754.29,388.85 752.35,390.61 752,390.56 749.4,388.88 747.11,388.01 745,387.53 741.75,388.63 740,388.72 739,386.79 735.6,385.78 735,385.94 733.33,386.71 730.78,386.89 728,387.48 727.1,386.93 725.3,438.19 723.5,384.11 723.34,383.97 722,383.57 721.41,383.59 718.59,382.9 715.69,381.71 715,381.65 710.87,382.6 705.66,383.28 703.07,385.64 701.05,384.04 699.19,383.56 697,383.57 693.85,384.64 691.28,385.01 690,385.04 688.41,384.81 686.09,386.36 682.99,386.35 680.93,386.08 676.48,386.67 673.86,386.43 670,387.37 668.43,388.25 666.46,388.62 665,389.5 662,388.61 661.57,388.78 658,389.15 657.38,388.87 655.47,388.9 652,388.28 650.68,388.58 648.4,387.49 646.06,389.21 643,389.12 641.76,389.34 638,390.99 636.07,390.03 634,388.42 633.62,388.42 629.7,389.38 627.76,390.07 623.81,390.98 621.99,391.8 620,392.3 617.61,390.54 614.48,386.8 613,386.5 612.54,386.79 610.4,385.98 608.9,428.2 607.4,386.76 604.81,386.52 601.69,385.52 598.61,386.21 596.1,385.25 586.3,384.19 584,383.33 581.77,383.51 579.15,384.2 576.57,384.34 575,384.56 573.83,384.62 571.64,384.33 568.94,384.61 564.03,384.36 562.06,384.74 559.25,386 555,386.6 554.26,385.97 552,384.52 547.07,383.4 544.99,383.62 542.67,383.68 539.89,383.43 536.77,383.65 532.21,383.34 530.2,382.37 528.22,382.62 525.64,382.65 523.62,382.43 519.25,382.85 516.15,382.92 513.22,382.7 510.38,383.35 508.43,383.21 505.91,383.46 502.77,383.05 500.16,383.44 498.31,383.33 495.38,384.15 493.25,384.1 488.31,384.55 485.32,384.36 483.24,384.5 480.74,385.23 477.98,385.13 475.85,385.87 473.44,385.78 471.61,386.2 470,387.23 469.37,387.49 466.24,386.82 465,386.75 463.53,386.34 461.26,385.45 459,385.09 458.54,385.16 456.56,385.99 453.7,386.27 452,386.15 450.91,385.55 448.85,384.85 446.61,384.68 446,384.45 443.97,384.35 441.48,384.01 439.37,384.34 435.43,383.88 433.44,384.14 430,383.9 424.74,382.93 422,382.8 419.95,383.28 417.81,383.11 415.57,383.7 413.33,383.61 410.25,384 408.23,383.54 406.21,384.25 403.54,383.96 400.71,384.46 398.36,384.15 396.01,384.55 393.77,384.67 390.81,385.51 390,385.56 388,386.44 386,386.17 385,385.85 383.22,385.71 380.5,385.11 377.99,385.26 375,384.82 370.21,385.45 367.86,385.41 365.66,385.94 363.01,386.32 360.75,387.32 356.02,388.16 353.87,388.82 353,388.81 351.94,390.87 351,393.21 349.36,393.93 347,394.73 346,395.29 344.32,394.08 341.55,392.85 341,392.39 340,392.1 338.44,391.41 335,391.14 332.95,391.12 330.26,390.68 327.92,390.78 327,390.48 325.1,390.24 322.5,390.64 320.36,390.71 317.97,391.92 315.61,392.47 315,392.76 312.53,393.48 310.69,393.08 307.61,394.15 304.9,394.29 302.17,394.96 299.85,394.9 294.51,395.4 291.92,396.49 289.03,395.98 287.21,396.68 284.38,396.05 281.68,396.78 276.02,397.44 272.82,397.17 270,397.42 262.75,399.51 260,400.57 257.53,400.95 255.6,402.55 253.64,401.65 244.44,404.12 241.5,404.12 238.48,404.94 236.65,404.81 234.62,405.62 232,405.59 229.99,406.22 227.45,406.03 224.73,406.63 223,406.41 222.19,406.43 219.19,407.62 216.03,408.69 211.42,409.75 210,410.45 207.28,410.75 204.77,409.28 200.82,409.62 200,409.07 198.91,408.96 197.05,410.56 194.83,410.36 193,411.66 191.84,411.65 188.78,410.05 186.73,409.43 185,409.1 182.82,410.26 180,410.64 177,408.36 175.21,408.81 172.74,410.29 170.57,410.54 168.21,411.39 165.36,410.91 162,412.12 160.68,412.73 155.76,413.68 153.6,414.79 153,414.91 150.86,414.15 148.31,412.97 146.05,413.44 144.06,412.02 140,411.13 138.94,411.12 136.69,412.19 134.31,411.68 131.78,412.41 127.47,410.33 125,409.96 124.44,409.12 122.06,406.37 121,404.38 119.15,403.8 116.64,403.26 113.73,403.96 111.67,403.75 109.86,402.97 107.33,403.71 105.13,403.1 103.01,404.22 100.98,402.82 98.4,403.64 95.52,402.83 92.39,403 91.6,402.9 89.8,423.64 88,402.29 87.06,402.17 84.58,402.62 81.83,402.16 78.95,402.36 75.86,402.39 72.09,402.21 70.07,402.59 67.94,402.48 64.98,403.56 62.95,403.01 59.81,403.94 57.18,403.99 54.61,406.05 52,407.34 48,404.84 47.42,404.81 44.89,404.18 42.06,404.62 37.08,404.47 36,404.73 34.2,405.47 31.08,405.19 28.24,406.99 25.09,406.75 23.26,407.18 22,407.81 21.19,408.65 19,410.06 17,409.66 14.88,409.58 12.58,408.86 10.54,408.77 9,408.27 8.13,408.3 6.1,409.57 4.03,409.89 1.81,411.24 0,411.17Z"/>
<path fill="#01579B" d="M0,411.17 1.81,411.24 4.03,409.89 6.1,409.57 8.13,408.3 9,408.27 10.54,408.77 12.58,408.86 14.88,409.58 17,409.66 19,410.06 21.19,408.65 22,407.81 23.26,407.18 25.09,406.75 28.24,406.99 31.08,404.93 34.2,405.47 36,404.46 37.08,404.09 39.02,404.4 42.06,404.62 44.89,404.11 47.42,404.81 48,404.84 52,407.34 54.61,406.05 57.18,403.99 59.81,403.94 62.95,402.64 64.98,403.56 67.94,401.81 70.07,402.03 72.09,401.42 75.86,401.78 78.95,401.76 81.83,401.46 84.58,402.28 87.06,401.55 88,401.78 89.8,423.39 91.6,402.86 92.39,403 95.52,402.79 98.4,403.64 100.98,402.82 103.01,404.22 105.13,403.1 107.33,403.71 109.86,402.97 111.67,403.75 113.73,403.96 116.64,403.26 119.15,403.8 121,404.38 122.06,406.37 124.44,409.12 125,409.96 127.47,410.33 131.78,412.41 134.31,411.68 136.69,412.19 138.94,411.12 140,411.13 144.06,412.02 146.05,413.44 148.31,412.97 150.86,414.15 153,414.91 153.6,414.79 155.76,413.68 160.68,412.73 162,412.12 165.36,410.91 168.21,411.39 170.57,410.54 172.74,410.29 175.21,408.81 177,408.36 180,410.64 182.82,410.26 185,409.1 186.73,409.43 188.78,410.05 191.84,411.65 193,411.66 194.83,410.36 197.05,410.56 198.91,408.96 200,409.07 200.82,409.62 204.77,409.28 207.28,410.75 210,410.45 211.42,409.75 216.03,408.69 219.19,407.62 222.19,406.43 223,406.41 224.73,406.63 227.45,406.03 229.99,406.22 232,405.59 234.62,405.62 236.65,404.81 238.48,404.94 241.5,404.08 244.44,404.12 253.64,401.64 255.6,402.55 257.53,400.95 260.65,400.37 262.75,399.31 265.25,398.37 267.36,397.84 270,396.81 272.82,396.61 276.02,397.31 279.11,396.85 281.68,396.61 284.38,395.59 287.21,396.68 289.03,395.82 290,396.13 291.92,396.49 294.51,395.26 296.68,395.18 299.85,394.82 302.17,394.96 304.9,394.15 307.61,394.09 310.69,392.5 312.53,393.3 315,392.26 315.61,391.8 317.97,391.04 320.36,389.14 322.5,389.01 325.1,388.34 327,388.74 327.92,389.25 330.26,389.07 332.95,389.83 335,389.86 338.44,390.31 341,392.2 341.55,392.85 344.32,394.08 346,395.29 347,394.73 349.36,393.93 351,393.21 351.94,390.87 353,388.69 353.87,388.72 356.02,387.62 357.85,386.97 360.75,386.26 363.01,384.6 365.66,383.99 367.86,383.13 370.21,383.21 372.58,382.6 375,382.21 377.99,382.99 380.5,382.78 383.22,383.83 385,384.08 386,384.64 388,385.13 390,383.66 390.81,383.59 393.77,382.22 395,382.03 396.01,382.04 398.36,381.39 400.71,381.96 403.54,381.14 406.21,381.67 408.23,380.51 410.25,381.3 413.33,380.69 415.57,380.88 417.81,379.91 419.95,380.22 422,379.45 424.74,379.7 430,381.42 433.44,381.9 435.43,381.48 437.25,381.97 439.37,382.36 441.48,381.84 443.97,382.47 446,382.68 446.61,383.08 448.85,383.41 450.91,384.64 452,385.68 453.7,385.9 456.56,385.5 458.54,384.13 459,384.03 461.26,384.68 463.53,386.24 465,386.75 466.24,386.82 469.37,387.49 470,387.23 471.61,386.16 473.44,385.49 475.85,385.7 477.98,384.48 480.74,384.72 483.24,383.55 485.32,383.38 488.31,383.79 493.25,383.15 495.38,383.29 498.31,381.99 500.16,382.23 502.77,381.64 505.91,382.41 508.43,382.06 510.38,382.35 513.22,381.33 516.15,381.79 519.25,381.76 523.62,381.16 525.64,381.6 528.22,381.61 530.2,381.24 532.21,382.83 534.2,382.91 536.77,383.27 539.89,382.84 542.67,383.21 544.99,383.06 547.07,382.64 548,382.87 550.16,383.85 552,384.44 555,386.6 559.25,386 562.06,384.62 564.03,383.94 565,383.91 568.94,384.27 571.64,383.73 573.83,384.18 575,384.06 576.57,383.66 579.15,383.36 581.77,382.14 584,381.79 586.3,383.21 589.1,383.53 596.1,384.81 598.61,386.21 601.69,385.19 604.81,386.52 607.4,386.76 608.9,428.2 610.4,385.97 612.54,386.79 613,386.5 614.48,386.75 617.61,390.54 620,392.3 621.99,391.8 623.81,390.98 627.76,390.07 629.7,389.38 633.62,388.42 634,388.42 636.07,390.03 638,390.99 641.76,389.34 643,389.12 646.06,389.21 648.4,387.49 650.68,388.58 652,388.28 655.47,388.9 657.38,388.87 658,389.15 661.57,388.78 662,388.61 665,389.5 666.46,388.62 668.43,388.25 670,387.37 673.86,386.43 676.48,386.67 680.93,386.08 682.99,386.35 686.09,386.36 688.41,384.81 690,385.04 691.28,385.01 693.85,384.64 697,383.57 699.19,383.56 701.05,384.04 703.07,385.64 705.66,383.28 710.87,382.6 715,381.65 715.69,381.71 718.59,382.9 721.41,383.59 722,383.57 723.34,383.97 723.5,384.11 725.3,438.19 727.1,386.93 728,387.48 730.78,386.89 733.33,386.71 735,385.94 735.6,385.78 739,386.79 740,388.72 741.75,388.63 745,387.53 747.11,388.01 749.4,388.88 752,390.56 752.35,390.61 754.29,388.85 756.58,389.4 758.99,389.06 764.88,387.74 767.5,388.64 769.57,387.86 770,388.11 772.32,390.73 773,390.84 775.03,389.65 778.05,389.39 779,389.55 780.32,391.43 783.24,394.81 784,395.3 786.28,394.75 788.4,396.08 790,396.73 790.52,397.23 793,399 796.47,398.47 799.62,397.7 804.74,397.21 806.99,396.12 811.77,395.72 814.18,396.26 818.74,394.56 821.13,394.32 823.1,394.45 825.67,393.44 826,393.55 828.84,396.36 830,396.52 831.02,397.15 833,399.43 836.51,399.19 839.36,397.88 840,397.96 841.84,398.57 844.88,398.65 847.8,398.34 849.64,398 852.43,397.99 857.19,399.42 860.01,398.79 862,399.26 864.91,400.7 867.49,401.49 869.74,403.43 872,404.33 872.67,404.44 875,405.45 875.63,405.42 878.21,404.37 880.98,403.78 883.37,404.49 888.46,403.64 890.91,402.16 893.97,402.88 897.13,401.52 899.25,402.05 900,401.94 905,400.22 907.69,401.52 909,402.03 910.78,401.14 913.87,400.16 917.01,399.37 918,398.77 919.71,398.48 921.98,399.17 923.8,399.47 925,399.45 925.96,399.58 928.12,401.31 930,401.63 933,405.2 933.41,404.93 937,404.05 938.26,404.54 941.35,406.2 942,406.32 943.28,405.96 945.2,404.9 948,404.97 948.4,405.16 950.35,405.13 952,405.61 956,401.43 959,397.7 960.87,396.13 962.95,396.36 965.72,396.23 968.55,395.14 970,394.73 973.55,395.1 975,395.39 977,394.09 979.33,393.08 981.23,391.92 985.74,390.37 988.71,388.86 991.82,387.07 994.21,387.4 997.07,385.52 1005,383.41 1008.33,385.25 1010,385.46 1010.61,384.86 1012.87,384.35 1014.68,382.95 1015,382.84 1016.5,383.25 1018.58,382.75 1020,382.77 1020.6,382.9 1022.1,409.95 1023.6,383.97 1025,384.2 1035,381.25 1037.77,382.16 1039.69,381.71 1042,382.96 1044.22,381.78 1046.72,381.49 1049.7,380.62 1051.89,379 1053.83,378.74 1059.53,377.55 1062.29,377.39 1064.99,377.64 1067.71,376.12 1070,376.15 1074.78,376.65 1077.72,376.49 1079.7,377.72 1081,377.44 1082.09,376.85 1084.33,376 1087.33,376.11 1095,373.57 1095.75,373.79 1098.72,376.24 1100,376.32 1100.87,375.9 1103.06,375.52 1105,375.93 1105.99,376.79 1108,377.94 1108.89,378.11 1111.06,377.74 1113.22,379.26 1114,379.27 1117.3,377.97 1119.57,377.93 1120,377.7 1121.6,377.49 1124.59,378.91 1125,378.85 1126.9,377.71 1129.52,378.03 1132.42,376.51 1135.11,375.67 1139.74,375.26 1144.78,373.75 1146.85,374.51 1149.68,373.7 1151.91,373.44 1154.32,374.71 1159.09,374.64 1162.16,374.41 1164.14,374.44 1167.31,374.17 1169.83,373.5 1172.86,373.8 1175.12,372.97 1176.94,373.81 1179.15,372.84 1181.38,373.22 1184.37,373.09 1185,373.23 1186.35,373.83 1189.09,373.89 1192.15,374.21 1193,374.17 1194.49,374.88 1195,375.39 1197.27,375.65 1200.39,374.14 1202.77,374.33 1205.15,373.36 1208.09,373.37 1210,373.64 1210.79,374.32 1213,376.75 1213.18,376.77 1215.27,375.9 1220,375.25 1221.94,374.64 1224.67,373.01 1227.82,373.28 1230.73,372.39 1233.23,371.9 1235.25,371.12 1238.42,369.53 1240,370.04 1241.13,370.18 1243.13,368.78 1246.18,367.2 1247,367.14 1248.28,368.12 1250,369.13 1251.19,368.98 1253.9,367 1256.85,366.65 1259.44,366.66 1262.61,365.59 1265,364.97 1267.19,365.28 1269.26,364.98 1271.13,365.63 1272.96,364.96 1275,364.56 1276,364.55 1279,365.99 1279.53,365.82 1282.03,365.89 1284.12,363.99 1285.98,364.88 1288,364.53 1288.88,364.17 1290.89,362.83 1293.63,361.94 1296.45,360.37 1299.52,359.82 1300,359.64 1302.17,358.47 1304.59,356.33 1306,356.06 1306.62,356.27 1308.54,356.44 1310.6,356.58 1313,356.53 1315,358.09 1315.14,357.99 1317.87,358.15 1319.96,356.27 1322,356.33 1322.98,356.23 1327,354.55 1328.24,354.34 1331.17,353.24 1334.28,352.61 1335,352.06 1336.88,351.28 1339.5,352.15 1340,352.12 1341.33,351.21 1345,349.73 1347.38,348.19 1349.44,346.65 1352,345.1 1353.51,344.93 1355.38,344.26 1357.32,344 1362.86,340.52 1364,339.97 1365.6,339.58 1369.2,440.24 1372.1,402.84 1374.6,416.15 1377.2,334.82 1380,333.74 1381.3,410.9 1382.9,330.97 1383.72,330.83 1385.73,331.34 1389.1,329.94 1392,425.16 1395,330.25 1396.93,328.99 1399.33,329.47 1401.71,328.69 1403,328.9 1404.65,330.04 1407.36,330.16 1410,331.91 1412.2,413.7 1415,330.89 1415.61,330.51 1418,330.08 1418.58,330.59 1422,331.88 1423.81,332.25 1426.56,334.17 1427,334.14 1428.7,333.27 1433,332.53 1433.83,331.84 1436.45,330.69 1437,330.28 1439.32,331.45 1441.71,331.52 1442,331.69 1445,331.79 1448.2,454.28 1452,336.03 1454.69,339.08 1455,339.28 1456.58,339.21 1459.75,338.67 1462.05,338.44 1464.15,339.2 1466.57,338.39 1468,338.87 1468.88,339.32 1472.08,338.85 1474.25,339.06 1475,339.4 1477.15,339.51 1479.22,337.73 1480,337.88 1481.49,338.89 1484.47,339.67 1486.86,338.79 1488.72,339.85 1491.05,338.75 1493.24,338.51 1495,338.68 1496.33,338.55 1498.83,337.55 1500,337.29 1501.36,337.16 1504.48,337.67 1507,336.94 1510.11,335.06 1512.41,335.35 1513,334.98 1515.32,334.83 1517,334.98 1517.66,334.71 1518,334.83 1518.9,390.13 1521.2,434.23 1526.3,332.23 1528.33,331.62 1530.13,331.44 1533.11,330.42 1535.51,329.99 1538.03,328.97 1543.07,327.94 1545.5,326.8 1548.31,325.76 1550.97,325.67 1552.86,325.26 1555.14,324.08 1557,323.88 1557.56,324.06 1559.51,325.17 1561,325.26 1563.7,414.85 1567,324.81 1570.23,323.41 1572.67,322.97 1575,322.36 1577.87,322.32 1580.25,321.12 1583.13,321.24 1585.31,320.52 1587,320.34 1587.46,320.05 1589.55,318.01 1592,316.42 1593.94,316.47 1596.17,317.04 1599.04,315.75 1600.9,315.66 1602.6,411.47 1605.3,314.79 1608.99,313.64 1613,311.66 1614.44,311.51 1616.59,312.37 1619.21,312.63 1621.68,312.77 1622.8,312.29 1624.7,391.38 1626.2,356.19 1628.3,433.97 1634.5,311.21 1637.13,311.36 1639,311.24 1639.1,311.27 1641.8,416.42 1646.3,313.32 1650.44,313.32 1652.29,312.8 1655.17,313.8 1657,312.88 1660.3,438.47 1666.4,316.15 1667.18,316.42 1669.95,318.62 1672.79,319.4 1675.19,319.17 1676.9,320.77 1678.8,435.43 1683.9,318.69 1685.24,318.42 1686,318.41 1686.1,318.31 1687.6,446.15 1693.3,311.38 1694.11,311.35 1696.68,310.51 1699.42,311.35 1701.64,310.73 1703.65,309.25 1706,309.11 1709.19,309.17 1711,309.34 1711,310.62 1706,310.43 1703.65,310.55 1701.64,311.82 1699.42,312.35 1696.68,311.63 1694.11,312.35 1693.3,312.38 1687.6,446.39 1686.1,318.33 1683.9,318.69 1678.8,435.43 1676.9,320.77 1675.19,319.17 1672.79,319.4 1669.95,318.62 1667.18,316.71 1666.4,316.48 1660.3,438.95 1657,313.67 1655.17,314.46 1652.29,313.6 1650.44,314.04 1646.3,314.05 1641.8,417.35 1639.1,312.28 1639,312.26 1637.13,312.36 1634.5,312.23 1628.3,435.02 1626.2,357.21 1624.7,392.37 1622.8,313.16 1621.68,313.57 1616.59,313.23 1614.44,312.52 1613,312.71 1608.99,314.6 1605.3,315.76 1602.6,412.47 1600.9,316.71 1599.04,316.85 1596.17,317.99 1593.94,317.53 1592,317.51 1589.55,318.91 1587.46,320.7 1587,320.95 1585.31,321.13 1583.13,321.77 1580.25,321.71 1577.87,322.77 1575,322.84 1572.67,323.4 1570.23,323.81 1567,325.06 1563.7,415.08 1561,325.52 1559.51,325.46 1557.56,324.56 1557,324.41 1555.14,324.63 1552.86,325.7 1550.97,326.1 1548.31,326.25 1545.5,327.2 1543.07,328.24 1538.03,329.25 1535.51,330.19 1533.11,330.63 1530.13,331.6 1528.33,331.81 1526.3,332.4 1521.2,434.23 1518.9,390.13 1518,334.9 1517.66,334.81 1517,335.06 1515.32,334.98 1513,335.12 1512.41,335.44 1510.11,335.19 1507,336.94 1504.48,337.67 1501.36,337.16 1500,337.29 1498.83,337.55 1496.33,338.55 1495,338.68 1493.24,338.51 1491.05,338.75 1488.72,339.85 1486.86,338.79 1484.47,339.67 1481.49,338.89 1480,337.88 1479.22,337.73 1477.15,339.51 1475,339.4 1474.25,339.06 1472.08,338.85 1468.88,339.32 1468,338.87 1466.57,338.39 1464.15,339.2 1462.05,338.44 1459.75,338.67 1456.58,339.21 1455,339.28 1454.69,339.08 1452,336.03 1448.2,454.28 1445,331.79 1442,331.69 1441.71,331.52 1439.32,331.45 1437,330.39 1436.45,330.75 1433.83,331.84 1433,332.53 1428.7,333.27 1427,334.14 1426.56,334.17 1423.81,332.25 1422,331.88 1418.58,330.7 1418,330.26 1415.61,330.64 1415,330.97 1412.2,413.7 1410,331.91 1407.36,330.39 1404.65,330.32 1403,329.37 1401.71,329.21 1399.33,329.92 1396.93,329.55 1395,330.66 1392,425.62 1389.1,330.48 1385.73,331.74 1383.72,331.33 1382.9,331.47 1381.3,411.27 1380,333.97 1377.2,335.03 1374.6,416.29 1372.1,402.99 1369.2,440.32 1365.6,339.64 1364,340.04 1362.86,340.56 1357.32,344 1355.38,344.26 1353.51,344.93 1352,345.1 1349.44,346.65 1347.38,348.19 1345,349.73 1341.33,351.21 1340,352.12 1339.5,352.15 1336.88,351.28 1335,352.06 1334.28,352.61 1331.17,353.24 1328.24,354.34 1327,354.55 1322.98,356.23 1322,356.33 1319.96,356.27 1317.87,358.15 1315.14,357.99 1315,358.09 1313,356.53 1310.6,356.58 1306.62,356.27 1306,356.07 1304.59,356.36 1302.17,358.47 1300,359.64 1299.52,359.82 1296.45,360.37 1293.63,361.94 1290.89,362.83 1288.88,364.17 1288,364.53 1285.98,364.88 1284.12,363.99 1282.03,365.89 1279.53,365.82 1279,365.99 1276,364.55 1275,364.56 1272.96,364.96 1271.13,365.63 1269.26,364.98 1267.19,365.28 1265,364.97 1262.61,365.59 1259.44,366.66 1256.85,366.65 1253.9,367 1251.19,368.98 1250,369.13 1248.28,368.12 1247,367.2 1246.18,367.27 1243.13,368.78 1241.13,370.18 1240,370.04 1238.42,369.53 1235.25,371.12 1233.23,371.9 1230.73,372.39 1227.82,373.28 1224.67,373.02 1221.94,374.64 1220,375.25 1215.27,375.9 1213.18,376.77 1213,376.75 1210.79,374.32 1210,373.73 1208.09,373.47 1205.15,373.44 1202.77,374.33 1200.39,374.15 1197.27,375.65 1195,375.39 1194.49,374.88 1193,374.17 1192.15,374.21 1189.09,373.89 1186.35,373.83 1185,373.23 1184.37,373.09 1181.38,373.22 1179.15,372.84 1176.94,373.81 1175.12,372.97 1172.86,373.8 1169.83,373.5 1167.31,374.17 1164.14,374.44 1162.16,374.41 1159.09,374.64 1154.32,374.71 1151.91,373.44 1149.68,373.7 1146.85,374.51 1144.78,373.75 1139.74,375.26 1135.11,375.67 1132.42,376.51 1129.52,378.03 1126.9,377.71 1125,378.85 1124.59,378.91 1121.6,377.5 1120,377.7 1119.57,377.93 1117.3,377.97 1114,379.27 1113.22,379.26 1111.06,377.74 1108.89,378.11 1108,377.94 1105.99,376.79 1105,375.97 1103.06,375.55 1100.87,375.9 1100,376.32 1098.72,376.24 1095.75,373.9 1095,373.71 1087.33,376.11 1084.33,376 1082.09,376.85 1081,377.44 1079.7,377.72 1077.72,376.49 1074.78,376.65 1070,376.16 1067.71,376.15 1064.99,377.64 1062.29,377.39 1059.53,377.56 1051.89,379.03 1049.7,380.62 1046.72,381.49 1044.22,381.78 1042,382.96 1039.69,381.71 1037.77,382.16 1035,381.25 1025,384.2 1023.6,383.97 1022.1,409.95 1020.6,382.9 1020,382.77 1018.58,382.75 1016.5,383.25 1015,382.88 1014.68,382.98 1012.87,384.35 1010.61,384.86 1010,385.46 1008.33,385.25 1005.92,383.9 1005,383.54 1001.62,384.29 997.07,385.53 994.21,387.4 991.82,387.13 985.74,390.37 981.23,391.92 979.33,393.08 977,394.09 975,395.39 973.55,395.1 970,394.73 968.55,395.14 965.72,396.23 962.95,396.36 960.87,396.13 959,397.7 956,401.43 952,405.61 950.35,405.13 948.4,405.16 948,404.97 945.2,404.9 943.28,405.96 942,406.32 941.35,406.2 938.26,404.54 937,404.05 933.41,404.93 933,405.2 930,401.63 928.12,401.31 925.96,399.58 925,399.45 923.8,399.47 921.98,399.17 919.71,398.48 918,398.77 917.01,399.37 913.87,400.16 910.78,401.14 909,402.03 907.69,401.52 905,400.22 900,401.94 899.25,402.05 897.13,401.52 893.97,402.88 890.91,402.16 888.46,403.64 883.37,404.49 880.98,403.78 878.21,404.37 875.63,405.42 875,405.45 872.67,404.44 872,404.33 869.74,403.43 867.49,401.49 864.91,400.7 862,399.26 860.01,398.79 857.19,399.42 852.43,397.99 849.64,398 847.8,398.34 844.88,398.65 841.84,398.57 840,397.96 839.36,397.88 836.51,399.19 833,399.43 831.02,397.15 830,396.52 828.84,396.36 826,393.55 825.67,393.44 823.1,394.45 821.13,394.32 818.74,394.56 814.18,396.26 811.77,395.72 806.99,396.12 804.74,397.21 799.62,397.7 796.47,398.47 793,399 790.52,397.23 790,396.73 788.4,396.08 786.28,394.75 784,395.3 783.24,394.81 780.32,391.43 779,389.58 778.05,389.44 775.03,389.65 773,390.84 772.32,390.73 770,388.11 769.57,387.86 767.5,388.64 764.88,387.74 758.99,389.06 756.58,389.4 754.29,388.85 752.35,390.61 752,390.56 749.4,388.88 747.11,388.01 745,387.53 741.75,388.63 740,388.72 739,386.79 735.6,385.78 735,385.94 733.33,386.71 730.78,386.89 728,387.48 727.1,386.93 725.3,438.19 723.5,384.11 723.34,383.97 722,383.57 721.41,383.59 718.59,382.9 715.69,381.71 715,381.65 710.87,382.6 705.66,383.28 703.07,385.64 701.05,384.04 699.19,383.56 697,383.57 693.85,384.64 691.28,385.01 690,385.04 688.41,384.81 686.09,386.36 682.99,386.35 680.93,386.08 676.48,386.67 673.86,386.43 670,387.37 668.43,388.25 666.46,388.62 665,389.5 662,388.61 661.57,388.78 658,389.15 657.38,388.87 655.47,388.9 652,388.28 650.68,388.58 648.4,387.49 646.06,389.21 643,389.12 641.76,389.34 638,390.99 636.07,390.03 634,388.42 633.62,388.42 629.7,389.38 627.76,390.07 623.81,390.98 621.99,391.8 620,392.3 617.61,390.54 614.48,386.77 613,386.5 612.54,386.79 610.4,385.97 608.9,428.2 607.4,386.76 604.81,386.52 601.69,385.31 598.61,386.21 596.1,384.96 589.1,383.84 586.3,383.55 584,382.32 581.77,382.61 579.15,383.65 576.57,383.89 575,384.23 573.83,384.33 571.64,383.94 568.94,384.39 564.03,384.08 562.06,384.66 559.25,386 555,386.6 554.26,385.97 552,384.47 550.16,383.95 548,383.1 547.07,382.9 544.99,383.25 542.67,383.37 539.89,383.04 536.77,383.4 534.2,383.08 532.21,383 530.2,381.62 528.22,381.96 525.64,381.96 523.62,381.6 519.25,382.14 516.15,382.18 513.22,381.8 510.38,382.69 508.43,382.45 505.91,382.77 502.77,382.12 500.16,382.65 498.31,382.45 495.38,383.58 493.25,383.48 488.31,384.05 485.32,383.71 483.24,383.88 480.74,384.89 477.98,384.7 475.85,385.76 473.44,385.59 471.61,386.17 470,387.23 469.37,387.49 466.24,386.82 465,386.75 463.53,386.27 461.26,384.95 459,384.39 458.54,384.48 456.56,385.67 453.7,386.03 452,385.84 450.91,384.96 448.85,383.9 446.61,383.63 446,383.29 443.97,383.11 441.48,382.58 439.37,383.04 435.43,382.3 433.44,382.67 430,382.27 424.74,380.81 422,380.6 419.95,381.27 417.81,381.01 415.57,381.85 413.33,381.69 410.25,382.22 408.23,381.55 406.21,382.55 403.54,382.11 400.71,382.82 398.36,382.34 396.01,382.9 393.77,383.06 390.81,384.25 390,384.31 388,385.58 386,385.16 385,384.68 383.22,384.48 380.5,383.57 377.99,383.77 375,383.1 372.58,383.44 370.21,383.98 367.86,383.91 365.66,384.65 363.01,385.19 360.75,386.62 357.85,387.24 356.02,387.8 353.87,388.76 353,388.73 351.94,390.87 351,393.21 349.36,393.93 347,394.73 346,395.29 344.32,394.08 341.55,392.85 341,392.27 338.44,390.68 335,390.3 332.95,390.27 330.26,389.62 327.92,389.77 327,389.33 325.1,388.99 322.5,389.56 320.36,389.68 317.97,391.34 315.61,392.03 315,392.43 312.53,393.36 310.69,392.7 307.61,394.11 304.9,394.2 302.17,394.96 299.85,394.85 296.68,395.21 294.51,395.31 291.92,396.49 289.03,395.88 287.21,396.68 284.38,395.75 281.68,396.67 276.02,397.36 272.82,396.8 270,397.02 267.36,397.98 265.25,398.49 262.75,399.38 260.65,400.37 257.53,400.95 255.6,402.55 253.64,401.64 244.44,404.12 241.5,404.09 238.48,404.94 236.65,404.81 234.62,405.62 232,405.59 229.99,406.22 227.45,406.03 224.73,406.63 223,406.41 222.19,406.43 219.19,407.62 216.03,408.69 211.42,409.75 210,410.45 207.28,410.75 204.77,409.28 200.82,409.62 200,409.07 198.91,408.96 197.05,410.56 194.83,410.36 193,411.66 191.84,411.65 188.78,410.05 186.73,409.43 185,409.1 182.82,410.26 180,410.64 177,408.36 175.21,408.81 172.74,410.29 170.57,410.54 168.21,411.39 165.36,410.91 162,412.12 160.68,412.73 155.76,413.68 153.6,414.79 153,414.91 150.86,414.15 148.31,412.97 146.05,413.44 144.06,412.02 140,411.13 138.94,411.12 136.69,412.19 134.31,411.68 131.78,412.41 127.47,410.33 125,409.96 124.44,409.12 122.06,406.37 121,404.38 119.15,403.8 116.64,403.26 113.73,403.96 111.67,403.75 109.86,402.97 107.33,403.71 105.13,403.1 103.01,404.22 100.98,402.82 98.4,403.64 95.52,402.81 92.39,403 91.6,402.87 89.8,423.48 88,401.95 87.06,401.76 84.58,402.4 81.83,401.7 78.95,401.97 75.86,401.99 72.09,401.69 70.07,402.22 67.94,402.04 64.98,403.56 62.95,402.76 59.81,403.94 57.18,403.99 54.61,406.05 52,407.34 48,404.84 47.42,404.81 44.89,404.14 42.06,404.62 39.02,404.46 37.08,404.22 36,404.55 34.2,405.47 31.08,405.02 28.24,406.99 25.09,406.75 23.26,407.18 22,407.81 21.19,408.65 19,410.06 17,409.66 14.88,409.58 12.58,408.86 10.54,408.77 9,408.27 8.13,408.3 6.1,409.57 4.03,409.89 1.81,411.24 0,411.17Z"/>
<path fill="#006064" d="M0,411.17 1.81,411.24 4.03,409.89 6.1,409.57 8.13,408.3 9,408.27 10.54,408.77 12.58,408.86 14.88,409.58 17,409.66 19,410.06 21.19,408.65 22,407.81 23.26,407.18 25.09,406.75 28.24,406.99 31.08,404.89 34.2,405.47 36,404.42 37.08,404.04 39.02,404.38 42.06,404.62 44.89,404.1 47.42,404.81 48,404.84 52,407.34 54.61,406.05 57.18,403.99 59.81,403.94 62.95,402.59 64.98,403.56 67.94,401.72 70.07,401.95 72.09,401.31 73.95,401.59 75.86,401.7 78.95,401.68 81.83,401.37 84.58,402.24 87.06,401.47 88,401.71 89.8,423.36 91.6,402.85 92.39,403 95.52,402.79 98.4,403.64 100.98,402.82 103.01,404.22 105.13,403.1 107.33,403.71 109.86,402.97 111.67,403.75 113.73,403.96 116.64,403.26 119.15,403.8 121,404.38 122.06,406.37 124.44,409.12 125,409.96 127.47,410.33 131.78,412.41 134.31,411.68 136.69,412.19 138.94,411.12 140,411.13 144.06,412.02 146.05,413.44 148.31,412.97 150.86,414.15 153,414.91 153.6,414.79 155.76,413.68 160.68,412.73 162,412.12 165.36,410.91 168.21,411.39 170.57,410.54 172.74,410.29 175.21,408.81 177,408.36 180,410.64 182.82,410.26 185,409.1 186.73,409.43 188.78,410.05 191.84,411.65 193,411.66 194.83,410.36 197.05,410.56 198.91,408.96 200,409.07 200.82,409.62 204.77,409.28 207.28,410.75 210,410.45 211.42,409.75 216.03,408.69 219.19,407.62 222.19,406.43 223,406.41 224.73,406.63 227.45,406.03 229.99,406.22 232,405.59 234.62,405.62 236.65,404.81 238.48,404.94 241.5,404.07 244.44,404.12 253.64,401.63 255.6,402.55 257.53,400.95 260.65,400.37 262.75,399.29 265.25,398.32 267.36,397.78 270,396.73 272.82,396.54 276.02,397.29 279.11,396.82 281.68,396.59 284.38,395.53 287.21,396.68 289.03,395.8 290,396.13 291.92,396.49 294.51,395.24 296.68,395.17 299.85,394.81 302.17,394.96 304.9,394.13 307.61,394.08 310.69,392.42 312.53,393.27 315,392.19 315.61,391.71 317.97,390.92 320.36,388.93 322.5,388.79 325.1,388.09 327,388.51 327.92,389.05 330.26,388.86 332.95,389.66 335,389.69 338.44,390.16 341,392.18 341.55,392.85 344.32,394.08 346,395.29 347,394.73 349.36,393.93 351,393.21 351.94,390.87 353,388.68 353.87,388.71 356.02,387.55 357.85,386.87 360.75,386.12 363.01,384.38 365.66,383.73 367.86,382.83 370.21,382.92 372.58,382.27 375,381.87 377.99,382.69 380.5,382.47 383.22,383.59 385,383.85 386,384.44 388,384.96 390,383.41 390.81,383.34 393.77,381.9 395,381.7 396.01,381.71 398.36,381.03 400.71,381.63 403.54,380.77 406.21,381.33 408.23,380.11 410.25,380.95 413.33,380.31 415.57,380.51 417.81,379.49 419.95,379.82 422,379.01 424.74,379.28 430,381.09 433.44,381.6 435.43,381.17 437.25,381.69 439.37,382.09 441.48,381.55 443.97,382.22 446,382.45 446.61,382.87 448.85,383.22 450.91,384.52 452,385.62 453.7,385.86 456.56,385.44 458.54,383.99 459,383.89 461.26,384.58 463.53,386.22 465,386.75 466.24,386.82 469.37,387.49 470,387.23 471.61,386.15 473.44,385.46 475.85,385.68 477.98,384.4 480.74,384.65 483.24,383.43 485.32,383.25 488.31,383.68 493.25,383.03 495.38,383.18 498.31,381.81 500.16,382.07 502.77,381.45 505.91,382.28 508.43,381.91 510.38,382.22 513.22,381.16 516.15,381.64 519.25,381.62 523.62,381 525.64,381.46 528.22,381.48 530.2,381.09 532.21,382.77 534.2,382.84 536.77,383.22 539.89,382.76 542.67,383.15 544.99,382.98 547.07,382.54 548,382.78 550.16,383.81 552,384.44 555,386.6 559.25,386 562.06,384.61 564.03,383.88 565,383.85 568.94,384.22 571.64,383.66 573.83,384.13 575,383.99 576.57,383.57 579.15,383.25 581.77,381.96 584,381.59 586.3,383.08 589.1,383.42 593.48,384.34 596.1,384.76 598.61,386.21 601.69,385.15 604.81,386.52 607.4,386.76 608.9,428.2 610.4,385.96 612.54,386.79 613,386.5 614.48,386.74 617.61,390.54 620,392.3 621.99,391.8 623.81,390.98 627.76,390.07 629.7,389.38 633.62,388.42 634,388.42 636.07,390.03 638,390.99 641.76,389.34 643,389.12 646.06,389.21 648.4,387.49 650.68,388.58 652,388.28 655.47,388.9 657.38,388.87 658,389.15 661.57,388.78 662,388.61 665,389.5 666.46,388.62 668.43,388.25 670,387.37 673.86,386.43 676.48,386.67 680.93,386.08 682.99,386.35 686.09,386.36 688.41,384.81 690,385.04 691.28,385.01 693.85,384.64 697,383.57 699.19,383.56 701.05,384.04 703.07,385.64 705.66,383.28 710.87,382.6 715,381.65 715.69,381.71 718.59,382.9 721.41,383.59 722,383.57 723.34,383.97 723.5,384.11 725.3,438.19 727.1,386.93 728,387.48 730.78,386.89 733.33,386.71 735,385.94 735.6,385.78 739,386.79 740,388.72 741.75,388.63 745,387.53 747.11,388.01 749.4,388.88 752,390.56 752.35,390.61 754.29,388.85 756.58,389.4 758.99,389.06 764.88,387.74 767.5,388.64 769.57,387.86 770,388.11 772.32,390.73 773,390.84 775.03,389.65 778.05,389.38 779,389.54 780.32,391.43 783.24,394.81 784,395.3 786.28,394.75 788.4,396.08 790,396.73 790.52,397.23 793,399 796.47,398.47 799.62,397.7 804.74,397.21 806.99,396.12 811.77,395.72 814.18,396.26 818.74,394.56 821.13,394.32 823.1,394.45 825.67,393.44 826,393.55 828.84,396.36 830,396.52 831.02,397.15 833,399.43 836.51,399.19 839.36,397.88 840,397.96 841.84,398.57 844.88,398.65 847.8,398.34 849.64,398 852.43,397.99 857.19,399.42 860.01,398.79 862,399.26 864.91,400.7 867.49,401.49 869.74,403.43 872,404.33 872.67,404.44 875,405.45 875.63,405.42 878.21,404.37 880.98,403.78 883.37,404.49 888.46,403.64 890.91,402.16 893.97,402.88 897.13,401.52 899.25,402.05 900,401.94 905,400.22 907.69,401.52 909,402.03 910.78,401.14 913.87,400.16 917.01,399.37 918,398.77 919.71,398.48 921.98,399.17 923.8,399.47 925,399.45 925.96,399.58 928.12,401.31 930,401.63 933,405.2 933.41,404.93 937,404.05 938.26,404.54 941.35,406.2 942,406.32 943.28,405.96 945.2,404.9 948,404.97 948.4,405.16 950.35,405.13 952,405.61 956,401.43 959,397.7 960.87,396.13 962.95,396.36 965.72,396.23 968.55,395.14 970,394.73 973.55,395.1 975,395.39 977,394.09 979.33,393.08 981.23,391.92 985.74,390.37 988.71,388.86 991.82,387.05 994.21,387.4 997.07,385.51 1005,383.37 1008.33,385.25 1010,385.46 1010.61,384.86 1012.87,384.35 1014.68,382.94 1015,382.83 1016.5,383.25 1018.58,382.75 1020,382.77 1020.6,382.9 1022.1,409.95 1023.6,383.97 1025,384.2 1035,381.24 1037.77,382.16 1039.69,381.71 1042,382.96 1044.22,381.78 1046.72,381.49 1049.7,380.62 1051.89,378.99 1053.83,378.73 1059.53,377.54 1062.29,377.39 1064.99,377.64 1067.71,376.1 1070,376.14 1074.78,376.65 1077.72,376.49 1079.7,377.72 1081,377.44 1082.09,376.85 1084.33,376 1087.33,376.11 1095,373.52 1095.75,373.75 1098.72,376.24 1100,376.32 1100.87,375.9 1103.06,375.51 1105,375.92 1105.99,376.79 1108,377.94 1108.89,378.11 1111.06,377.74 1113.22,379.26 1114,379.27 1117.3,377.97 1119.57,377.93 1120,377.7 1121.6,377.48 1124.59,378.91 1125,378.85 1126.9,377.71 1129.52,378.03 1132.42,376.51 1135.11,375.67 1139.74,375.26 1144.78,373.75 1146.85,374.51 1149.68,373.7 1151.91,373.44 1154.32,374.71 1159.09,374.64 1162.16,374.41 1164.14,374.44 1167.31,374.17 1169.83,373.5 1172.86,373.8 1175.12,372.97 1176.94,373.81 1179.15,372.84 1181.38,373.22 1184.37,373.09 1185,373.23 1186.35,373.83 1189.09,373.89 1192.15,374.21 1193,374.17 1194.49,374.88 1195,375.39 1197.27,375.65 1200.39,374.14 1202.77,374.33 1205.15,373.33 1208.09,373.33 1210,373.61 1213,376.75 1213.18,376.77 1215.27,375.9 1220,375.25 1221.94,374.64 1224.67,373.01 1227.82,373.28 1230.73,372.39 1233.23,371.9 1235.25,371.12 1238.42,369.53 1240,370.04 1241.13,370.18 1243.13,368.78 1246.18,367.17 1247,367.12 1248.28,368.12 1250,369.13 1251.19,368.98 1253.9,367 1256.85,366.65 1259.44,366.66 1262.61,365.59 1265,364.97 1267.19,365.28 1269.26,364.98 1271.13,365.63 1272.96,364.96 1275,364.56 1276,364.55 1279,365.99 1279.53,365.82 1282.03,365.89 1284.12,363.99 1285.98,364.88 1288,364.53 1288.88,364.17 1290.89,362.83 1293.63,361.94 1296.45,360.37 1299.52,359.82 1300,359.64 1302.17,358.47 1304.59,356.32 1306,356.06 1306.62,356.27 1308.54,356.44 1310.6,356.58 1313,356.53 1315,358.09 1315.14,357.99 1317.87,358.15 1319.96,356.27 1322,356.33 1322.98,356.23 1327,354.55 1328.24,354.34 1331.17,353.24 1334.28,352.61 1335,352.06 1336.88,351.28 1339.5,352.15 1340,352.12 1341.33,351.21 1345,349.73 1347.38,348.19 1349.44,346.65 1352,345.1 1353.51,344.93 1355.38,344.26 1357.32,344 1362.86,340.51 1364,339.94 1365.6,339.56 1369.2,440.2 1372.1,402.78 1374.6,416.1 1377.2,334.74 1380,333.64 1381.3,410.76 1382.9,330.78 1383.72,330.63 1385.73,331.19 1389.1,329.73 1392,424.98 1395,330.1 1396.93,328.78 1399.33,329.3 1401.71,328.49 1403,328.72 1404.65,329.93 1407.36,330.07 1410,331.91 1412.2,413.7 1415,330.86 1415.61,330.46 1418,330.01 1418.58,330.55 1422,331.88 1423.81,332.25 1426.56,334.17 1427,334.14 1428.7,333.27 1433,332.53 1433.83,331.84 1436.45,330.67 1437,330.23 1439.32,331.45 1441.71,331.52 1442,331.69 1445,331.79 1448.2,454.28 1452,336.03 1454.69,339.08 1455,339.28 1456.58,339.21 1459.75,338.67 1462.05,338.44 1464.15,339.2 1466.57,338.39 1468,338.87 1468.88,339.32 1472.08,338.85 1474.25,339.06 1475,339.4 1477.15,339.51 1479.22,337.73 1480,337.88 1481.49,338.89 1484.47,339.67 1486.86,338.79 1488.72,339.85 1491.05,338.75 1493.24,338.51 1495,338.68 1496.33,338.55 1498.83,337.55 1500,337.29 1501.36,337.16 1504.48,337.67 1507,336.94 1510.11,335.01 1512.41,335.31 1513,334.92 1515.32,334.77 1517,334.95 1517.66,334.68 1518,334.8 1518.9,390.13 1521.2,434.23 1526.3,332.17 1528.33,331.54 1530.13,331.38 1533.11,330.34 1535.51,329.91 1538.03,328.86 1543.07,327.82 1545.5,326.64 1548.31,325.58 1550.97,325.51 1552.86,325.09 1555.14,323.87 1557,323.67 1557.56,323.87 1559.51,325.05 1561,325.16 1563.7,414.77 1567,324.72 1570.23,323.26 1572.67,322.8 1575,322.17 1577.87,322.15 1580.25,320.89 1583.13,321.03 1585.31,320.29 1587,320.1 1587.46,319.81 1589.55,317.66 1592,315.99 1593.94,316.06 1596.17,316.67 1599.04,315.33 1600.9,315.25 1602.6,411.09 1605.3,314.41 1608.99,313.27 1613,311.26 1614.44,311.13 1616.59,312.04 1619.21,312.31 1621.68,312.46 1622.8,311.95 1624.7,390.99 1626.2,355.79 1628.3,433.56 1634.5,310.82 1637.13,310.97 1639,310.85 1639.1,310.88 1641.8,416.06 1646.3,313.04 1647.96,312.96 1650.44,313.04 1652.29,312.5 1655.17,313.55 1657,312.58 1660.3,438.28 1666.4,316.03 1667.18,316.31 1669.95,318.62 1672.79,319.4 1675.19,319.17 1676.9,320.77 1678.8,435.43 1683.9,318.69 1685.24,318.42 1686,318.4 1686.1,318.29 1687.6,446.06 1693.3,311 1694.11,310.96 1696.68,310.08 1699.42,310.97 1701.64,310.31 1703.65,308.76 1706,308.61 1709.19,308.67 1711,308.84 1711,309.34 1709.19,309.17 1706,309.11 1703.65,309.25 1701.64,310.73 1699.42,311.35 1696.68,310.51 1694.11,311.35 1693.3,311.38 1687.6,446.15 1686.1,318.31 1686,318.41 1685.24,318.42 1683.9,318.69 1678.8,435.43 1676.9,320.77 1675.19,319.17 1672.79,319.4 1669.95,318.62 1667.18,316.42 1666.4,316.15 1660.3,438.47 1657,312.88 1655.17,313.8 1652.29,312.8 1650.44,313.32 1646.3,313.32 1641.8,416.42 1639.1,311.27 1639,311.24 1637.13,311.36 1634.5,311.21 1628.3,433.97 1626.2,356.19 1624.7,391.38 1622.8,312.29 1621.68,312.77 1619.21,312.63 1616.59,312.37 1614.44,311.51 1613,311.66 1608.99,313.64 1605.3,314.79 1602.6,411.47 1600.9,315.66 1599.04,315.75 1596.17,317.04 1593.94,316.47 1592,316.42 1589.55,318.01 1587.46,320.05 1587,320.34 1585.31,320.52 1583.13,321.24 1580.25,321.12 1577.87,322.32 1575,322.36 1572.67,322.97 1570.23,323.41 1567,324.81 1563.7,414.85 1561,325.26 1559.51,325.17 1557.56,324.06 1557,323.88 1555.14,324.08 1552.86,325.26 1550.97,325.67 1548.31,325.76 1545.5,326.8 1543.07,327.94 1538.03,328.97 1535.51,329.99 1533.11,330.42 1530.13,331.44 1528.33,331.62 1526.3,332.23 1521.2,434.23 1518.9,390.13 1518,334.83 1517.66,334.71 1517,334.98 1515.32,334.83 1513,334.98 1512.41,335.35 1510.11,335.06 1507,336.94 1504.48,337.67 1501.36,337.16 1500,337.29 1498.83,337.55 1496.33,338.55 1495,338.68 1493.24,338.51 1491.05,338.75 1488.72,339.85 1486.86,338.79 1484.47,339.67 1481.49,338.89 1480,337.88 1479.22,337.73 1477.15,339.51 1475,339.4 1474.25,339.06 1472.08,338.85 1468.88,339.32 1468,338.87 1466.57,338.39 1464.15,339.2 1462.05,338.44 1459.75,338.67 1456.58,339.21 1455,339.28 1454.69,339.08 1452,336.03 1448.2,454.28 1445,331.79 1442,331.69 1441.71,331.52 1439.32,331.45 1437,330.28 1436.45,330.69 1433.83,331.84 1433,332.53 1428.7,333.27 1427,334.14 1426.56,334.17 1423.81,332.25 1422,331.88 1418.58,330.59 1418,330.08 1415.61,330.51 1415,330.89 1412.2,413.7 1410,331.91 1407.36,330.16 1404.65,330.04 1403,328.9 1401.71,328.69 1399.33,329.47 1396.93,328.99 1395,330.25 1392,425.16 1389.1,329.94 1385.73,331.34 1383.72,330.83 1382.9,330.97 1381.3,410.9 1380,333.74 1377.2,334.82 1374.6,416.15 1372.1,402.84 1369.2,440.24 1365.6,339.58 1364,339.97 1362.86,340.52 1357.32,344 1355.38,344.26 1353.51,344.93 1352,345.1 1349.44,346.65 1347.38,348.19 1345,349.73 1341.33,351.21 1340,352.12 1339.5,352.15 1336.88,351.28 1335,352.06 1334.28,352.61 1331.17,353.24 1328.24,354.34 1327,354.55 1322.98,356.23 1322,356.33 1319.96,356.27 1317.87,358.15 1315.14,357.99 1315,358.09 1313,356.53 1310.6,356.58 1308.54,356.44 1306.62,356.27 1306,356.06 1304.59,356.33 1302.17,358.47 1300,359.64 1299.52,359.82 1296.45,360.37 1293.63,361.94 1290.89,362.83 1288.88,364.17 1288,364.53 1285.98,364.88 1284.12,363.99 1282.03,365.89 1279.53,365.82 1279,365.99 1276,364.55 1275,364.56 1272.96,364.96 1271.13,365.63 1269.26,364.98 1267.19,365.28 1265,364.97 1262.61,365.59 1259.44,366.66 1256.85,366.65 1253.9,367 1251.19,368.98 1250,369.13 1248.28,368.12 1247,367.14 1246.18,367.2 1243.13,368.78 1241.13,370.18 1240,370.04 1238.42,369.53 1235.25,371.12 1233.23,371.9 1230.73,372.39 1227.82,373.28 1224.67,373.01 1221.94,374.64 1220,375.25 1215.27,375.9 1213.18,376.77 1213,376.75 1210.79,374.32 1210,373.64 1208.09,373.37 1205.15,373.36 1202.77,374.33 1200.39,374.14 1197.27,375.65 1195,375.39 1194.49,374.88 1193,374.17 1192.15,374.21 1189.09,373.89 1186.35,373.83 1185,373.23 1184.37,373.09 1181.38,373.22 1179.15,372.84 1176.94,373.81 1175.12,372.97 1172.86,373.8 1169.83,373.5 1167.31,374.17 1164.14,374.44 1162.16,374.41 1159.09,374.64 1154.32,374.71 1151.91,373.44 1149.68,373.7 1146.85,374.51 1144.78,373.75 1139.74,375.26 1135.11,375.67 1132.42,376.51 1129.52,378.03 1126.9,377.71 1125,378.85 1124.59,378.91 1121.6,377.49 1120,377.7 1119.57,377.93 1117.3,377.97 1114,379.27 1113.22,379.26 1111.06,377.74 1108.89,378.11 1108,377.94 1105.99,376.79 1105,375.93 1103.06,375.52 1100.87,375.9 1100,376.32 1098.72,376.24 1095.75,373.79 1095,373.57 1087.33,376.11 1084.33,376 1082.09,376.85 1081,377.44 1079.7,377.72 1077.72,376.49 1074.78,376.65 1070,376.15 1067.71,376.12 1064.99,377.64 1062.29,377.39 1059.53,377.55 1053.83,378.74 1051.89,379 1049.7,380.62 1046.72,381.49 1044.22,381.78 1042,382.96 1039.69,381.71 1037.77,382.16 1035,381.25 1025,384.2 1023.6,383.97 1022.1,409.95 1020.6,382.9 1020,382.77 1018.58,382.75 1016.5,383.25 1015,382.84 1014.68,382.95 1012.87,384.35 1010.61,384.86 1010,385.46 1008.33,385.25 1005,383.41 997.07,385.52 994.21,387.4 991.82,387.07 988.71,388.86 985.74,390.37 981.23,391.92 979.33,393.08 977,394.09 975,395.39 973.55,395.1 970,394.73 968.55,395.14 965.72,396.23 962.95,396.36 960.87,396.13 959,397.7 956,401.43 952,405.61 950.35,405.13 948.4,405.16 948,404.97 945.2,404.9 943.28,405.96 942,406.32 941.35,406.2 938.26,404.54 937,404.05 933.41,404.93 933,405.2 930,401.63 928.12,401.31 925.96,399.58 925,399.45 923.8,399.47 921.98,399.17 919.71,398.48 918,398.77 917.01,399.37 913.87,400.16 910.78,401.14 909,402.03 907.69,401.52 905,400.22 900,401.94 899.25,402.05 897.13,401.52 893.97,402.88 890.91,402.16 888.46,403.64 883.37,404.49 880.98,403.78 878.21,404.37 875.63,405.42 875,405.45 872.67,404.44 872,404.33 869.74,403.43 867.49,401.49 864.91,400.7 862,399.26 860.01,398.79 857.19,399.42 852.43,397.99 849.64,398 847.8,398.34 844.88,398.65 841.84,398.57 840,397.96 839.36,397.88 836.51,399.19 833,399.43 831.02,397.15 830,396.52 828.84,396.36 826,393.55 825.67,393.44 823.1,394.45 821.13,394.32 818.74,394.56 814.18,396.26 811.77,395.72 806.99,396.12 804.74,397.21 799.62,397.7 796.47,398.47 793,399 790.52,397.23 790,396.73 788.4,396.08 786.28,394.75 784,395.3 783.24,394.81 780.32,391.43 779,389.55 778.05,389.39 775.03,389.65 773,390.84 772.32,390.73 770,388.11 769.57,387.86 767.5,388.64 764.88,387.74 758.99,389.06 756.58,389.4 754.29,388.85 752.35,390.61 752,390.56 749.4,388.88 747.11,388.01 745,387.53 741.75,388.63 740,388.72 739,386.79 735.6,385.78 735,385.94 733.33,386.71 730.78,386.89 728,387.48 727.1,386.93 725.3,438.19 723.5,384.11 723.34,383.97 722,383.57 721.41,383.59 718.59,382.9 715.69,381.71 715,381.65 710.87,382.6 705.66,383.28 703.07,385.64 701.05,384.04 699.19,383.56 697,383.57 693.85,384.64 691.28,385.01 690,385.04 688.41,384.81 686.09,386.36 682.99,386.35 680.93,386.08 676.48,386.67 673.86,386.43 670,387.37 668.43,388.25 666.46,388.62 665,389.5 662,388.61 661.57,388.78 658,389.15 657.38,388.87 655.47,388.9 652,388.28 650.68,388.58 648.4,387.49 646.06,389.21 643,389.12 641.76,389.34 638,390.99 636.07,390.03 634,388.42 633.62,388.42 629.7,389.38 627.76,390.07 623.81,390.98 621.99,391.8 620,392.3 617.61,390.54 614.48,386.75 613,386.5 612.54,386.79 610.4,385.97 608.9,428.2 607.4,386.76 604.81,386.52 601.69,385.19 598.61,386.21 596.1,384.81 589.1,383.53 586.3,383.21 584,381.79 581.77,382.14 579.15,383.36 576.57,383.66 575,384.06 573.83,384.18 571.64,383.73 568.94,384.27 565,383.91 564.03,383.94 562.06,384.62 559.25,386 555,386.6 552,384.44 550.16,383.85 548,382.87 547.07,382.64 544.99,383.06 542.67,383.21 539.89,382.84 536.77,383.27 534.2,382.91 532.21,382.83 530.2,381.24 528.22,381.61 525.64,381.6 523.62,381.16 519.25,381.76 516.15,381.79 513.22,381.33 510.38,382.35 508.43,382.06 505.91,382.41 502.77,381.64 500.16,382.23 498.31,381.99 495.38,383.29 493.25,383.15 488.31,383.79 485.32,383.38 483.24,383.55 480.74,384.72 477.98,384.48 475.85,385.7 473.44,385.49 471.61,386.16 470,387.23 469.37,387.49 466.24,386.82 465,386.75 463.53,386.24 461.26,384.68 459,384.03 458.54,384.13 456.56,385.5 453.7,385.9 452,385.68 450.91,384.64 448.85,383.41 446.61,383.08 446,382.68 443.97,382.47 441.48,381.84 439.37,382.36 437.25,381.97 435.43,381.48 433.44,381.9 430,381.42 424.74,379.7 422,379.45 419.95,380.22 417.81,379.91 415.57,380.88 413.33,380.69 410.25,381.3 408.23,380.51 406.21,381.67 403.54,381.14 400.71,381.96 398.36,381.39 396.01,382.04 395,382.03 393.77,382.22 390.81,383.59 390,383.66 388,385.13 386,384.64 385,384.08 383.22,383.83 380.5,382.78 377.99,382.99 375,382.21 372.58,382.6 370.21,383.21 367.86,383.13 365.66,383.99 363.01,384.6 360.75,386.26 357.85,386.97 356.02,387.62 353.87,388.72 353,388.69 351.94,390.87 351,393.21 349.36,393.93 347,394.73 346,395.29 344.32,394.08 341.55,392.85 341,392.2 338.44,390.31 335,389.86 332.95,389.83 330.26,389.07 327.92,389.25 327,388.74 325.1,388.34 322.5,389.01 320.36,389.14 317.97,391.04 315.61,391.8 315,392.26 312.53,393.3 310.69,392.5 307.61,394.09 304.9,394.15 302.17,394.96 299.85,394.82 296.68,395.18 294.51,395.26 291.92,396.49 290,396.13 289.03,395.82 287.21,396.68 284.38,395.59 281.68,396.61 279.11,396.85 276.02,397.31 272.82,396.61 270,396.81 267.36,397.84 265.25,398.37 262.75,399.31 260.65,400.37 257.53,400.95 255.6,402.55 253.64,401.64 244.44,404.12 241.5,404.08 238.48,404.94 236.65,404.81 234.62,405.62 232,405.59 229.99,406.22 227.45,406.03 224.73,406.63 223,406.41 222.19,406.43 219.19,407.62 216.03,408.69 211.42,409.75 210,410.45 207.28,410.75 204.77,409.28 200.82,409.62 200,409.07 198.91,408.96 197.05,410.56 194.83,410.36 193,411.66 191.84,411.65 188.78,410.05 186.73,409.43 185,409.1 182.82,410.26 180,410.64 177,408.36 175.21,408.81 172.74,410.29 170.57,410.54 168.21,411.39 165.36,410.91 162,412.12 160.68,412.73 155.76,413.68 153.6,414.79 153,414.91 150.86,414.15 148.31,412.97 146.05,413.44 144.06,412.02 140,411.13 138.94,411.12 136.69,412.19 134.31,411.68 131.78,412.41 127.47,410.33 125,409.96 124.44,409.12 122.06,406.37 121,404.38 119.15,403.8 116.64,403.26 113.73,403.96 111.67,403.75 109.86,402.97 107.33,403.71 105.13,403.1 103.01,404.22 100.98,402.82 98.4,403.64 95.52,402.79 92.39,403 91.6,402.86 89.8,423.39 88,401.78 87.06,401.55 84.58,402.28 81.83,401.46 78.95,401.76 75.86,401.78 72.09,401.42 70.07,402.03 67.94,401.81 64.98,403.56 62.95,402.64 59.81,403.94 57.18,403.99 54.61,406.05 52,407.34 48,404.84 47.42,404.81 44.89,404.11 42.06,404.62 39.02,404.4 37.08,404.09 36,404.46 34.2,405.47 31.08,404.93 28.24,406.99 25.09,406.75 23.26,407.18 22,407.81 21.19,408.65 19,410.06 17,409.66 14.88,409.58 12.58,408.86 10.54,408.77 9,408.27 8.13,408.3 6.1,409.57 4.03,409.89 1.81,411.24 0,411.17Z"/>
<path fill="#004D40" d="M0,411.17 1.81,411.24 4.03,409.89 6.1,409.57 8.13,408.3 9,408.27 10.54,408.77 12.58,408.86 14.88,409.58 17,409.66 19,410.06 21.19,408.65 22,407.81 23.26,407.18 25.09,406.75 28.24,406.99 31.08,404.88 34.2,405.47 36,404.41 37.08,404.02 39.02,404.37 42.06,404.62 44.89,404.1 47.42,404.81 48,404.84 52,407.34 54.61,406.05 57.18,403.99 59.81,403.94 62.95,402.57 64.98,403.56 67.94,401.69 70.07,401.92 72.09,401.27 73.95,401.55 75.86,401.66 78.95,401.65 81.83,401.33 84.58,402.22 87.06,401.44 88,401.68 89.8,423.35 91.6,402.85 92.39,403 95.52,402.79 98.4,403.64 100.98,402.82 103.01,404.22 105.13,403.1 107.33,403.71 109.86,402.97 111.67,403.75 113.73,403.96 116.64,403.26 119.15,403.8 121,404.38 122.06,406.37 124.44,409.12 125,409.96 127.47,410.33 131.78,412.41 134.31,411.68 136.69,412.19 138.94,411.12 140,411.13 144.06,412.02 146.05,413.44 148.31,412.97 150.86,414.15 153,414.91 153.6,414.79 155.76,413.68 160.68,412.73 162,412.12 165.36,410.91 168.21,411.39 170.57,410.54 172.74,410.29 175.21,408.81 177,408.36 180,410.64 182.82,410.26 185,409.1 186.73,409.43 188.78,410.05 191.84,411.65 193,411.66 194.83,410.36 197.05,410.56 198.91,408.96 200,409.07 200.82,409.62 204.77,409.28 207.28,410.75 210,410.45 211.42,409.75 216.03,408.69 219.19,407.62 222.19,406.43 223,406.41 224.73,406.63 227.45,406.03 229.99,406.22 232,405.59 234.62,405.62 236.65,404.81 238.48,404.94 241.5,404.07 244.44,404.12 253.64,401.63 255.6,402.55 257.53,400.95 260.65,400.37 262.75,399.28 265.25,398.3 267.36,397.76 270,396.7 272.82,396.51 276.02,397.28 279.11,396.81 281.68,396.58 284.38,395.51 287.21,396.68 289.03,395.79 290,396.13 291.92,396.49 294.51,395.24 296.68,395.17 299.85,394.8 302.17,394.96 304.9,394.12 307.61,394.08 310.69,392.39 312.53,393.26 315,392.16 315.61,391.67 317.97,390.88 320.36,388.85 322.5,388.7 325.1,387.99 327,388.42 327.92,388.97 330.26,388.78 332.95,389.59 335,389.62 338.44,390.1 341,392.17 341.55,392.85 344.32,394.08 346,395.29 347,394.73 349.36,393.93 351,393.21 351.94,390.87 353,388.67 353.87,388.7 356.02,387.52 357.85,386.83 360.75,386.06 363.01,384.29 365.66,383.63 367.86,382.71 370.21,382.8 372.58,382.14 375,381.73 377.99,382.57 380.5,382.35 383.22,383.49 385,383.75 386,384.36 388,384.89 390,383.31 390.81,383.24 393.77,381.77 395,381.57 396.01,381.58 398.36,380.89 400.71,381.5 403.54,380.63 406.21,381.19 408.23,379.95 410.25,380.8 413.33,380.15 415.57,380.36 417.81,379.32 419.95,379.66 422,378.83 424.74,379.11 430,380.96 433.44,381.48 435.43,381.04 437.25,381.57 439.37,381.99 441.48,381.44 443.97,382.12 446,382.35 446.61,382.79 448.85,383.15 450.91,384.48 452,385.59 453.7,385.84 456.56,385.41 458.54,383.94 459,383.83 461.26,384.54 463.53,386.22 465,386.75 466.24,386.82 469.37,387.49 470,387.23 471.61,386.15 473.44,385.44 475.85,385.67 477.98,384.36 480.74,384.63 483.24,383.38 485.32,383.2 488.31,383.64 493.25,382.98 495.38,383.13 498.31,381.74 500.16,382.01 502.77,381.38 505.91,382.22 508.43,381.85 510.38,382.17 513.22,381.08 516.15,381.58 519.25,381.56 523.62,380.93 525.64,381.41 528.22,381.43 530.2,381.03 532.21,382.74 534.2,382.81 536.77,383.21 539.89,382.73 542.67,383.13 544.99,382.95 547.07,382.5 548,382.75 550.16,383.8 552,384.43 555,386.6 559.25,386 562.06,384.6 564.03,383.86 565,383.83 568.94,384.21 571.64,383.62 573.83,384.1 575,383.97 576.57,383.53 579.15,383.21 581.77,381.89 584,381.51 586.3,383.03 589.1,383.37 593.48,384.31 596.1,384.73 598.61,386.21 601.69,385.13 604.81,386.52 607.4,386.76 608.9,428.2 610.4,385.96 612.54,386.79 613,386.5 614.48,386.74 617.61,390.54 620,392.3 621.99,391.8 623.81,390.98 627.76,390.07 629.7,389.38 633.62,388.42 634,388.42 636.07,390.03 638,390.99 641.76,389.34 643,389.12 646.06,389.21 648.4,387.49 650.68,388.58 652,388.28 655.47,388.9 657.38,388.87 658,389.15 661.57,388.78 662,388.61 665,389.5 666.46,388.62 668.43,388.25 670,387.37 673.86,386.43 676.48,386.67 680.93,386.08 682.99,386.35 686.09,386.36 688.41,384.81 690,385.04 691.28,385.01 693.85,384.64 697,383.57 699.19,383.56 701.05,384.04 703.07,385.64 705.66,383.28 710.87,382.6 715,381.65 715.69,381.71 718.59,382.9 721.41,383.59 722,383.57 723.34,383.97 723.5,384.11 725.3,438.19 727.1,386.93 728,387.48 730.78,386.89 733.33,386.71 735,385.94 735.6,385.78 739,386.79 740,388.72 741.75,388.63 745,387.53 747.11,388.01 749.4,388.88 752,390.56 752.35,390.61 754.29,388.85 756.58,389.4 758.99,389.06 764.88,387.74 767.5,388.64 769.57,387.86 770,388.11 772.32,390.73 773,390.84 775.03,389.65 778.05,389.37 779,389.54 780.32,391.43 783.24,394.81 784,395.3 786.28,394.75 788.4,396.08 790,396.73 790.52,397.23 793,399 796.47,398.47 799.62,397.7 804.74,397.21 806.99,396.12 811.77,395.72 814.18,396.26 818.74,394.56 821.13,394.32 823.1,394.45 825.67,393.44 826,393.55 828.84,396.36 830,396.52 831.02,397.15 833,399.43 836.51,399.19 839.36,397.88 840,397.96 841.84,398.57 844.88,398.65 847.8,398.34 849.64,398 852.43,397.99 857.19,399.42 860.01,398.79 862,399.26 864.91,400.7 867.49,401.49 869.74,403.43 872,404.33 872.67,404.44 875,405.45 875.63,405.42 878.21,404.37 880.98,403.78 883.37,404.49 888.46,403.64 890.91,402.16 893.97,402.88 897.13,401.52 899.25,402.05 900,401.94 905,400.22 907.69,401.52 909,402.03 910.78,401.14 913.87,400.16 917.01,399.37 918,398.77 919.71,398.48 921.98,399.17 923.8,399.47 925,399.45 925.96,399.58 928.12,401.31 930,401.63 933,405.2 933.41,404.93 937,404.05 938.26,404.54 941.35,406.2 942,406.32 943.28,405.96 945.2,404.9 948,404.97 948.4,405.16 950.35,405.13 952,405.61 956,401.43 959,397.7 960.87,396.13 962.95,396.36 965.72,396.23 968.55,395.14 970,394.73 973.55,395.1 975,395.39 977,394.09 979.33,393.08 981.23,391.92 985.74,390.37 988.71,388.86 991.82,387.04 994.21,387.4 997.07,385.51 1005,383.35 1008.33,385.25 1010,385.46 1010.61,384.86 1012.87,384.35 1014.68,382.94 1015,382.82 1016.5,383.25 1018.58,382.75 1020,382.77 1020.6,382.9 1022.1,409.95 1023.6,383.97 1025,384.2 1035,381.24 1037.77,382.16 1039.69,381.71 1042,382.96 1044.22,381.78 1046.72,381.49 1049.7,380.62 1051.89,378.99 1053.83,378.73 1059.53,377.54 1062.29,377.39 1064.99,377.64 1067.71,376.1 1070,376.14 1074.78,376.65 1077.72,376.49 1079.7,377.72 1081,377.44 1082.09,376.85 1084.33,376 1087.33,376.11 1089.49,375.46 1095,373.5 1095.75,373.73 1098.72,376.24 1100,376.32 1100.87,375.9 1103.06,375.51 1105,375.91 1105.99,376.79 1108,377.94 1108.89,378.11 1111.06,377.74 1113.22,379.26 1114,379.27 1117.3,377.97 1119.57,377.93 1120,377.7 1121.6,377.48 1124.59,378.91 1125,378.85 1126.9,377.71 1129.52,378.03 1132.42,376.51 1135.11,375.67 1139.74,375.26 1144.78,373.75 1146.85,374.51 1149.68,373.7 1151.91,373.44 1154.32,374.71 1159.09,374.64 1162.16,374.41 1164.14,374.44 1167.31,374.17 1169.83,373.5 1172.86,373.8 1175.12,372.97 1176.94,373.81 1179.15,372.84 1181.38,373.22 1184.37,373.09 1185,373.23 1186.35,373.83 1189.09,373.89 1192.15,374.21 1193,374.17 1194.49,374.88 1195,375.39 1197.27,375.65 1200.39,374.14 1202.77,374.33 1205.15,373.31 1208.09,373.31 1210,373.6 1213,376.75 1213.18,376.77 1215.27,375.9 1220,375.25 1221.94,374.64 1224.67,373.01 1227.82,373.28 1230.73,372.39 1233.23,371.9 1235.25,371.12 1238.42,369.53 1240,370.04 1241.13,370.18 1243.13,368.78 1246.18,367.16 1247,367.11 1248.28,368.12 1250,369.13 1251.19,368.98 1253.9,367 1256.85,366.65 1259.44,366.66 1262.61,365.59 1265,364.97 1267.19,365.28 1269.26,364.98 1271.13,365.63 1272.96,364.96 1275,364.56 1276,364.55 1279,365.99 1279.53,365.82 1282.03,365.89 1284.12,363.99 1285.98,364.88 1288,364.53 1288.88,364.17 1290.89,362.83 1293.63,361.94 1296.45,360.37 1299.52,359.82 1300,359.64 1302.17,358.47 1304.59,356.32 1306,356.06 1306.62,356.27 1308.54,356.44 1310.6,356.58 1313,356.53 1315,358.09 1315.14,357.99 1317.87,358.15 1319.96,356.27 1322,356.33 1322.98,356.23 1327,354.55 1328.24,354.34 1331.17,353.24 1334.28,352.61 1335,352.06 1336.88,351.28 1339.5,352.15 1340,352.12 1341.33,351.21 1345,349.73 1347.38,348.19 1349.44,346.65 1352,345.1 1353.51,344.93 1355.38,344.26 1357.32,344 1362.86,340.5 1364,339.93 1365.6,339.55 1369.2,440.19 1372.1,402.76 1374.6,416.07 1377.2,334.7 1380,333.61 1381.3,410.71 1382.9,330.7 1383.72,330.56 1385.73,331.13 1389.1,329.65 1392,424.9 1395,330.03 1396.93,328.7 1399.33,329.23 1401.71,328.41 1403,328.64 1404.65,329.88 1407.36,330.04 1410,331.91 1412.2,413.7 1415,330.85 1415.61,330.44 1418,329.98 1418.58,330.53 1422,331.88 1423.81,332.25 1426.56,334.17 1427,334.14 1428.7,333.27 1433,332.53 1433.83,331.84 1436.45,330.66 1437,330.21 1439.32,331.45 1441.71,331.52 1442,331.69 1445,331.79 1448.2,454.28 1452,336.03 1454.69,339.08 1455,339.28 1456.58,339.21 1459.75,338.67 1462.05,338.44 1464.15,339.2 1466.57,338.39 1468,338.87 1468.88,339.32 1472.08,338.85 1474.25,339.06 1475,339.4 1477.15,339.51 1479.22,337.73 1480,337.88 1481.49,338.89 1484.47,339.67 1486.86,338.79 1488.72,339.85 1491.05,338.75 1493.24,338.51 1495,338.68 1496.33,338.55 1498.83,337.55 1500,337.29 1501.36,337.16 1504.48,337.67 1507,336.94 1510.11,334.99 1512.41,335.3 1513,334.9 1515.32,334.75 1517,334.93 1517.66,334.66 1518,334.79 1518.9,390.13 1521.2,434.23 1526.3,332.14 1528.33,331.51 1530.13,331.35 1533.11,330.31 1535.51,329.88 1538.03,328.81 1543.07,327.78 1545.5,326.58 1548.31,325.5 1550.97,325.44 1552.86,325.02 1555.14,323.78 1557,323.59 1557.56,323.8 1559.51,325.01 1561,325.12 1563.7,414.73 1567,324.68 1570.23,323.2 1572.67,322.74 1575,322.1 1577.87,322.08 1580.25,320.8 1583.13,320.95 1585.31,320.2 1587,320.01 1587.46,319.71 1589.55,317.52 1592,315.83 1593.94,315.9 1596.17,316.52 1599.04,315.16 1600.9,315.09 1602.6,410.93 1605.3,314.26 1608.99,313.12 1613,311.1 1614.44,310.97 1616.59,311.91 1619.21,312.19 1621.68,312.34 1622.8,311.82 1624.7,390.84 1626.2,355.64 1628.3,433.4 1634.5,310.66 1637.13,310.82 1639,310.7 1639.1,310.73 1641.8,415.92 1646.3,312.93 1647.96,312.84 1650.44,312.93 1652.29,312.37 1655.17,313.45 1657,312.46 1660.3,438.21 1666.4,315.98 1667.18,316.27 1669.95,318.62 1672.79,319.4 1675.19,319.17 1676.9,320.77 1678.8,435.43 1683.9,318.69 1685.24,318.41 1686,318.4 1686.1,318.29 1687.6,446.02 1693.3,310.84 1694.11,310.81 1696.68,309.91 1699.42,310.81 1701.64,310.15 1703.65,308.56 1706,308.41 1706.39,308.49 1709.19,308.47 1711,308.65 1711,308.84 1709.19,308.67 1706,308.61 1703.65,308.76 1701.64,310.31 1699.42,310.97 1696.68,310.08 1694.11,310.96 1693.3,311 1687.6,446.06 1686.1,318.29 1686,318.4 1685.24,318.42 1683.9,318.69 1678.8,435.43 1676.9,320.77 1675.19,319.17 1672.79,319.4 1669.95,318.62 1667.18,316.31 1666.4,316.03 1660.3,438.28 1657,312.58 1655.17,313.55 1652.29,312.5 1650.44,313.04 1647.96,312.96 1646.3,313.04 1641.8,416.06 1639.1,310.88 1639,310.85 1637.13,310.97 1634.5,310.82 1628.3,433.56 1626.2,355.79 1624.7,390.99 1622.8,311.95 1621.68,312.46 1619.21,312.31 1616.59,312.04 1614.44,311.13 1613,311.26 1608.99,313.27 1605.3,314.41 1602.6,411.09 1600.9,315.25 1599.04,315.33 1596.17,316.67 1593.94,316.06 1592,315.99 1589.55,317.66 1587.46,319.81 1587,320.1 1585.31,320.29 1583.13,321.03 1580.25,320.89 1577.87,322.15 1575,322.17 1572.67,322.8 1570.23,323.26 1567,324.72 1563.7,414.77 1561,325.16 1559.51,325.05 1557.56,323.87 1557,323.67 1555.14,323.87 1552.86,325.09 1550.97,325.51 1548.31,325.58 1545.5,326.64 1543.07,327.82 1538.03,328.86 1535.51,329.91 1533.11,330.34 1530.13,331.38 1528.33,331.54 1526.3,332.17 1521.2,434.23 1518.9,390.13 1518,334.8 1517.66,334.68 1517,334.95 1515.32,334.77 1513,334.92 1512.41,335.31 1510.11,335.01 1507,336.94 1504.48,337.67 1501.36,337.16 1500,337.29 1498.83,337.55 1496.33,338.55 1495,338.68 1493.24,338.51 1491.05,338.75 1488.72,339.85 1486.86,338.79 1484.47,339.67 1481.49,338.89 1480,337.88 1479.22,337.73 1477.15,339.51 1475,339.4 1474.25,339.06 1472.08,338.85 1468.88,339.32 1468,338.87 1466.57,338.39 1464.15,339.2 1462.05,338.44 1459.75,338.67 1456.58,339.21 1455,339.28 1454.69,339.08 1452,336.03 1448.2,454.28 1445,331.79 1442,331.69 1441.71,331.52 1439.32,331.45 1437,330.23 1436.45,330.67 1433.83,331.84 1433,332.53 1428.7,333.27 1427,334.14 1426.56,334.17 1423.81,332.25 1422,331.88 1418.58,330.55 1418,330.01 1415.61,330.46 1415,330.86 1412.2,413.7 1410,331.91 1407.36,330.07 1404.65,329.93 1403,328.72 1401.71,328.49 1399.33,329.3 1396.93,328.78 1395,330.1 1392,424.98 1389.1,329.73 1385.73,331.19 1383.72,330.63 1382.9,330.78 1381.3,410.76 1380,333.64 1377.2,334.74 1374.6,416.1 1372.1,402.78 1369.2,440.2 1365.6,339.56 1364,339.94 1362.86,340.51 1357.32,344 1355.38,344.26 1353.51,344.93 1352,345.1 1349.44,346.65 1347.38,348.19 1345,349.73 1341.33,351.21 1340,352.12 1339.5,352.15 1336.88,351.28 1335,352.06 1334.28,352.61 1331.17,353.24 1328.24,354.34 1327,354.55 1322.98,356.23 1322,356.33 1319.96,356.27 1317.87,358.15 1315.14,357.99 1315,358.09 1313,356.53 1310.6,356.58 1308.54,356.44 1306.62,356.27 1306,356.06 1304.59,356.32 1302.17,358.47 1300,359.64 1299.52,359.82 1296.45,360.37 1293.63,361.94 1290.89,362.83 1288.88,364.17 1288,364.53 1285.98,364.88 1284.12,363.99 1282.03,365.89 1279.53,365.82 1279,365.99 1276,364.55 1275,364.56 1272.96,364.96 1271.13,365.63 1269.26,364.98 1267.19,365.28 1265,364.97 1262.61,365.59 1259.44,366.66 1256.85,366.65 1253.9,367 1251.19,368.98 1250,369.13 1248.28,368.12 1247,367.12 1246.18,367.17 1243.13,368.78 1241.13,370.18 1240,370.04 1238.42,369.53 1235.25,371.12 1233.23,371.9 1230.73,372.39 1227.82,373.28 1224.67,373.01 1221.94,374.64 1220,375.25 1215.27,375.9 1213.18,376.77 1213,376.75 1210,373.61 1208.09,373.33 1205.15,373.33 1202.77,374.33 1200.39,374.14 1197.27,375.65 1195,375.39 1194.49,374.88 1193,374.17 1192.15,374.21 1189.09,373.89 1186.35,373.83 1185,373.23 1184.37,373.09 1181.38,373.22 1179.15,372.84 1176.94,373.81 1175.12,372.97 1172.86,373.8 1169.83,373.5 1167.31,374.17 1164.14,374.44 1162.16,374.41 1159.09,374.64 1154.32,374.71 1151.91,373.44 1149.68,373.7 1146.85,374.51 1144.78,373.75 1139.74,375.26 1135.11,375.67 1132.42,376.51 1129.52,378.03 1126.9,377.71 1125,378.85 1124.59,378.91 1121.6,377.48 1120,377.7 1119.57,377.93 1117.3,377.97 1114,379.27 1113.22,379.26 1111.06,377.74 1108.89,378.11 1108,377.94 1105.99,376.79 1105,375.92 1103.06,375.51 1100.87,375.9 1100,376.32 1098.72,376.24 1095.75,373.75 1095,373.52 1087.33,376.11 1084.33,376 1082.09,376.85 1081,377.44 1079.7,377.72 1077.72,376.49 1074.78,376.65 1070,376.14 1067.71,376.1 1064.99,377.64 1062.29,377.39 1059.53,377.54 1053.83,378.73 1051.89,378.99 1049.7,380.62 1046.72,381.49 1044.22,381.78 1042,382.96 1039.69,381.71 1037.77,382.16 1035,381.24 1025,384.2 1023.6,383.97 1022.1,409.95 1020.6,382.9 1020,382.77 1018.58,382.75 1016.5,383.25 1015,382.83 1014.68,382.94 1012.87,384.35 1010.61,384.86 1010,385.46 1008.33,385.25 1005,383.37 997.07,385.51 994.21,387.4 991.82,387.05 988.71,388.86 985.74,390.37 981.23,391.92 979.33,393.08 977,394.09 975,395.39 973.55,395.1 970,394.73 968.55,395.14 965.72,396.23 962.95,396.36 960.87,396.13 959,397.7 956,401.43 952,405.61 950.35,405.13 948.4,405.16 948,404.97 945.2,404.9 943.28,405.96 942,406.32 941.35,406.2 938.26,404.54 937,404.05 933.41,404.93 933,405.2 930,401.63 928.12,401.31 925.96,399.58 925,399.45 923.8,399.47 921.98,399.17 919.71,398.48 918,398.77 917.01,399.37 913.87,400.16 910.78,401.14 909,402.03 907.69,401.52 905,400.22 900,401.94 899.25,402.05 897.13,401.52 893.97,402.88 890.91,402.16 888.46,403.64 883.37,404.49 880.98,403.78 878.21,404.37 875.63,405.42 875,405.45 872.67,404.44 872,404.33 869.74,403.43 867.49,401.49 864.91,400.7 862,399.26 860.01,398.79 857.19,399.42 852.43,397.99 849.64,398 847.8,398.34 844.88,398.65 841.84,398.57 840,397.96 839.36,397.88 836.51,399.19 833,399.43 831.02,397.15 830,396.52 828.84,396.36 826,393.55 825.67,393.44 823.1,394.45 821.13,394.32 818.74,394.56 814.18,396.26 811.77,395.72 806.99,396.12 804.74,397.21 799.62,397.7 796.47,398.47 793,399 790.52,397.23 790,396.73 788.4,396.08 786.28,394.75 784,395.3 783.24,394.81 780.32,391.43 779,389.54 778.05,389.38 775.03,389.65 773,390.84 772.32,390.73 770,388.11 769.57,387.86 767.5,388.64 764.88,387.74 758.99,389.06 756.58,389.4 754.29,388.85 752.35,390.61 752,390.56 749.4,388.88 747.11,388.01 745,387.53 741.75,388.63 740,388.72 739,386.79 735.6,385.78 735,385.94 733.33,386.71 730.78,386.89 728,387.48 727.1,386.93 725.3,438.19 723.5,384.11 723.34,383.97 722,383.57 721.41,383.59 718.59,382.9 715.69,381.71 715,381.65 710.87,382.6 705.66,383.28 703.07,385.64 701.05,384.04 699.19,383.56 697,383.57 693.85,384.64 691.28,385.01 690,385.04 688.41,384.81 686.09,386.36 682.99,386.35 680.93,386.08 676.48,386.67 673.86,386.43 670,387.37 668.43,388.25 666.46,388.62 665,389.5 662,388.61 661.57,388.78 658,389.15 657.38,388.87 655.47,388.9 652,388.28 650.68,388.58 648.4,387.49 646.06,389.21 643,389.12 641.76,389.34 638,390.99 636.07,390.03 634,388.42 633.62,388.42 629.7,389.38 627.76,390.07 623.81,390.98 621.99,391.8 620,392.3 617.61,390.54 614.48,386.74 613,386.5 612.54,386.79 610.4,385.96 608.9,428.2 607.4,386.76 604.81,386.52 601.69,385.15 598.61,386.21 596.1,384.76 593.48,384.34 589.1,383.42 586.3,383.08 584,381.59 581.77,381.96 579.15,383.25 576.57,383.57 575,383.99 573.83,384.13 571.64,383.66 568.94,384.22 565,383.85 564.03,383.88 562.06,384.61 559.25,386 555,386.6 552,384.44 550.16,383.81 548,382.78 547.07,382.54 544.99,382.98 542.67,383.15 539.89,382.76 536.77,383.22 534.2,382.84 532.21,382.77 530.2,381.09 528.22,381.48 525.64,381.46 523.62,381 519.25,381.62 516.15,381.64 513.22,381.16 510.38,382.22 508.43,381.91 505.91,382.28 502.77,381.45 500.16,382.07 498.31,381.81 495.38,383.18 493.25,383.03 488.31,383.68 485.32,383.25 483.24,383.43 480.74,384.65 477.98,384.4 475.85,385.68 473.44,385.46 471.61,386.15 470,387.23 469.37,387.49 466.24,386.82 465,386.75 463.53,386.22 461.26,384.58 459,383.89 458.54,383.99 456.56,385.44 453.7,385.86 452,385.62 450.91,384.52 448.85,383.22 446.61,382.87 446,382.45 443.97,382.22 441.48,381.55 439.37,382.09 437.25,381.69 435.43,381.17 433.44,381.6 430,381.09 424.74,379.28 422,379.01 419.95,379.82 417.81,379.49 415.57,380.51 413.33,380.31 410.25,380.95 408.23,380.11 406.21,381.33 403.54,380.77 400.71,381.63 398.36,381.03 396.01,381.71 395,381.7 393.77,381.9 390.81,383.34 390,383.41 388,384.96 386,384.44 385,383.85 383.22,383.59 380.5,382.47 377.99,382.69 375,381.87 372.58,382.27 370.21,382.92 367.86,382.83 365.66,383.73 363.01,384.38 360.75,386.12 357.85,386.87 356.02,387.55 353.87,388.71 353,388.68 351.94,390.87 351,393.21 349.36,393.93 347,394.73 346,395.29 344.32,394.08 341.55,392.85 341,392.18 338.44,390.16 335,389.69 332.95,389.66 330.26,388.86 327.92,389.05 327,388.51 325.1,388.09 322.5,388.79 320.36,388.93 317.97,390.92 315.61,391.71 315,392.19 312.53,393.27 310.69,392.42 307.61,394.08 304.9,394.13 302.17,394.96 299.85,394.81 296.68,395.17 294.51,395.24 291.92,396.49 290,396.13 289.03,395.8 287.21,396.68 284.38,395.53 281.68,396.59 279.11,396.82 276.02,397.29 272.82,396.54 270,396.73 267.36,397.78 265.25,398.32 262.75,399.29 260.65,400.37 257.53,400.95 255.6,402.55 253.64,401.63 244.44,404.12 241.5,404.07 238.48,404.94 236.65,404.81 234.62,405.62 232,405.59 229.99,406.22 227.45,406.03 224.73,406.63 223,406.41 222.19,406.43 219.19,407.62 216.03,408.69 211.42,409.75 210,410.45 207.28,410.75 204.77,409.28 200.82,409.62 200,409.07 198.91,408.96 197.05,410.56 194.83,410.36 193,411.66 191.84,411.65 188.78,410.05 186.73,409.43 185,409.1 182.82,410.26 180,410.64 177,408.36 175.21,408.81 172.74,410.29 170.57,410.54 168.21,411.39 165.36,410.91 162,412.12 160.68,412.73 155.76,413.68 153.6,414.79 153,414.91 150.86,414.15 148.31,412.97 146.05,413.44 144.06,412.02 140,411.13 138.94,411.12 136.69,412.19 134.31,411.68 131.78,412.41 127.47,410.33 125,409.96 124.44,409.12 122.06,406.37 121,404.38 119.15,403.8 116.64,403.26 113.73,403.96 111.67,403.75 109.86,402.97 107.33,403.71 105.13,403.1 103.01,404.22 100.98,402.82 98.4,403.64 95.52,402.79 92.39,403 91.6,402.85 89.8,423.36 88,401.71 87.06,401.47 84.58,402.24 81.83,401.37 78.95,401.68 75.86,401.7 73.95,401.59 72.09,401.31 70.07,401.95 67.94,401.72 64.98,403.56 62.95,402.59 59.81,403.94 57.18,403.99 54.61,406.05 52,407.34 48,404.84 47.42,404.81 44.89,404.1 42.06,404.62 39.02,404.38 37.08,404.04 36,404.42 34.2,405.47 31.08,404.89 28.24,406.99 25.09,406.75 23.26,407.18 22,407.81 21.19,408.65 19,410.06 17,409.66 14.88,409.58 12.58,408.86 10.54,408.77 9,408.27 8.13,408.3 6.1,409.57 4.03,409.89 1.81,411.24 0,411.17Z"/>
</g>
<line x1="0" y1="872.5" x2="1711" y2="872.5" stroke="#6E7079" stroke-width="1"/>
<g stroke="#6E7079" stroke-width="1"><line x1="116.4" y1="872.4" x2="116.4" y2="878.2"/><line x1="453" y1="872.4" x2="453" y2="878.2"/><line x1="790" y1="872.4" x2="790" y2="878.2"/><line x1="1127" y1="872.4" x2="1127" y2="878.2"/><line x1="1464" y1="872.4" x2="1464" y2="878.2"/></g>
<g fill="#959aa3" font-family="Liberation Sans" font-size="15" text-anchor="middle"><text x="116.4" y="910">27</text><text x="453" y="910">28</text><text x="790" y="910">29</text><text x="1127" y="910">30</text><text x="1464" y="910">31</text></g>
<text x="475.5" y="929" fill="#9095a0" font-family="Liberation Sans" font-size="15" letter-spacing="0.53">December 2023</text>
<rect x="-10" y="935.2" width="1723.1" height="36.2" rx="3" fill="#283250" stroke="#aab3cf" stroke-width="1.6"/>
<path d="M0,941.4 L91.2,941.4 L93.1,945.8 L95.2,941.4 L609.5,941.4 L612.2,949.9 L614.9,941.4 L726.5,941.4 L729,952.1 L731.5,941.4 L1022.8,941.4 L1025.3,946.5 L1027.8,941.4 L1368.2,941.4 L1369.7,950.4 L1372.3,963.7 L1374.8,956.5 L1377.9,958 L1379.9,941.4 L1382.5,941.4 L1384,956.5 L1386.5,941.4 L1391.7,941.4 L1395.2,959 L1398.8,941.4 L1412.6,941.4 L1415.6,957.5 L1418.2,941.4 L1448.3,941.4 L1450.4,964.7 L1455,941.4 L1520.3,941.4 L1524.4,961.1 L1529.5,941.4 L1564,941.4 L1566.5,958.5 L1570.1,941.4 L1603.8,941.4 L1605.3,958.5 L1608.9,941.4 L1626.3,941.4 L1628.3,956.5 L1629.6,949.4 L1631.9,962.6 L1637.5,941.4 L1640,941.4 L1644.7,959.6 L1649.3,941.4 L1660.5,941.4 L1663.5,962.6 L1669.2,941.4 L1679.4,941.4 L1682.4,960.6 L1687,941.4 L1689.1,941.4 L1690.6,963.7 L1695.7,941.4 L1710,941.4" fill="none" stroke="#737b94" stroke-width="0.9"/>
<line x1="1713" y1="935" x2="1713" y2="971.5" stroke="#a6b0cc" stroke-width="1.2"/>
<rect x="1708.6" y="941.7" width="8.2" height="23.3" rx="2.5" fill="#ffffff" stroke="#c5d0ee" stroke-width="1"/>
</svg>

<div class="btn" style="left:954px;top:17px;width:44px;height:40px;"></div>
<div class="btn" style="left:1008px;top:17px;width:44px;height:40px;"></div>
<div class="grp">
  <div class="act"></div>
<span style="left:10.40px;letter-spacing:-0.8px">2H (LIVE)</span>
<span style="left:100.90px;">24H</span>
<span style="left:153.80px;">1W</span>
<span style="left:201.40px;">1M</span>
<span style="left:246.65px;">3M</span>
<span style="left:293.65px;">6M</span>
<span style="left:338.25px;">1Y</span>
<span style="left:377.90px;">2Y</span>
<span style="left:417.40px;">3Y</span>
<span style="left:457.70px;">4Y</span>
<span style="left:498.50px;">All</span>
</div>
<div class="btn" style="left:1601px;top:17px;width:58px;height:39px;"></div>
<div class="btn" style="left:1669px;top:17px;width:44px;height:39px;"></div>
<svg width="1763" height="80" viewBox="0 0 1763 80">
<circle cx="975.85" cy="35.75" r="9.05" fill="#fff"/>
<path d="M976,30.6 V35.6 L979.6,38.1" fill="none" stroke="#105fb0" stroke-width="2.2" stroke-linecap="round" stroke-linejoin="round"/>
<rect x="1020" y="27.95" width="19.8" height="12.1" rx="1.6" fill="none" stroke="#fff" stroke-width="2"/>
<rect x="1022" y="42.1" width="15.8" height="2.5" rx="1.25" fill="#fff"/>
<path d="M1615.4,29 H1631 Q1632.4,29.2 1631.9,30.7 L1625.2,38.8 V43.9 Q1623,43.6 1621,41.8 V38.8 L1614.1,30.7 Q1613.7,29.2 1615.4,29 Z" fill="#fff"/>
<path d="M1638,34.1 H1648 L1643,38.9 Z" fill="#fff"/>
<line x1="1686.55" y1="32.5" x2="1686.55" y2="44.2" stroke="#fff" stroke-width="2.3" stroke-linecap="round"/>
<path d="M1686.55,28.3 L1690.6,32.8 H1682.5 Z" fill="#fff" stroke="#fff" stroke-width="0.9" stroke-linejoin="round"/>
<line x1="1695.25" y1="29" x2="1695.25" y2="41" stroke="#fff" stroke-width="2.2" stroke-linecap="round"/>
<path d="M1691.4,40.6 H1699.4 L1695.3,45 Z" fill="#fff" stroke="#fff" stroke-width="0.9" stroke-linejoin="round"/>
</svg>
</body></html>
